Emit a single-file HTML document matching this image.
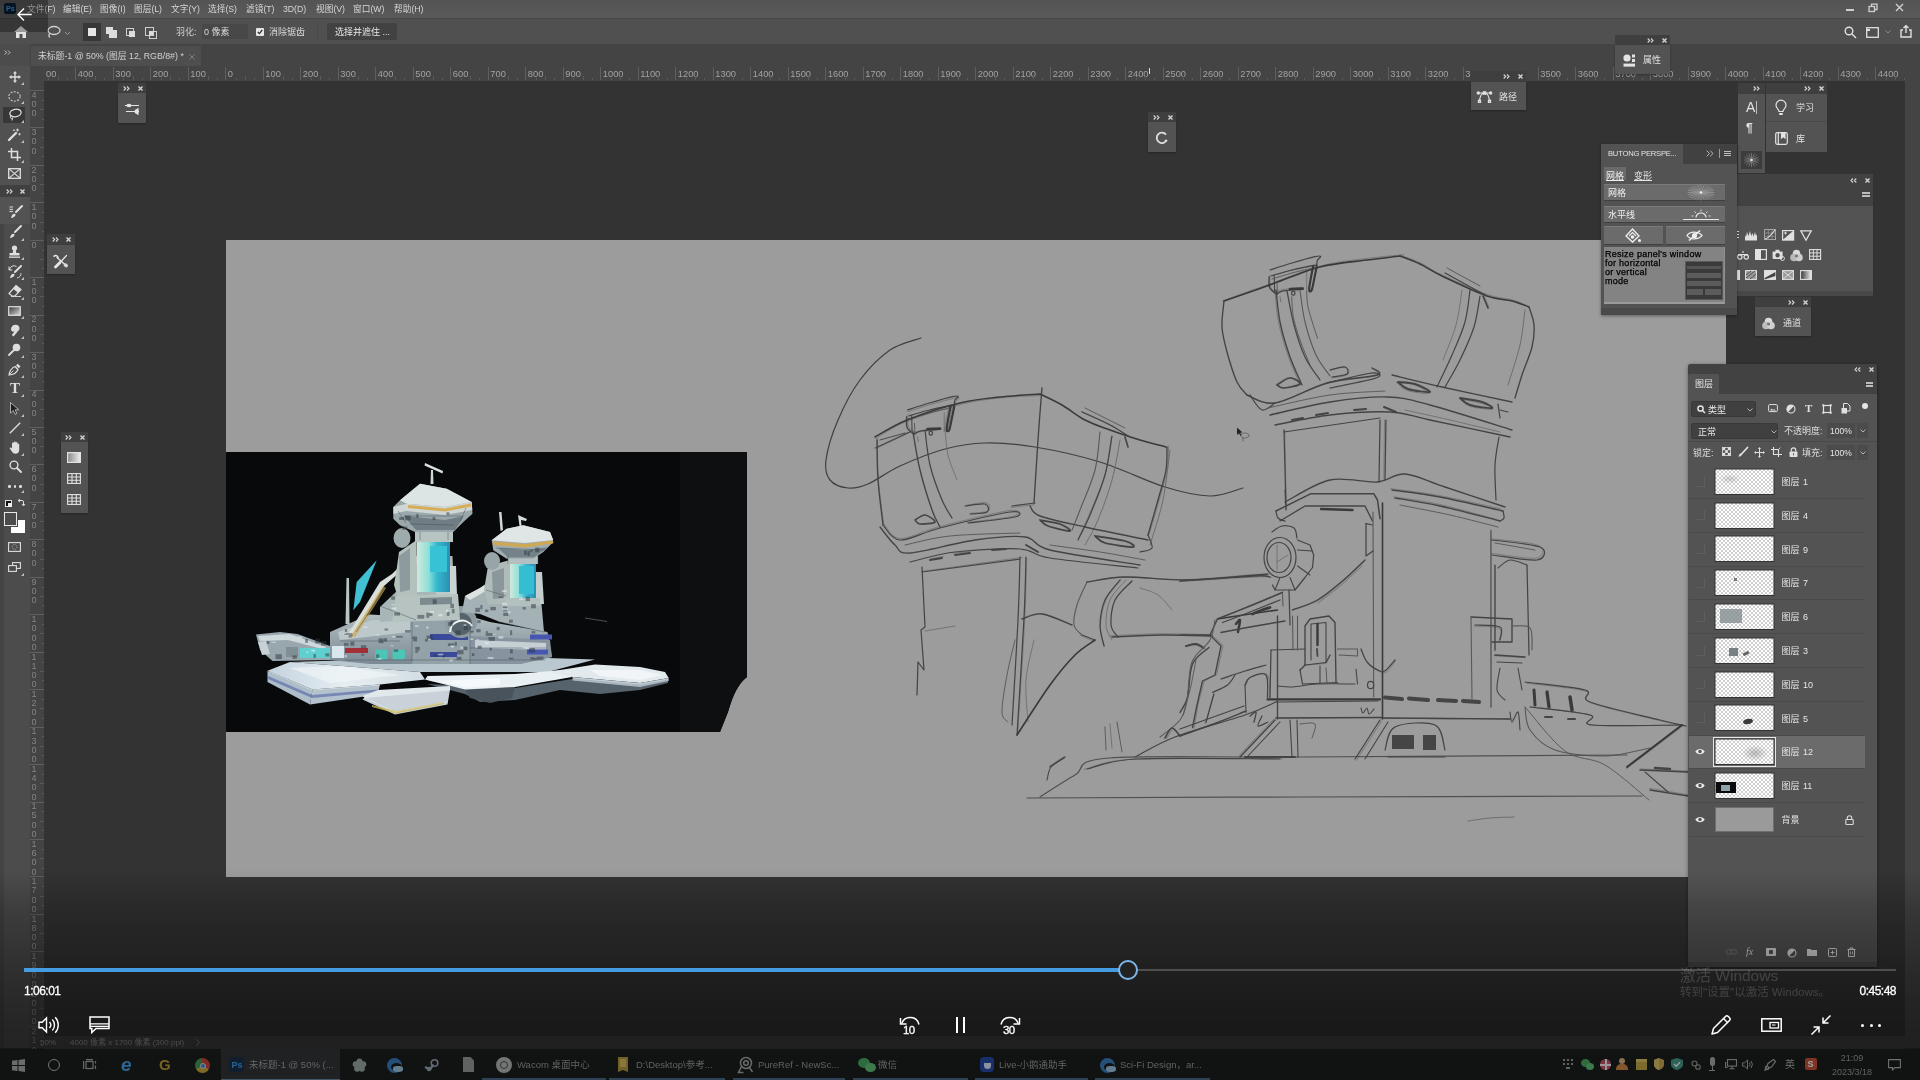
<!DOCTYPE html>
<html lang="zh-CN">
<head>
<meta charset="utf-8">
<title>未标题-1 @ 50% (图层 12, RGB/8#) *</title>
<style>
html,body{margin:0;padding:0;width:1920px;height:1080px;overflow:hidden;background:#333333;}
body{position:relative;font-family:"Liberation Sans","Noto Sans CJK SC",sans-serif;font-size:9px;color:#d6d6d6;-webkit-font-smoothing:antialiased;}
.a{position:absolute;}
.t{position:absolute;white-space:nowrap;line-height:1;}
svg{position:absolute;overflow:visible;}
.pn{position:absolute;background:#535353;box-shadow:0 1px 3px rgba(0,0,0,.35);}
.ph{position:absolute;left:0;right:0;top:0;background:#454545;}
.chev{position:absolute;font-size:7px;line-height:1;color:#d0d0d0;letter-spacing:-1px;font-weight:bold;}
.rn{position:absolute;top:69.5px;font-size:9.3px;line-height:1;color:#a2a2a2;}
.rt{position:absolute;top:67px;width:1px;height:13px;background:#5f5f5f;}
.vn{position:absolute;left:30px;font-size:9px;line-height:9.3px;color:#858585;width:8px;text-align:center;word-break:break-all;white-space:normal;}
</style>
</head>
<body>
<div id="root" style="position:absolute;left:0;top:0;width:1920px;height:1080px;transform:translateZ(0);will-change:transform">
<div class="a" style="left:0;top:0;width:1920px;height:18px;background:linear-gradient(to bottom,#545454,#5a5a5a)"></div>
<div class="a" style="left:0;top:18px;width:1920px;height:26.500px;background:#505050;border-top:1px solid #484848;box-sizing:border-box"></div>
<div class="a" style="left:0;top:44px;width:1920px;height:37px;background:#444444"></div>
<div class="a" style="left:0;top:44px;width:30px;height:1004px;background:#4c4c4c"></div>
<div class="a" style="left:30px;top:66px;width:14px;height:982px;background:#444444"></div>
<div class="a" style="left:1905px;top:81px;width:15px;height:967px;background:#444444"></div>
<div class="a" style="left:31px;top:46px;width:170px;height:20px;background:#4e4e4e"></div>
<div class="t" style="left:38px;top:52px;font-size:8.800px;color:#d0d0d0">未标题-1 @ 50% (图层 12, RGB/8#) *</div>
<svg style="left:188.500px;top:53.500px" width="6" height="6" viewBox="0 0 6 6" stroke="#7e7e7e" stroke-width="1"><path d="M0.500 0.500L5.500 5.500M5.500 0.500L0.500 5.500"/></svg>
<div class="t" style="left:27px;top:4.500px;font-size:8.700px;color:#d6d6d6">文件(F)</div>
<div class="t" style="left:63px;top:4.500px;font-size:8.700px;color:#d6d6d6">编辑(E)</div>
<div class="t" style="left:100px;top:4.500px;font-size:8.700px;color:#d6d6d6">图像(I)</div>
<div class="t" style="left:134px;top:4.500px;font-size:8.700px;color:#d6d6d6">图层(L)</div>
<div class="t" style="left:171px;top:4.500px;font-size:8.700px;color:#d6d6d6">文字(Y)</div>
<div class="t" style="left:208px;top:4.500px;font-size:8.700px;color:#d6d6d6">选择(S)</div>
<div class="t" style="left:246px;top:4.500px;font-size:8.700px;color:#d6d6d6">滤镜(T)</div>
<div class="t" style="left:283px;top:4.500px;font-size:8.700px;color:#d6d6d6">3D(D)</div>
<div class="t" style="left:316px;top:4.500px;font-size:8.700px;color:#d6d6d6">视图(V)</div>
<div class="t" style="left:353px;top:4.500px;font-size:8.700px;color:#d6d6d6">窗口(W)</div>
<div class="t" style="left:394px;top:4.500px;font-size:8.700px;color:#d6d6d6">帮助(H)</div>
<div class="a" style="left:4px;top:3px;width:12px;height:11px;background:#0a1e33;border-radius:2px"></div><div class="t" style="left:6px;top:5px;font-size:7px;color:#3d8fd8;font-weight:bold">Ps</div>
<div class="a" style="left:1846px;top:9px;width:8px;height:2px;background:#cfcfcf"></div>
<svg style="left:1868px;top:3px" width="10" height="10" viewBox="0 0 10 10" fill="none" stroke="#cfcfcf" stroke-width="1.300"><rect x="1" y="3.500" width="5.500" height="5"/><path d="M3.500 3.500V1.200H9V6.500H6.500"/></svg>
<svg style="left:1895px;top:3px" width="9" height="9" viewBox="0 0 9 9" stroke="#cfcfcf" stroke-width="1.400"><path d="M1 1L8 8M8 1L1 8"/></svg>
<svg style="left:14px;top:26px" width="14" height="12" viewBox="0 0 14 12" fill="#e2e2e2"><path d="M7 0L0 6h2v6h3.500V8h3v4H12V6h2z"/></svg>
<svg style="left:46px;top:25px" width="16" height="14" viewBox="0 0 16 14" fill="none" stroke="#cfcfcf" stroke-width="1.300"><ellipse cx="8" cy="5.500" rx="6" ry="4"/><path d="M4 8.500c-1.500 1-1.500 3 0 4"/></svg>
<svg style="left:64px;top:31px" width="7" height="5" viewBox="0 0 7 5" fill="none" stroke="#9a9a9a" stroke-width="1"><path d="M1 1l2.500 2.500L6 1"/></svg>
<div class="a" style="left:83px;top:23px;width:18px;height:18px;background:#383838"></div>
<div class="a" style="left:88px;top:28px;width:8px;height:8px;background:#e6e6e6"></div>
<div class="a" style="left:106px;top:27px;width:7px;height:7px;background:#dcdcdc"></div><div class="a" style="left:109px;top:30px;width:8px;height:8px;background:#dcdcdc"></div>
<div class="a" style="left:126px;top:28px;width:6px;height:6px;border:1px solid #cfcfcf"></div><div class="a" style="left:129px;top:31px;width:6px;height:6px;background:#dcdcdc"></div>
<div class="a" style="left:145px;top:27px;width:7px;height:7px;border:1px solid #cfcfcf"></div><div class="a" style="left:149px;top:31px;width:6px;height:6px;border:1px solid #cfcfcf"></div><div class="a" style="left:149px;top:31px;width:4px;height:4px;background:#dcdcdc"></div>
<div class="t" style="left:176px;top:28px;font-size:9px;color:#d0d0d0">羽化:</div>
<div class="a" style="left:202px;top:24px;width:46px;height:15px;background:#484848"></div>
<div class="t" style="left:204px;top:28px;font-size:9px;color:#dadada">0 像素</div>
<div class="a" style="left:256px;top:28px;width:8px;height:8px;background:#e6e6e6;border-radius:1px"></div>
<svg style="left:257px;top:29px" width="6" height="6" viewBox="0 0 6 6" fill="none" stroke="#333" stroke-width="1.300"><path d="M0.800 3l1.600 1.600L5.200 1"/></svg>
<div class="t" style="left:269px;top:28px;font-size:9px;color:#dadada">消除锯齿</div>
<div class="a" style="left:317px;top:22px;width:1px;height:19px;background:#484848"></div>
<div class="a" style="left:327px;top:23px;width:70px;height:17px;background:#424242;border-radius:2px"></div>
<div class="t" style="left:335px;top:28px;font-size:9px;color:#e8e8e8">选择并遮住 ...</div>
<svg style="left:1844px;top:26px" width="13" height="13" viewBox="0 0 13 13" fill="none" stroke="#e0e0e0" stroke-width="1.400"><circle cx="5" cy="5" r="3.800"/><path d="M8 8l4 4"/></svg>
<svg style="left:1866px;top:27px" width="13" height="11" viewBox="0 0 13 11" fill="none" stroke="#e0e0e0" stroke-width="1.300"><rect x="0.700" y="0.700" width="11.600" height="9.600"/><path d="M1 3h3" stroke-width="2"/></svg>
<svg style="left:1885px;top:30px" width="6" height="4" viewBox="0 0 6 4" fill="none" stroke="#8a8a8a" stroke-width="1"><path d="M0.500 0.500l2.500 2.500L5.500 0.500"/></svg>
<svg style="left:1900px;top:25px" width="12" height="13" viewBox="0 0 12 13" fill="none" stroke="#e0e0e0" stroke-width="1.400"><path d="M3 5H1v7h10V5H9M6 8V1M3.500 3L6 0.800 8.500 3"/></svg>
<div class="rn" style="left:46.0px">00</div>
<div class="a" style="left:48.2px;top:78px;width:1px;height:2px;background:#5a5a5a"></div>
<div class="a" style="left:57.6px;top:76px;width:1px;height:4px;background:#5a5a5a"></div>
<div class="a" style="left:66.9px;top:78px;width:1px;height:2px;background:#5a5a5a"></div>
<div class="rt" style="left:75.3px"></div>
<div class="rn" style="left:77.8px">400</div>
<div class="a" style="left:85.7px;top:78px;width:1px;height:2px;background:#5a5a5a"></div>
<div class="a" style="left:95.1px;top:76px;width:1px;height:4px;background:#5a5a5a"></div>
<div class="a" style="left:104.4px;top:78px;width:1px;height:2px;background:#5a5a5a"></div>
<div class="rt" style="left:112.8px"></div>
<div class="rn" style="left:115.3px">300</div>
<div class="a" style="left:123.2px;top:78px;width:1px;height:2px;background:#5a5a5a"></div>
<div class="a" style="left:132.6px;top:76px;width:1px;height:4px;background:#5a5a5a"></div>
<div class="a" style="left:141.9px;top:78px;width:1px;height:2px;background:#5a5a5a"></div>
<div class="rt" style="left:150.3px"></div>
<div class="rn" style="left:152.8px">200</div>
<div class="a" style="left:160.7px;top:78px;width:1px;height:2px;background:#5a5a5a"></div>
<div class="a" style="left:170.1px;top:76px;width:1px;height:4px;background:#5a5a5a"></div>
<div class="a" style="left:179.4px;top:78px;width:1px;height:2px;background:#5a5a5a"></div>
<div class="rt" style="left:187.8px"></div>
<div class="rn" style="left:190.3px">100</div>
<div class="a" style="left:198.2px;top:78px;width:1px;height:2px;background:#5a5a5a"></div>
<div class="a" style="left:207.6px;top:76px;width:1px;height:4px;background:#5a5a5a"></div>
<div class="a" style="left:216.9px;top:78px;width:1px;height:2px;background:#5a5a5a"></div>
<div class="rt" style="left:225.3px"></div>
<div class="rn" style="left:227.8px">0</div>
<div class="a" style="left:235.7px;top:78px;width:1px;height:2px;background:#5a5a5a"></div>
<div class="a" style="left:245.1px;top:76px;width:1px;height:4px;background:#5a5a5a"></div>
<div class="a" style="left:254.4px;top:78px;width:1px;height:2px;background:#5a5a5a"></div>
<div class="rt" style="left:262.8px"></div>
<div class="rn" style="left:265.3px">100</div>
<div class="a" style="left:273.2px;top:78px;width:1px;height:2px;background:#5a5a5a"></div>
<div class="a" style="left:282.6px;top:76px;width:1px;height:4px;background:#5a5a5a"></div>
<div class="a" style="left:291.9px;top:78px;width:1px;height:2px;background:#5a5a5a"></div>
<div class="rt" style="left:300.3px"></div>
<div class="rn" style="left:302.8px">200</div>
<div class="a" style="left:310.7px;top:78px;width:1px;height:2px;background:#5a5a5a"></div>
<div class="a" style="left:320.1px;top:76px;width:1px;height:4px;background:#5a5a5a"></div>
<div class="a" style="left:329.4px;top:78px;width:1px;height:2px;background:#5a5a5a"></div>
<div class="rt" style="left:337.8px"></div>
<div class="rn" style="left:340.3px">300</div>
<div class="a" style="left:348.2px;top:78px;width:1px;height:2px;background:#5a5a5a"></div>
<div class="a" style="left:357.6px;top:76px;width:1px;height:4px;background:#5a5a5a"></div>
<div class="a" style="left:366.9px;top:78px;width:1px;height:2px;background:#5a5a5a"></div>
<div class="rt" style="left:375.3px"></div>
<div class="rn" style="left:377.8px">400</div>
<div class="a" style="left:385.7px;top:78px;width:1px;height:2px;background:#5a5a5a"></div>
<div class="a" style="left:395.1px;top:76px;width:1px;height:4px;background:#5a5a5a"></div>
<div class="a" style="left:404.4px;top:78px;width:1px;height:2px;background:#5a5a5a"></div>
<div class="rt" style="left:412.8px"></div>
<div class="rn" style="left:415.3px">500</div>
<div class="a" style="left:423.2px;top:78px;width:1px;height:2px;background:#5a5a5a"></div>
<div class="a" style="left:432.6px;top:76px;width:1px;height:4px;background:#5a5a5a"></div>
<div class="a" style="left:441.9px;top:78px;width:1px;height:2px;background:#5a5a5a"></div>
<div class="rt" style="left:450.3px"></div>
<div class="rn" style="left:452.8px">600</div>
<div class="a" style="left:460.7px;top:78px;width:1px;height:2px;background:#5a5a5a"></div>
<div class="a" style="left:470.1px;top:76px;width:1px;height:4px;background:#5a5a5a"></div>
<div class="a" style="left:479.4px;top:78px;width:1px;height:2px;background:#5a5a5a"></div>
<div class="rt" style="left:487.8px"></div>
<div class="rn" style="left:490.3px">700</div>
<div class="a" style="left:498.2px;top:78px;width:1px;height:2px;background:#5a5a5a"></div>
<div class="a" style="left:507.6px;top:76px;width:1px;height:4px;background:#5a5a5a"></div>
<div class="a" style="left:516.9px;top:78px;width:1px;height:2px;background:#5a5a5a"></div>
<div class="rt" style="left:525.3px"></div>
<div class="rn" style="left:527.8px">800</div>
<div class="a" style="left:535.7px;top:78px;width:1px;height:2px;background:#5a5a5a"></div>
<div class="a" style="left:545.0px;top:76px;width:1px;height:4px;background:#5a5a5a"></div>
<div class="a" style="left:554.4px;top:78px;width:1px;height:2px;background:#5a5a5a"></div>
<div class="rt" style="left:562.8px"></div>
<div class="rn" style="left:565.3px">900</div>
<div class="a" style="left:573.2px;top:78px;width:1px;height:2px;background:#5a5a5a"></div>
<div class="a" style="left:582.5px;top:76px;width:1px;height:4px;background:#5a5a5a"></div>
<div class="a" style="left:591.9px;top:78px;width:1px;height:2px;background:#5a5a5a"></div>
<div class="rt" style="left:600.3px"></div>
<div class="rn" style="left:602.8px">1000</div>
<div class="a" style="left:610.7px;top:78px;width:1px;height:2px;background:#5a5a5a"></div>
<div class="a" style="left:620.0px;top:76px;width:1px;height:4px;background:#5a5a5a"></div>
<div class="a" style="left:629.4px;top:78px;width:1px;height:2px;background:#5a5a5a"></div>
<div class="rt" style="left:637.8px"></div>
<div class="rn" style="left:640.3px">1100</div>
<div class="a" style="left:648.2px;top:78px;width:1px;height:2px;background:#5a5a5a"></div>
<div class="a" style="left:657.5px;top:76px;width:1px;height:4px;background:#5a5a5a"></div>
<div class="a" style="left:666.9px;top:78px;width:1px;height:2px;background:#5a5a5a"></div>
<div class="rt" style="left:675.3px"></div>
<div class="rn" style="left:677.8px">1200</div>
<div class="a" style="left:685.7px;top:78px;width:1px;height:2px;background:#5a5a5a"></div>
<div class="a" style="left:695.0px;top:76px;width:1px;height:4px;background:#5a5a5a"></div>
<div class="a" style="left:704.4px;top:78px;width:1px;height:2px;background:#5a5a5a"></div>
<div class="rt" style="left:712.8px"></div>
<div class="rn" style="left:715.3px">1300</div>
<div class="a" style="left:723.2px;top:78px;width:1px;height:2px;background:#5a5a5a"></div>
<div class="a" style="left:732.5px;top:76px;width:1px;height:4px;background:#5a5a5a"></div>
<div class="a" style="left:741.9px;top:78px;width:1px;height:2px;background:#5a5a5a"></div>
<div class="rt" style="left:750.3px"></div>
<div class="rn" style="left:752.8px">1400</div>
<div class="a" style="left:760.7px;top:78px;width:1px;height:2px;background:#5a5a5a"></div>
<div class="a" style="left:770.0px;top:76px;width:1px;height:4px;background:#5a5a5a"></div>
<div class="a" style="left:779.4px;top:78px;width:1px;height:2px;background:#5a5a5a"></div>
<div class="rt" style="left:787.8px"></div>
<div class="rn" style="left:790.3px">1500</div>
<div class="a" style="left:798.2px;top:78px;width:1px;height:2px;background:#5a5a5a"></div>
<div class="a" style="left:807.5px;top:76px;width:1px;height:4px;background:#5a5a5a"></div>
<div class="a" style="left:816.9px;top:78px;width:1px;height:2px;background:#5a5a5a"></div>
<div class="rt" style="left:825.3px"></div>
<div class="rn" style="left:827.8px">1600</div>
<div class="a" style="left:835.7px;top:78px;width:1px;height:2px;background:#5a5a5a"></div>
<div class="a" style="left:845.0px;top:76px;width:1px;height:4px;background:#5a5a5a"></div>
<div class="a" style="left:854.4px;top:78px;width:1px;height:2px;background:#5a5a5a"></div>
<div class="rt" style="left:862.8px"></div>
<div class="rn" style="left:865.3px">1700</div>
<div class="a" style="left:873.2px;top:78px;width:1px;height:2px;background:#5a5a5a"></div>
<div class="a" style="left:882.5px;top:76px;width:1px;height:4px;background:#5a5a5a"></div>
<div class="a" style="left:891.9px;top:78px;width:1px;height:2px;background:#5a5a5a"></div>
<div class="rt" style="left:900.3px"></div>
<div class="rn" style="left:902.8px">1800</div>
<div class="a" style="left:910.7px;top:78px;width:1px;height:2px;background:#5a5a5a"></div>
<div class="a" style="left:920.0px;top:76px;width:1px;height:4px;background:#5a5a5a"></div>
<div class="a" style="left:929.4px;top:78px;width:1px;height:2px;background:#5a5a5a"></div>
<div class="rt" style="left:937.8px"></div>
<div class="rn" style="left:940.3px">1900</div>
<div class="a" style="left:948.2px;top:78px;width:1px;height:2px;background:#5a5a5a"></div>
<div class="a" style="left:957.5px;top:76px;width:1px;height:4px;background:#5a5a5a"></div>
<div class="a" style="left:966.9px;top:78px;width:1px;height:2px;background:#5a5a5a"></div>
<div class="rt" style="left:975.3px"></div>
<div class="rn" style="left:977.8px">2000</div>
<div class="a" style="left:985.7px;top:78px;width:1px;height:2px;background:#5a5a5a"></div>
<div class="a" style="left:995.0px;top:76px;width:1px;height:4px;background:#5a5a5a"></div>
<div class="a" style="left:1004.4px;top:78px;width:1px;height:2px;background:#5a5a5a"></div>
<div class="rt" style="left:1012.8px"></div>
<div class="rn" style="left:1015.3px">2100</div>
<div class="a" style="left:1023.2px;top:78px;width:1px;height:2px;background:#5a5a5a"></div>
<div class="a" style="left:1032.5px;top:76px;width:1px;height:4px;background:#5a5a5a"></div>
<div class="a" style="left:1041.9px;top:78px;width:1px;height:2px;background:#5a5a5a"></div>
<div class="rt" style="left:1050.3px"></div>
<div class="rn" style="left:1052.8px">2200</div>
<div class="a" style="left:1060.7px;top:78px;width:1px;height:2px;background:#5a5a5a"></div>
<div class="a" style="left:1070.0px;top:76px;width:1px;height:4px;background:#5a5a5a"></div>
<div class="a" style="left:1079.4px;top:78px;width:1px;height:2px;background:#5a5a5a"></div>
<div class="rt" style="left:1087.8px"></div>
<div class="rn" style="left:1090.3px">2300</div>
<div class="a" style="left:1098.2px;top:78px;width:1px;height:2px;background:#5a5a5a"></div>
<div class="a" style="left:1107.5px;top:76px;width:1px;height:4px;background:#5a5a5a"></div>
<div class="a" style="left:1116.9px;top:78px;width:1px;height:2px;background:#5a5a5a"></div>
<div class="rt" style="left:1125.3px"></div>
<div class="rn" style="left:1127.8px">2400</div>
<div class="a" style="left:1135.7px;top:78px;width:1px;height:2px;background:#5a5a5a"></div>
<div class="a" style="left:1145.0px;top:76px;width:1px;height:4px;background:#5a5a5a"></div>
<div class="a" style="left:1154.4px;top:78px;width:1px;height:2px;background:#5a5a5a"></div>
<div class="rt" style="left:1162.8px"></div>
<div class="rn" style="left:1165.3px">2500</div>
<div class="a" style="left:1173.2px;top:78px;width:1px;height:2px;background:#5a5a5a"></div>
<div class="a" style="left:1182.5px;top:76px;width:1px;height:4px;background:#5a5a5a"></div>
<div class="a" style="left:1191.9px;top:78px;width:1px;height:2px;background:#5a5a5a"></div>
<div class="rt" style="left:1200.3px"></div>
<div class="rn" style="left:1202.8px">2600</div>
<div class="a" style="left:1210.7px;top:78px;width:1px;height:2px;background:#5a5a5a"></div>
<div class="a" style="left:1220.0px;top:76px;width:1px;height:4px;background:#5a5a5a"></div>
<div class="a" style="left:1229.4px;top:78px;width:1px;height:2px;background:#5a5a5a"></div>
<div class="rt" style="left:1237.8px"></div>
<div class="rn" style="left:1240.3px">2700</div>
<div class="a" style="left:1248.2px;top:78px;width:1px;height:2px;background:#5a5a5a"></div>
<div class="a" style="left:1257.5px;top:76px;width:1px;height:4px;background:#5a5a5a"></div>
<div class="a" style="left:1266.9px;top:78px;width:1px;height:2px;background:#5a5a5a"></div>
<div class="rt" style="left:1275.3px"></div>
<div class="rn" style="left:1277.8px">2800</div>
<div class="a" style="left:1285.7px;top:78px;width:1px;height:2px;background:#5a5a5a"></div>
<div class="a" style="left:1295.0px;top:76px;width:1px;height:4px;background:#5a5a5a"></div>
<div class="a" style="left:1304.4px;top:78px;width:1px;height:2px;background:#5a5a5a"></div>
<div class="rt" style="left:1312.8px"></div>
<div class="rn" style="left:1315.3px">2900</div>
<div class="a" style="left:1323.2px;top:78px;width:1px;height:2px;background:#5a5a5a"></div>
<div class="a" style="left:1332.5px;top:76px;width:1px;height:4px;background:#5a5a5a"></div>
<div class="a" style="left:1341.9px;top:78px;width:1px;height:2px;background:#5a5a5a"></div>
<div class="rt" style="left:1350.3px"></div>
<div class="rn" style="left:1352.8px">3000</div>
<div class="a" style="left:1360.7px;top:78px;width:1px;height:2px;background:#5a5a5a"></div>
<div class="a" style="left:1370.0px;top:76px;width:1px;height:4px;background:#5a5a5a"></div>
<div class="a" style="left:1379.4px;top:78px;width:1px;height:2px;background:#5a5a5a"></div>
<div class="rt" style="left:1387.8px"></div>
<div class="rn" style="left:1390.3px">3100</div>
<div class="a" style="left:1398.2px;top:78px;width:1px;height:2px;background:#5a5a5a"></div>
<div class="a" style="left:1407.5px;top:76px;width:1px;height:4px;background:#5a5a5a"></div>
<div class="a" style="left:1416.9px;top:78px;width:1px;height:2px;background:#5a5a5a"></div>
<div class="rt" style="left:1425.3px"></div>
<div class="rn" style="left:1427.8px">3200</div>
<div class="a" style="left:1435.7px;top:78px;width:1px;height:2px;background:#5a5a5a"></div>
<div class="a" style="left:1445.0px;top:76px;width:1px;height:4px;background:#5a5a5a"></div>
<div class="a" style="left:1454.4px;top:78px;width:1px;height:2px;background:#5a5a5a"></div>
<div class="rt" style="left:1462.8px"></div>
<div class="rn" style="left:1465.3px">3</div>
<div class="a" style="left:1473.2px;top:78px;width:1px;height:2px;background:#5a5a5a"></div>
<div class="a" style="left:1482.5px;top:76px;width:1px;height:4px;background:#5a5a5a"></div>
<div class="a" style="left:1491.9px;top:78px;width:1px;height:2px;background:#5a5a5a"></div>
<div class="rt" style="left:1537.8px"></div>
<div class="rn" style="left:1540.3px">3500</div>
<div class="a" style="left:1548.2px;top:78px;width:1px;height:2px;background:#5a5a5a"></div>
<div class="a" style="left:1557.5px;top:76px;width:1px;height:4px;background:#5a5a5a"></div>
<div class="a" style="left:1566.9px;top:78px;width:1px;height:2px;background:#5a5a5a"></div>
<div class="rt" style="left:1575.3px"></div>
<div class="rn" style="left:1577.8px">3600</div>
<div class="a" style="left:1585.7px;top:78px;width:1px;height:2px;background:#5a5a5a"></div>
<div class="a" style="left:1595.0px;top:76px;width:1px;height:4px;background:#5a5a5a"></div>
<div class="a" style="left:1604.4px;top:78px;width:1px;height:2px;background:#5a5a5a"></div>
<div class="rt" style="left:1612.8px"></div>
<div class="rn" style="left:1615.3px">3700</div>
<div class="a" style="left:1623.2px;top:78px;width:1px;height:2px;background:#5a5a5a"></div>
<div class="a" style="left:1632.5px;top:76px;width:1px;height:4px;background:#5a5a5a"></div>
<div class="a" style="left:1641.9px;top:78px;width:1px;height:2px;background:#5a5a5a"></div>
<div class="rt" style="left:1650.3px"></div>
<div class="rn" style="left:1652.8px">3800</div>
<div class="a" style="left:1660.7px;top:78px;width:1px;height:2px;background:#5a5a5a"></div>
<div class="a" style="left:1670.0px;top:76px;width:1px;height:4px;background:#5a5a5a"></div>
<div class="a" style="left:1679.4px;top:78px;width:1px;height:2px;background:#5a5a5a"></div>
<div class="rt" style="left:1687.8px"></div>
<div class="rn" style="left:1690.3px">3900</div>
<div class="a" style="left:1698.2px;top:78px;width:1px;height:2px;background:#5a5a5a"></div>
<div class="a" style="left:1707.5px;top:76px;width:1px;height:4px;background:#5a5a5a"></div>
<div class="a" style="left:1716.9px;top:78px;width:1px;height:2px;background:#5a5a5a"></div>
<div class="rt" style="left:1725.3px"></div>
<div class="rn" style="left:1727.8px">4000</div>
<div class="a" style="left:1735.7px;top:78px;width:1px;height:2px;background:#5a5a5a"></div>
<div class="a" style="left:1745.0px;top:76px;width:1px;height:4px;background:#5a5a5a"></div>
<div class="a" style="left:1754.4px;top:78px;width:1px;height:2px;background:#5a5a5a"></div>
<div class="rt" style="left:1762.8px"></div>
<div class="rn" style="left:1765.3px">4100</div>
<div class="a" style="left:1773.2px;top:78px;width:1px;height:2px;background:#5a5a5a"></div>
<div class="a" style="left:1782.5px;top:76px;width:1px;height:4px;background:#5a5a5a"></div>
<div class="a" style="left:1791.9px;top:78px;width:1px;height:2px;background:#5a5a5a"></div>
<div class="rt" style="left:1800.3px"></div>
<div class="rn" style="left:1802.8px">4200</div>
<div class="a" style="left:1810.7px;top:78px;width:1px;height:2px;background:#5a5a5a"></div>
<div class="a" style="left:1820.0px;top:76px;width:1px;height:4px;background:#5a5a5a"></div>
<div class="a" style="left:1829.4px;top:78px;width:1px;height:2px;background:#5a5a5a"></div>
<div class="rt" style="left:1837.8px"></div>
<div class="rn" style="left:1840.3px">4300</div>
<div class="a" style="left:1848.2px;top:78px;width:1px;height:2px;background:#5a5a5a"></div>
<div class="a" style="left:1857.5px;top:76px;width:1px;height:4px;background:#5a5a5a"></div>
<div class="a" style="left:1866.9px;top:78px;width:1px;height:2px;background:#5a5a5a"></div>
<div class="rt" style="left:1875.3px"></div>
<div class="rn" style="left:1877.8px">4400</div>
<div class="a" style="left:1885.7px;top:78px;width:1px;height:2px;background:#5a5a5a"></div>
<div class="a" style="left:1895.0px;top:76px;width:1px;height:4px;background:#5a5a5a"></div>
<div class="a" style="left:1904.4px;top:78px;width:1px;height:2px;background:#5a5a5a"></div>
<div class="a" style="left:1149px;top:68px;width:1px;height:6px;background:#ddd"></div>
<div class="a" style="left:30px;top:89.9px;width:14px;height:1px;background:#606060"></div>
<div class="vn" style="top:90.7px">400</div>
<div class="a" style="left:42px;top:99.8px;width:2px;height:1px;background:#5a5a5a"></div>
<div class="a" style="left:40px;top:109.1px;width:4px;height:1px;background:#5a5a5a"></div>
<div class="a" style="left:42px;top:118.5px;width:2px;height:1px;background:#5a5a5a"></div>
<div class="a" style="left:30px;top:127.3px;width:14px;height:1px;background:#606060"></div>
<div class="vn" style="top:128.1px">300</div>
<div class="a" style="left:42px;top:137.2px;width:2px;height:1px;background:#5a5a5a"></div>
<div class="a" style="left:40px;top:146.6px;width:4px;height:1px;background:#5a5a5a"></div>
<div class="a" style="left:42px;top:155.9px;width:2px;height:1px;background:#5a5a5a"></div>
<div class="a" style="left:30px;top:164.8px;width:14px;height:1px;background:#606060"></div>
<div class="vn" style="top:165.6px">200</div>
<div class="a" style="left:42px;top:174.7px;width:2px;height:1px;background:#5a5a5a"></div>
<div class="a" style="left:40px;top:184.0px;width:4px;height:1px;background:#5a5a5a"></div>
<div class="a" style="left:42px;top:193.4px;width:2px;height:1px;background:#5a5a5a"></div>
<div class="a" style="left:30px;top:202.2px;width:14px;height:1px;background:#606060"></div>
<div class="vn" style="top:203.1px">100</div>
<div class="a" style="left:42px;top:212.1px;width:2px;height:1px;background:#5a5a5a"></div>
<div class="a" style="left:40px;top:221.5px;width:4px;height:1px;background:#5a5a5a"></div>
<div class="a" style="left:42px;top:230.8px;width:2px;height:1px;background:#5a5a5a"></div>
<div class="a" style="left:30px;top:239.7px;width:14px;height:1px;background:#606060"></div>
<div class="vn" style="top:240.5px">0</div>
<div class="a" style="left:42px;top:249.6px;width:2px;height:1px;background:#5a5a5a"></div>
<div class="a" style="left:40px;top:258.9px;width:4px;height:1px;background:#5a5a5a"></div>
<div class="a" style="left:42px;top:268.3px;width:2px;height:1px;background:#5a5a5a"></div>
<div class="a" style="left:30px;top:277.1px;width:14px;height:1px;background:#606060"></div>
<div class="vn" style="top:277.9px">100</div>
<div class="a" style="left:42px;top:287.0px;width:2px;height:1px;background:#5a5a5a"></div>
<div class="a" style="left:40px;top:296.4px;width:4px;height:1px;background:#5a5a5a"></div>
<div class="a" style="left:42px;top:305.7px;width:2px;height:1px;background:#5a5a5a"></div>
<div class="a" style="left:30px;top:314.6px;width:14px;height:1px;background:#606060"></div>
<div class="vn" style="top:315.4px">200</div>
<div class="a" style="left:42px;top:324.5px;width:2px;height:1px;background:#5a5a5a"></div>
<div class="a" style="left:40px;top:333.8px;width:4px;height:1px;background:#5a5a5a"></div>
<div class="a" style="left:42px;top:343.2px;width:2px;height:1px;background:#5a5a5a"></div>
<div class="a" style="left:30px;top:352.1px;width:14px;height:1px;background:#606060"></div>
<div class="vn" style="top:352.9px">300</div>
<div class="a" style="left:42px;top:361.9px;width:2px;height:1px;background:#5a5a5a"></div>
<div class="a" style="left:40px;top:371.3px;width:4px;height:1px;background:#5a5a5a"></div>
<div class="a" style="left:42px;top:380.6px;width:2px;height:1px;background:#5a5a5a"></div>
<div class="a" style="left:30px;top:389.5px;width:14px;height:1px;background:#606060"></div>
<div class="vn" style="top:390.3px">400</div>
<div class="a" style="left:42px;top:399.4px;width:2px;height:1px;background:#5a5a5a"></div>
<div class="a" style="left:40px;top:408.7px;width:4px;height:1px;background:#5a5a5a"></div>
<div class="a" style="left:42px;top:418.1px;width:2px;height:1px;background:#5a5a5a"></div>
<div class="a" style="left:30px;top:426.9px;width:14px;height:1px;background:#606060"></div>
<div class="vn" style="top:427.8px">500</div>
<div class="a" style="left:42px;top:436.8px;width:2px;height:1px;background:#5a5a5a"></div>
<div class="a" style="left:40px;top:446.2px;width:4px;height:1px;background:#5a5a5a"></div>
<div class="a" style="left:42px;top:455.5px;width:2px;height:1px;background:#5a5a5a"></div>
<div class="a" style="left:30px;top:464.4px;width:14px;height:1px;background:#606060"></div>
<div class="vn" style="top:465.2px">600</div>
<div class="a" style="left:42px;top:474.3px;width:2px;height:1px;background:#5a5a5a"></div>
<div class="a" style="left:40px;top:483.6px;width:4px;height:1px;background:#5a5a5a"></div>
<div class="a" style="left:42px;top:493.0px;width:2px;height:1px;background:#5a5a5a"></div>
<div class="a" style="left:30px;top:501.9px;width:14px;height:1px;background:#606060"></div>
<div class="vn" style="top:502.7px">700</div>
<div class="a" style="left:42px;top:511.7px;width:2px;height:1px;background:#5a5a5a"></div>
<div class="a" style="left:40px;top:521.1px;width:4px;height:1px;background:#5a5a5a"></div>
<div class="a" style="left:42px;top:530.4px;width:2px;height:1px;background:#5a5a5a"></div>
<div class="a" style="left:30px;top:539.3px;width:14px;height:1px;background:#606060"></div>
<div class="vn" style="top:540.1px">800</div>
<div class="a" style="left:42px;top:549.2px;width:2px;height:1px;background:#5a5a5a"></div>
<div class="a" style="left:40px;top:558.5px;width:4px;height:1px;background:#5a5a5a"></div>
<div class="a" style="left:42px;top:567.9px;width:2px;height:1px;background:#5a5a5a"></div>
<div class="a" style="left:30px;top:576.8px;width:14px;height:1px;background:#606060"></div>
<div class="vn" style="top:577.5px">900</div>
<div class="a" style="left:42px;top:586.6px;width:2px;height:1px;background:#5a5a5a"></div>
<div class="a" style="left:40px;top:596.0px;width:4px;height:1px;background:#5a5a5a"></div>
<div class="a" style="left:42px;top:605.3px;width:2px;height:1px;background:#5a5a5a"></div>
<div class="a" style="left:30px;top:614.2px;width:14px;height:1px;background:#606060"></div>
<div class="vn" style="top:615.0px">1000</div>
<div class="a" style="left:42px;top:624.1px;width:2px;height:1px;background:#5a5a5a"></div>
<div class="a" style="left:40px;top:633.4px;width:4px;height:1px;background:#5a5a5a"></div>
<div class="a" style="left:42px;top:642.8px;width:2px;height:1px;background:#5a5a5a"></div>
<div class="a" style="left:30px;top:651.7px;width:14px;height:1px;background:#606060"></div>
<div class="vn" style="top:652.5px">1100</div>
<div class="a" style="left:42px;top:661.5px;width:2px;height:1px;background:#5a5a5a"></div>
<div class="a" style="left:40px;top:670.9px;width:4px;height:1px;background:#5a5a5a"></div>
<div class="a" style="left:42px;top:680.2px;width:2px;height:1px;background:#5a5a5a"></div>
<div class="a" style="left:30px;top:689.1px;width:14px;height:1px;background:#606060"></div>
<div class="vn" style="top:689.9px">1200</div>
<div class="a" style="left:42px;top:699.0px;width:2px;height:1px;background:#5a5a5a"></div>
<div class="a" style="left:40px;top:708.3px;width:4px;height:1px;background:#5a5a5a"></div>
<div class="a" style="left:42px;top:717.7px;width:2px;height:1px;background:#5a5a5a"></div>
<div class="a" style="left:30px;top:726.5px;width:14px;height:1px;background:#606060"></div>
<div class="vn" style="top:727.3px">1300</div>
<div class="a" style="left:42px;top:736.4px;width:2px;height:1px;background:#5a5a5a"></div>
<div class="a" style="left:40px;top:745.8px;width:4px;height:1px;background:#5a5a5a"></div>
<div class="a" style="left:42px;top:755.1px;width:2px;height:1px;background:#5a5a5a"></div>
<div class="a" style="left:30px;top:764.0px;width:14px;height:1px;background:#606060"></div>
<div class="vn" style="top:764.8px">1400</div>
<div class="a" style="left:42px;top:773.9px;width:2px;height:1px;background:#5a5a5a"></div>
<div class="a" style="left:40px;top:783.2px;width:4px;height:1px;background:#5a5a5a"></div>
<div class="a" style="left:42px;top:792.6px;width:2px;height:1px;background:#5a5a5a"></div>
<div class="a" style="left:30px;top:801.5px;width:14px;height:1px;background:#606060"></div>
<div class="vn" style="top:802.2px">1500</div>
<div class="a" style="left:42px;top:811.3px;width:2px;height:1px;background:#5a5a5a"></div>
<div class="a" style="left:40px;top:820.7px;width:4px;height:1px;background:#5a5a5a"></div>
<div class="a" style="left:42px;top:830.0px;width:2px;height:1px;background:#5a5a5a"></div>
<div class="a" style="left:30px;top:838.9px;width:14px;height:1px;background:#606060"></div>
<div class="vn" style="top:839.7px">1600</div>
<div class="a" style="left:42px;top:848.8px;width:2px;height:1px;background:#5a5a5a"></div>
<div class="a" style="left:40px;top:858.1px;width:4px;height:1px;background:#5a5a5a"></div>
<div class="a" style="left:42px;top:867.5px;width:2px;height:1px;background:#5a5a5a"></div>
<div class="a" style="left:30px;top:876.4px;width:14px;height:1px;background:#606060"></div>
<div class="vn" style="top:877.2px">1700</div>
<div class="a" style="left:42px;top:886.2px;width:2px;height:1px;background:#5a5a5a"></div>
<div class="a" style="left:40px;top:895.6px;width:4px;height:1px;background:#5a5a5a"></div>
<div class="a" style="left:42px;top:904.9px;width:2px;height:1px;background:#5a5a5a"></div>
<div class="a" style="left:30px;top:913.8px;width:14px;height:1px;background:#606060"></div>
<div class="vn" style="top:914.6px">1800</div>
<div class="a" style="left:42px;top:923.7px;width:2px;height:1px;background:#5a5a5a"></div>
<div class="a" style="left:40px;top:933.0px;width:4px;height:1px;background:#5a5a5a"></div>
<div class="a" style="left:42px;top:942.4px;width:2px;height:1px;background:#5a5a5a"></div>
<div class="a" style="left:30px;top:951.2px;width:14px;height:1px;background:#606060"></div>
<div class="vn" style="top:952.0px">1900</div>
<div class="a" style="left:42px;top:961.1px;width:2px;height:1px;background:#5a5a5a"></div>
<div class="a" style="left:40px;top:970.5px;width:4px;height:1px;background:#5a5a5a"></div>
<div class="a" style="left:42px;top:979.8px;width:2px;height:1px;background:#5a5a5a"></div>
<div class="a" style="left:30px;top:988.7px;width:14px;height:1px;background:#606060"></div>
<div class="vn" style="top:989.5px">2000</div>
<div class="a" style="left:42px;top:998.6px;width:2px;height:1px;background:#5a5a5a"></div>
<div class="a" style="left:40px;top:1007.9px;width:4px;height:1px;background:#5a5a5a"></div>
<div class="a" style="left:42px;top:1017.3px;width:2px;height:1px;background:#5a5a5a"></div>
<div class="a" style="left:30px;top:1026.2px;width:14px;height:1px;background:#606060"></div>
<div class="vn" style="top:1027.0px">2100</div>
<div class="a" style="left:42px;top:1036.0px;width:2px;height:1px;background:#5a5a5a"></div>
<div class="a" style="left:40px;top:1045.4px;width:4px;height:1px;background:#5a5a5a"></div>
<div class="a" style="left:42px;top:1054.7px;width:2px;height:1px;background:#5a5a5a"></div>
<div class="a" style="left:0;top:66px;width:30px;height:119px;background:#515151"></div>
<div class="a" style="left:0;top:185px;width:30px;height:12px;background:#404040"></div>
<div class="a" style="left:0;top:197px;width:30px;height:27px;background:#535353"></div>
<div class="a" style="left:0;top:224px;width:4px;height:824px;background:#444"></div>
<svg style="left:6px;top:188.500px" width="7" height="5" viewBox="0 0 7 5" fill="none" stroke="#d4d4d4" stroke-width="1.100"><path d="M0.700 0.500L2.700 2.500 0.700 4.500M4 0.500L6 2.500 4 4.500"/></svg>
<svg style="left:19.500px;top:188.500px" width="5" height="5" viewBox="0 0 5 5" fill="none" stroke="#d4d4d4" stroke-width="1.400"><path d="M0.500 0.500L4.500 4.500M4.500 0.500L0.500 4.500"/></svg>
<svg style="left:4px;top:50px" width="7" height="5" viewBox="0 0 7 5" fill="none" stroke="#c4c4c4" stroke-width="1"><path d="M0.700 0.500L2.700 2.500 0.700 4.500M4 0.500L6 2.500 4 4.500"/></svg>
<svg style="left:8.5px;top:70.5px" width="12" height="12" viewBox="0 0 12 12" ><path d="M6 0L8 2.500H6.700V5.300H9.500V4L12 6 9.500 8V6.700H6.700V9.500H8L6 12 4 9.500H5.300V6.700H2.500V8L0 6 2.500 4V5.300H5.300V2.500H4z" fill="#dedede"/></svg>
<svg style="left:21px;top:82px" width="3" height="3" viewBox="0 0 3 3"><path d="M3 0V3H0z" fill="#bdbdbd"/></svg>
<svg style="left:8.0px;top:90.5px" width="13" height="11" viewBox="0 0 13 11" ><ellipse cx="6.500" cy="5.500" rx="5.700" ry="4.700" fill="none" stroke="#c8c8c8" stroke-width="1.100" stroke-dasharray="2 1.300"/></svg>
<svg style="left:21px;top:101px" width="3" height="3" viewBox="0 0 3 3"><path d="M3 0V3H0z" fill="#bdbdbd"/></svg>
<div class="a" style="left:3px;top:107px;width:22px;height:16px;background:#383838"></div>
<svg style="left:7.5px;top:108.0px" width="14" height="13" viewBox="0 0 14 13" ><ellipse cx="7.500" cy="5" rx="5.700" ry="3.800" fill="none" stroke="#dedede" stroke-width="1.300" transform="rotate(-12 7.500 5)"/><path d="M3.300 7.500c-1.500 0.800-1.300 2.800 0.300 3.200 1 0.200 1.600-0.600 1-1.300M4.500 10.500l-0.500 2" fill="none" stroke="#dedede" stroke-width="1"/></svg>
<svg style="left:21px;top:120px" width="3" height="3" viewBox="0 0 3 3"><path d="M3 0V3H0z" fill="#bdbdbd"/></svg>
<svg style="left:8.0px;top:128.0px" width="13" height="13" viewBox="0 0 13 13" ><path d="M1 12L8 5" stroke="#dedede" stroke-width="2.400" stroke-linecap="round"/><path d="M9.500 0.500v3M8 2h3M11.500 5v2.400M10.300 6.200h2.400M6 1.500v1.600M5.200 2.300h1.600" stroke="#dedede" stroke-width="0.900"/></svg>
<svg style="left:21px;top:140px" width="3" height="3" viewBox="0 0 3 3"><path d="M3 0V3H0z" fill="#bdbdbd"/></svg>
<svg style="left:8.0px;top:148.0px" width="13" height="13" viewBox="0 0 13 13" ><path d="M3.500 0v9.500H13M0 3.500h9.500V13" fill="none" stroke="#dedede" stroke-width="1.500"/></svg>
<svg style="left:21px;top:160px" width="3" height="3" viewBox="0 0 3 3"><path d="M3 0V3H0z" fill="#bdbdbd"/></svg>
<svg style="left:8.0px;top:168.0px" width="13" height="11" viewBox="0 0 13 11" ><rect x="0.700" y="0.700" width="11.600" height="9.600" fill="none" stroke="#dedede" stroke-width="1.300"/><path d="M0.700 0.700L12.300 10.300M12.300 0.700L0.700 10.300" stroke="#dedede" stroke-width="1.100"/></svg>
<svg style="left:8.5px;top:205.0px" width="14" height="14" viewBox="0 0 14 14" ><path d="M13 1L7 7" stroke="#dedede" stroke-width="2" stroke-linecap="round"/><path d="M2 13C2.500 10 4 8.300 6 8.800 7.300 10 6 12.500 2 13z" fill="#dedede"/><path d="M0.500 2h3.500M0.500 4.300h3.500M0.500 6.600h3.500" stroke="#dedede" stroke-width="1"/></svg>
<svg style="left:7.5px;top:225.0px" width="14" height="14" viewBox="0 0 14 14" ><path d="M13 1L7 7" stroke="#dedede" stroke-width="2" stroke-linecap="round"/><path d="M2 13C2.500 10 4 8.300 6 8.800 7.300 10 6 12.500 2 13z" fill="#dedede"/></svg>
<svg style="left:21px;top:238px" width="3" height="3" viewBox="0 0 3 3"><path d="M3 0V3H0z" fill="#bdbdbd"/></svg>
<svg style="left:8.0px;top:245.0px" width="13" height="13" viewBox="0 0 13 13" ><circle cx="6.500" cy="3" r="2.600" fill="#dedede"/><path d="M5.300 4.500h2.400l0.600 3.500h-3.600z" fill="#dedede"/><rect x="1.500" y="8" width="10" height="2.400" rx="0.500" fill="#dedede"/><rect x="1" y="11.500" width="11" height="1.300" fill="#dedede"/></svg>
<svg style="left:21px;top:257px" width="3" height="3" viewBox="0 0 3 3"><path d="M3 0V3H0z" fill="#bdbdbd"/></svg>
<svg style="left:8.0px;top:265.0px" width="14" height="14" viewBox="0 0 14 14" ><path d="M13 1L7 7" stroke="#dedede" stroke-width="2" stroke-linecap="round"/><path d="M2 13C2.500 10 4 8.300 6 8.800 7.300 10 6 12.500 2 13z" fill="#dedede"/><path d="M1.500 5a4.500 4.500 0 0 1 7-3.500M1 1.500v3.500h3.300" fill="none" stroke="#dedede" stroke-width="1"/><path d="M9 13a5 5 0 0 0 4-5" fill="none" stroke="#dedede" stroke-width="0.900"/></svg>
<svg style="left:21px;top:277px" width="3" height="3" viewBox="0 0 3 3"><path d="M3 0V3H0z" fill="#bdbdbd"/></svg>
<svg style="left:7.5px;top:285.0px" width="14" height="12" viewBox="0 0 14 12" ><path d="M8 0.500l5 4-6 6.500H4L1 8.500z" fill="none" stroke="#dedede" stroke-width="1.200"/><path d="M8 0.500l5 4-3 3.300-5-4z" fill="#dedede"/><path d="M3 11.500h10" stroke="#dedede" stroke-width="0.900"/></svg>
<svg style="left:21px;top:297px" width="3" height="3" viewBox="0 0 3 3"><path d="M3 0V3H0z" fill="#bdbdbd"/></svg>
<svg style="left:8.0px;top:305.5px" width="13" height="10" viewBox="0 0 13 10" ><defs><linearGradient id="tg" x1="0" x2="1" y1="0" y2="1"><stop offset="0" stop-color="#333"/><stop offset="1" stop-color="#ddd"/></linearGradient></defs><rect x="0.700" y="0.700" width="11.600" height="8.600" fill="url(#tg)" stroke="#dedede" stroke-width="1.200"/></svg>
<svg style="left:21px;top:316px" width="3" height="3" viewBox="0 0 3 3"><path d="M3 0V3H0z" fill="#bdbdbd"/></svg>
<svg style="left:8.5px;top:323.5px" width="12" height="13" viewBox="0 0 12 13" ><path d="M2 5.500C2 2 4.500 0.500 7 0.800 10 1.200 11 3.500 10.300 5.500 9.700 7 8.300 7 8 8.500L4.500 12.500 2.800 11 5.500 7.500C3.500 8 2 7 2 5.500z" fill="#dedede"/></svg>
<svg style="left:21px;top:336px" width="3" height="3" viewBox="0 0 3 3"><path d="M3 0V3H0z" fill="#bdbdbd"/></svg>
<svg style="left:8.0px;top:343.0px" width="13" height="13" viewBox="0 0 13 13" ><circle cx="8.500" cy="4.500" r="3.800" fill="#dedede"/><path d="M6 7L1 12" stroke="#dedede" stroke-width="1.800" stroke-linecap="round"/></svg>
<svg style="left:21px;top:355px" width="3" height="3" viewBox="0 0 3 3"><path d="M3 0V3H0z" fill="#bdbdbd"/></svg>
<svg style="left:8.0px;top:362.5px" width="13" height="13" viewBox="0 0 13 13" ><path d="M1 12C1.500 8 3.500 5 7 3.500L10 6.500C8.500 10 5.500 11.700 1 12z" fill="none" stroke="#dedede" stroke-width="1.200"/><path d="M1 12L5.500 7.500" stroke="#dedede" stroke-width="0.900"/><path d="M8 2.500L9.700 0.800 12.500 3.600 10.800 5.300z" fill="#dedede"/></svg>
<svg style="left:21px;top:375px" width="3" height="3" viewBox="0 0 3 3"><path d="M3 0V3H0z" fill="#bdbdbd"/></svg>
<div class="t" style="left:10px;top:381px;font-size:15px;font-weight:bold;color:#dedede;font-family:'Liberation Serif',serif">T</div>
<svg style="left:21px;top:394px" width="3" height="3" viewBox="0 0 3 3"><path d="M3 0V3H0z" fill="#bdbdbd"/></svg>
<svg style="left:10.0px;top:401.5px" width="9" height="13" viewBox="0 0 9 13" ><path d="M0.500 0.500V11L3.300 8.500 5 12.300 6.800 11.500 5.200 7.800H8.800z" fill="#1e1e1e" stroke="#dedede" stroke-width="0.700"/></svg>
<svg style="left:21px;top:414px" width="3" height="3" viewBox="0 0 3 3"><path d="M3 0V3H0z" fill="#bdbdbd"/></svg>
<svg style="left:8.5px;top:421.5px" width="12" height="12" viewBox="0 0 12 12" ><path d="M0.800 11.200L11.200 0.800" stroke="#dedede" stroke-width="1.300"/></svg>
<svg style="left:21px;top:433px" width="3" height="3" viewBox="0 0 3 3"><path d="M3 0V3H0z" fill="#bdbdbd"/></svg>
<svg style="left:9.0px;top:440.5px" width="12" height="13" viewBox="0 0 12 13" ><path d="M3 6V2.300a0.900 0.900 0 0 1 1.800 0V5.500 1.300a0.900 0.900 0 0 1 1.800 0V5.500 1.800a0.900 0.900 0 0 1 1.800 0V6 3.300a0.900 0.900 0 0 1 1.800 0V9C10.200 11.500 8.500 12.800 6.500 12.800 4.500 12.800 3.500 11.500 2.500 10L0.500 7c0.800-1 1.800-0.500 2.500 0.500z" fill="#dedede"/></svg>
<svg style="left:21px;top:453px" width="3" height="3" viewBox="0 0 3 3"><path d="M3 0V3H0z" fill="#bdbdbd"/></svg>
<svg style="left:8.5px;top:460.0px" width="13" height="13" viewBox="0 0 13 13" ><circle cx="5" cy="5" r="3.900" fill="none" stroke="#dedede" stroke-width="1.400"/><path d="M8 8L12 12" stroke="#dedede" stroke-width="1.900" stroke-linecap="round"/></svg>
<div class="a" style="left:8.2px;top:485px;width:2.600px;height:2.600px;border-radius:50%;background:#dedede"></div>
<div class="a" style="left:13.7px;top:485px;width:2.600px;height:2.600px;border-radius:50%;background:#dedede"></div>
<div class="a" style="left:19.2px;top:485px;width:2.600px;height:2.600px;border-radius:50%;background:#dedede"></div>
<svg style="left:21px;top:490px" width="3" height="3" viewBox="0 0 3 3"><path d="M3 0V3H0z" fill="#bdbdbd"/></svg>
<div class="a" style="left:4.500px;top:500px;width:5px;height:5px;background:#111;border:0.600px solid #ddd"></div><div class="a" style="left:7.500px;top:503px;width:4px;height:4px;background:#eee"></div>
<svg style="left:16.500px;top:499px" width="8" height="8" viewBox="0 0 8 8" fill="none" stroke="#dedede" stroke-width="1"><path d="M1.500 1.500h3.500a1.500 1.500 0 0 1 1.500 1.500v3.500"/><path d="M3 0L1 1.500 3 3M5 5l1.500 2L8 5" stroke-width="0.900"/></svg>
<div class="a" style="left:11px;top:520px;width:14px;height:13px;background:#fff"></div>
<div class="a" style="left:4px;top:512px;width:13px;height:14px;background:#4b4b4b;border:1px solid #e8e8e8;box-sizing:border-box;outline:1px solid #4a4a4a"></div>
<svg style="left:8.0px;top:542.0px" width="13" height="10" viewBox="0 0 13 10" ><rect x="0.600" y="0.600" width="11.800" height="8.800" fill="none" stroke="#dedede" stroke-width="1.100"/><circle cx="6.500" cy="5" r="2.400" fill="none" stroke="#b0b0b0" stroke-width="0.900" stroke-dasharray="1 0.700"/></svg>
<svg style="left:8.0px;top:562.0px" width="13" height="10" viewBox="0 0 13 10" ><rect x="4.600" y="0.600" width="7.800" height="5.800" fill="#4b4b4b" stroke="#dedede" stroke-width="1.100"/><rect x="0.600" y="3.600" width="7.800" height="5.800" fill="#4b4b4b" stroke="#dedede" stroke-width="1.100"/></svg>
<svg style="left:21px;top:573px" width="3" height="3" viewBox="0 0 3 3"><path d="M3 0V3H0z" fill="#bdbdbd"/></svg>
<div class="a" style="left:226px;top:240px;width:1500px;height:637px;background:#9c9c9c"></div>
<svg style="left:226px;top:452px" width="521" height="281" viewBox="226 452 521 281">
<defs><linearGradient id="tube" x1="0" y1="0" x2="1" y2="0"><stop offset="0" stop-color="#cfe9dc"/><stop offset=".35" stop-color="#8fe0d8"/><stop offset=".6" stop-color="#35b9cf"/><stop offset="1" stop-color="#2a8fb0"/></linearGradient><linearGradient id="plat" x1="0" y1="0" x2="1" y2="0"><stop offset="0" stop-color="#c4d3de"/><stop offset=".5" stop-color="#e6eef2"/><stop offset="1" stop-color="#d2dde3"/></linearGradient><linearGradient id="body" x1="0" y1="0" x2="0" y2="1"><stop offset="0" stop-color="#b4c0c0"/><stop offset="1" stop-color="#7c8a96"/></linearGradient><filter id="bl" x="-5%" y="-5%" width="110%" height="110%"><feGaussianBlur stdDeviation="0.7"/></filter></defs>
<path d="M226 452H747V677C738 684 733 695 728 712L720 732H226Z" fill="#08090a"/>
<path d="M680 452H747V677C738 684 733 695 728 712L720 732H680Z" fill="#0e0f10"/>
<g filter="url(#bl)">
<path d="M290.0 662.0L420.0 658.0L515.0 657.0L595.0 659.5L547.5 672.0L420.0 672.0Z" fill="#b9c7cf"/>
<path d="M427.0 684.0L515.0 688.0L572.0 679.0L640.0 684.0L668.0 679.0L668.0 683.0L640.0 690.0L600.0 694.0L560.0 690.0L515.0 700.0L480.0 702.0L465.0 694.0Z" fill="#56626c"/>
<path d="M465.0 690.0L515.0 687.0L512.0 698.0L490.0 703.0L470.0 698.0Z" fill="#48535c"/>
<path d="M267.5 670.7L312.5 689.5L310.0 704.5L267.5 682.0Z" fill="#aebdca"/>
<path d="M312.5 689.5L380.0 684.5L377.5 694.5L310.0 704.5Z" fill="#b4c2cd"/>
<path d="M268.0 676.0L312.0 695.0L378.0 689.5L378.0 692.0L312.0 698.0L268.0 679.0Z" fill="#5b6fa8" opacity="0.7"/>
<path d="M267.5 670.7L290.0 662.0L420.0 672.0L425.0 679.5L380.0 684.5L312.5 689.5Z" fill="url(#plat)"/>
<path d="M290.0 668.0L340.0 666.0L400.0 675.0L330.0 683.0Z" fill="#f0f5f7" opacity="0.7"/>
<path d="M362.5 699.5L395.0 714.5L447.5 704.5L450.0 689.5L365.0 697.0Z" fill="#c9d2d8"/>
<path d="M362.5 696.0L378.0 690.0L450.0 686.0L450.0 690.5L365.0 698.0Z" fill="#e1e8ec"/>
<path d="M372.0 705.0L396.0 711.0L444.0 702.0L444.0 704.0L396.0 713.5L372.0 707.0Z" fill="#c9b54e" opacity="0.8"/>
<path d="M425.0 679.5L427.5 676.0L515.0 674.0L562.5 670.0L572.0 677.0L515.0 687.0L465.0 689.5Z" fill="#e9f0f3"/>
<path d="M440.0 681.0L500.0 678.0L500.0 685.0L465.0 688.0Z" fill="#f8fbfc" opacity="0.8"/>
<path d="M547.5 672.0L595.0 664.5L640.0 667.0L665.0 672.0L668.7 678.0L640.0 683.0L572.5 677.0Z" fill="#e3eaee"/>
<path d="M590.0 670.0L640.0 670.0L662.0 675.0L640.0 680.0L600.0 676.0Z" fill="#f4f8f9" opacity="0.8"/>
<path d="M572.5 677.0L640.0 683.0L668.7 678.0L668.7 681.0L640.0 687.0L572.5 680.5Z" fill="#aab6c0"/>
<path d="M256.0 634.5L280.0 632.0L297.5 634.0L330.0 646.0L330.0 660.0L272.5 661.0L260.0 650.0Z" fill="#98a6ae"/>
<path d="M258.0 636.0L290.0 634.0L326.0 647.0L326.0 650.0L288.0 640.0L260.0 641.0Z" fill="#cfd9dc"/>
<path d="M258.0 642.0L266.0 641.0L270.0 654.0L262.0 655.0Z" fill="#c8d2d6"/>
<rect x="300" y="648" width="30" height="10" fill="#5fd0cf"/>
<rect x="286" y="647" width="12" height="10" fill="#7f8d95"/>
<path d="M330.0 632.0L348.0 624.0L370.0 614.5L415.0 617.0L455.0 612.0L490.0 622.0L547.5 632.0L552.0 657.0L520.0 664.0L465.0 664.0L370.0 664.0L330.0 660.0Z" fill="url(#body)"/>
<path d="M338.0 632.0L372.0 620.0L410.0 620.0L410.0 632.0L340.0 640.0Z" fill="#bcc8c9"/>
<path d="M410.0 617.0L455.0 612.0L470.0 622.0L470.0 664.0L412.0 664.0Z" fill="#93a1a9"/>
<path d="M470.0 636.0L550.0 640.0L552.0 657.0L520.0 664.0L470.0 664.0Z" fill="#8794a0"/>
<path d="M475.0 640.0L546.0 643.0L546.0 650.0L475.0 648.0Z" fill="#c5cfd4"/>
<rect x="430" y="634" width="38" height="6" fill="#3a4a9a"/><rect x="430" y="652" width="27" height="5" fill="#3a4a9a"/><rect x="530" y="634.500" width="22" height="5" fill="#4656b0"/><rect x="527" y="649.500" width="21" height="5" fill="#4656b0"/>
<rect x="345" y="648" width="23" height="5" fill="#a32d35"/>
<rect x="375" y="649.500" width="12.500" height="10" rx="2" fill="#4cc5b5"/><rect x="392.500" y="649.500" width="12.500" height="10" rx="2" fill="#4cc5b5"/>
<rect x="332" y="646" width="12" height="12" fill="#d8e6ee"/>
<circle cx="461" cy="622" r="16" fill="#8c9a9f"/><circle cx="461" cy="624" r="11" fill="#56636b"/><path d="M450 632A12 12 0 0 1 472 626" fill="none" stroke="#f0f5f5" stroke-width="2"/>
<path d="M347.0 636.0L380.0 582.0L392.0 574.0L398.0 568.0L400.0 572.0L384.0 586.0L353.0 638.0Z" fill="#d9dfd9"/>
<path d="M351.0 636.0L383.0 586.0L386.0 588.0L355.0 637.0Z" fill="#c9a24c" opacity="0.7"/>
<path d="M353.3 610.3L356.7 582.0L376.7 560.3L366.7 585.3L360.0 602.0Z" fill="#3fc0d2"/>
<path d="M346.5 578.0L349.0 578.0L349.5 624.0L345.5 624.0Z" fill="#b9c4c6"/>
<path d="M380.0 607.0L398.0 590.0L408.0 566.0L416.0 556.0L452.5 556.0L454.0 594.5L456.0 617.0L415.0 619.5L380.0 622.0Z" fill="#a9b6b8"/>
<path d="M398.0 590.0L408.0 566.0L416.0 556.0L420.0 556.0L414.0 572.0L406.0 594.0Z" fill="#dfe5e2"/>
<path d="M436.0 588.0L456.0 588.0L458.0 618.0L436.0 618.0Z" fill="#bfcacb"/>
<path d="M399.0 552.0L416.7 540.0L417.0 596.0L398.0 598.0L394.0 585.0L396.7 568.7Z" fill="#b3c0bb"/>
<path d="M399.0 556.0L410.0 548.0L410.0 590.0L400.0 592.0Z" fill="#8d9b9e"/>
<path d="M450.0 566.0L456.0 566.0L457.0 596.0L450.0 596.0Z" fill="#c9d3d2"/>
<path d="M396.0 596.0L458.0 594.0L460.0 620.0L392.0 622.0Z" fill="#b7c3c1"/>
<path d="M420.0 598.0L452.0 597.0L452.0 604.0L420.0 605.0Z" fill="#7d8b90"/>
<rect x="417" y="540" width="33" height="52" fill="url(#tube)"/>
<rect x="430" y="546" width="17" height="26" fill="#37c2d6"/>
<rect x="415" y="532" width="38" height="10" fill="#b8c4c2"/>
<ellipse cx="402" cy="538" rx="8.500" ry="10" fill="#9eabad"/>
<path d="M393.3 507.0L400.0 500.3L420.0 483.7L446.7 488.7L471.7 502.0L472.5 513.7L463.3 522.0L453.3 532.0L415.0 532.0L400.0 525.3L393.3 518.7Z" fill="#9ba8ab"/>
<path d="M400.0 500.3L420.0 483.7L446.7 488.7L471.7 502.0L445.0 507.0L406.7 503.7Z" fill="#dde4e4"/>
<path d="M393.3 507.0L406.7 503.7L445.0 507.0L471.7 502.0L472.3 510.0L445.0 515.0L406.0 511.0L393.5 514.0Z" fill="#cfd6d4"/>
<path d="M408.0 505.0L445.0 508.5L471.0 503.5L471.3 506.5L445.0 511.5L408.0 508.0Z" fill="#d8a742" opacity="0.85"/>
<path d="M404.0 516.0L445.0 520.0L464.0 516.0L455.0 530.0L416.0 530.0Z" fill="#6f7d84"/>
<path d="M430.5 484.0L433.5 484.0L433.0 470.0L431.0 470.0Z" fill="#cdd6d8"/>
<path d="M425.0 463.0L443.0 471.0L442.5 473.5L424.5 465.5Z" fill="#d9e0e2"/>
<path d="M465.0 596.0L480.0 588.0L492.0 580.0L510.0 587.0L540.0 587.0L544.0 632.0L500.0 622.0L480.0 614.0L462.0 612.0Z" fill="#a4b1b5"/>
<path d="M465.0 596.0L480.0 588.0L492.0 580.0L496.0 582.0L484.0 592.0L470.0 600.0Z" fill="#dde3e0"/>
<path d="M488.0 566.0L510.0 560.0L510.0 604.0L488.0 604.0L484.0 590.0Z" fill="#aebbb8"/>
<path d="M492.0 572.0L504.0 568.0L504.0 598.0L493.0 599.0Z" fill="#8a989c"/>
<path d="M536.0 572.0L542.0 572.0L544.0 604.0L536.0 604.0Z" fill="#c3cecd"/>
<rect x="510" y="562" width="26" height="40" fill="url(#tube)"/>
<rect x="519" y="566" width="15" height="28" fill="#35bdd4"/>
<rect x="508" y="556" width="30" height="8" fill="#b4c0c0"/><rect x="506" y="598" width="34" height="8" fill="#b4c0c0"/>
<ellipse cx="492" cy="561" rx="8" ry="9" fill="#97a4a8"/>
<path d="M491.7 540.3L506.7 528.7L523.3 525.3L550.0 532.0L553.3 542.0L543.3 552.0L533.3 558.7L506.7 558.7L493.3 550.3Z" fill="#a0adb0"/>
<path d="M491.7 540.3L506.7 528.7L523.3 525.3L550.0 532.0L553.3 540.0L525.0 543.0L500.0 541.0Z" fill="#e0e6e6"/>
<path d="M494.0 541.5L525.0 544.0L553.0 540.5L553.3 543.5L525.0 547.5L494.0 545.0Z" fill="#d8a742" opacity="0.85"/>
<path d="M498.0 548.0L525.0 550.0L548.0 547.0L534.0 557.5L508.0 557.5Z" fill="#74828a"/>
<path d="M499.0 512.0L501.5 512.0L503.0 530.0L500.5 531.0Z" fill="#cdd6d8"/>
<path d="M518.0 515.0L527.0 519.0L526.0 521.0L521.0 520.0L521.5 526.0L519.5 526.0Z" fill="#d3dbdd"/>
<g stroke="#3e4a52" stroke-width="0.8" opacity=".55" fill="none"><path d="M404 516h58M410 524l44 1M398 511l8 12M466 508l-6 14M420 532v8M448 532v8M340 641h60M345 660h200M412 622v40M470 624v40M500 622l44 10M470 648h76M486 590l20 6M496 548l50 2M508 556v8M538 556v8M380 606l36 14M356 632l30-46"/></g>
<g stroke="#eef3f4" stroke-width="0.7" opacity=".6" fill="none"><path d="M270 672l42 18 68-5M365 698l30 14 52-10M428 680l40 8 48-3M574 678l66 6 28-5"/></g>
<g fill="#2c353c" opacity=".5"><rect x="384.5" y="628.5" width="3.6" height="2.0"/><rect x="343.9" y="642.9" width="4.7" height="2.8"/><rect x="344.9" y="629.0" width="2.2" height="3.0"/><rect x="348.4" y="633.1" width="4.1" height="4.4"/><rect x="378.6" y="638.4" width="5.1" height="4.8"/><rect x="395.9" y="635.9" width="6.9" height="1.7"/><rect x="361.4" y="653.8" width="2.7" height="1.9"/><rect x="384.1" y="638.1" width="2.9" height="3.5"/><rect x="344.0" y="633.1" width="4.7" height="1.7"/><rect x="360.9" y="645.3" width="5.4" height="3.0"/><rect x="393.8" y="649.4" width="4.3" height="2.5"/><rect x="376.1" y="654.4" width="3.2" height="3.5"/><rect x="405.0" y="630.0" width="5.6" height="2.5"/><rect x="350.3" y="641.6" width="4.1" height="4.1"/><rect x="454.7" y="641.9" width="2.2" height="3.8"/><rect x="447.9" y="643.4" width="6.4" height="2.6"/><rect x="456.6" y="656.8" width="4.9" height="3.1"/><rect x="415.3" y="646.8" width="4.4" height="3.8"/><rect x="455.4" y="630.5" width="5.2" height="5.0"/><rect x="413.2" y="637.6" width="3.9" height="3.8"/><rect x="415.3" y="650.8" width="2.8" height="1.9"/><rect x="433.6" y="654.5" width="2.6" height="2.4"/><rect x="442.5" y="654.4" width="2.4" height="3.1"/><rect x="426.5" y="635.6" width="6.1" height="4.5"/><rect x="463.9" y="625.6" width="3.8" height="4.6"/><rect x="424.9" y="639.2" width="2.9" height="2.3"/><rect x="412.2" y="636.6" width="4.9" height="2.4"/><rect x="463.6" y="646.6" width="3.8" height="3.5"/><rect x="448.1" y="622.1" width="4.6" height="3.7"/><rect x="457.0" y="650.1" width="6.5" height="4.2"/><rect x="477.7" y="645.7" width="4.0" height="2.9"/><rect x="485.8" y="631.2" width="2.3" height="1.7"/><rect x="470.0" y="630.9" width="3.7" height="1.7"/><rect x="471.9" y="653.3" width="2.5" height="2.8"/><rect x="488.4" y="637.1" width="5.1" height="2.0"/><rect x="533.0" y="657.8" width="3.8" height="1.9"/><rect x="476.3" y="629.1" width="4.3" height="3.2"/><rect x="531.6" y="631.1" width="3.7" height="2.4"/><rect x="510.1" y="630.3" width="2.1" height="4.8"/><rect x="508.7" y="657.7" width="4.7" height="1.6"/><rect x="488.7" y="637.0" width="6.3" height="3.9"/><rect x="510.0" y="649.2" width="2.8" height="4.2"/><rect x="530.3" y="657.2" width="3.6" height="2.3"/><rect x="528.7" y="648.0" width="6.3" height="4.3"/><rect x="496.6" y="626.9" width="3.1" height="3.3"/><rect x="489.7" y="647.8" width="2.1" height="2.5"/><rect x="536.7" y="656.6" width="6.8" height="3.1"/><rect x="485.7" y="633.1" width="6.8" height="2.8"/><rect x="426.3" y="615.6" width="3.0" height="2.2"/><rect x="426.3" y="612.7" width="6.2" height="3.2"/><rect x="447.1" y="611.8" width="2.4" height="3.8"/><rect x="394.2" y="612.4" width="5.8" height="3.2"/><rect x="450.3" y="603.8" width="3.7" height="4.3"/><rect x="432.7" y="599.3" width="4.0" height="4.8"/><rect x="446.6" y="613.7" width="2.6" height="2.0"/><rect x="451.9" y="608.9" width="2.7" height="4.4"/><rect x="391.2" y="596.3" width="3.8" height="3.4"/><rect x="417.4" y="614.9" width="6.9" height="3.8"/><rect x="525.7" y="596.6" width="4.2" height="4.6"/><rect x="485.0" y="609.6" width="3.3" height="2.5"/><rect x="477.3" y="620.1" width="3.3" height="3.0"/><rect x="509.0" y="619.7" width="3.8" height="3.1"/><rect x="503.1" y="606.6" width="4.1" height="4.7"/><rect x="498.5" y="596.3" width="4.6" height="1.6"/><rect x="480.4" y="605.0" width="2.0" height="4.3"/><rect x="490.3" y="606.9" width="5.6" height="3.4"/><rect x="475.3" y="607.8" width="4.8" height="4.2"/><rect x="522.6" y="607.0" width="3.2" height="2.5"/><rect x="531.1" y="604.1" width="4.8" height="4.2"/><rect x="503.3" y="612.7" width="5.1" height="3.3"/><rect x="292.5" y="655.4" width="4.3" height="3.4"/><rect x="320.9" y="641.0" width="5.5" height="4.6"/><rect x="315.1" y="638.6" width="4.8" height="4.8"/><rect x="266.7" y="641.0" width="2.6" height="3.0"/><rect x="313.5" y="654.1" width="2.4" height="3.8"/><rect x="305.1" y="638.9" width="2.8" height="4.0"/><rect x="275.5" y="654.2" width="6.4" height="4.9"/><rect x="325.4" y="653.3" width="4.0" height="3.2"/><rect x="432.6" y="517.1" width="2.8" height="3.0"/><rect x="446.4" y="512.3" width="3.0" height="2.6"/><rect x="399.2" y="517.0" width="4.8" height="3.0"/><rect x="402.2" y="526.5" width="5.1" height="3.3"/><rect x="404.7" y="515.5" width="5.9" height="4.9"/><rect x="416.3" y="513.8" width="2.2" height="4.2"/><rect x="535.2" y="547.6" width="4.1" height="4.7"/><rect x="524.1" y="550.4" width="2.7" height="4.7"/><rect x="530.1" y="550.0" width="2.4" height="1.7"/><rect x="527.5" y="551.0" width="2.4" height="4.8"/></g>
<g fill="#eef4f5" opacity=".55"><rect x="344.6" y="655.1" width="2.3" height="2.3"/><rect x="377.7" y="658.0" width="3.8" height="1.5"/><rect x="376.3" y="634.3" width="3.1" height="1.2"/><rect x="343.5" y="633.0" width="2.4" height="1.2"/><rect x="392.2" y="636.0" width="3.2" height="1.5"/><rect x="363.6" y="626.6" width="4.0" height="1.3"/><rect x="390.6" y="645.3" width="3.0" height="1.0"/><rect x="463.6" y="624.3" width="2.8" height="1.7"/><rect x="438.1" y="653.7" width="5.3" height="1.6"/><rect x="449.4" y="659.5" width="3.6" height="1.8"/><rect x="450.6" y="645.3" width="3.4" height="2.2"/><rect x="415.0" y="625.3" width="3.6" height="1.5"/><rect x="426.2" y="626.5" width="2.3" height="2.1"/><rect x="460.5" y="646.6" width="2.3" height="2.3"/><rect x="428.1" y="638.7" width="3.1" height="1.4"/><rect x="489.8" y="657.1" width="2.6" height="1.7"/><rect x="487.6" y="657.1" width="5.9" height="1.8"/><rect x="470.1" y="638.4" width="3.2" height="1.5"/><rect x="484.9" y="642.3" width="3.9" height="1.8"/><rect x="476.8" y="639.0" width="2.0" height="1.4"/><rect x="493.1" y="633.7" width="2.2" height="1.0"/><rect x="525.3" y="647.2" width="4.3" height="1.8"/><rect x="498.5" y="636.3" width="4.9" height="2.3"/><rect x="522.2" y="647.1" width="5.9" height="1.2"/><rect x="446.1" y="609.6" width="2.2" height="2.3"/><rect x="391.6" y="607.4" width="4.9" height="2.2"/><rect x="438.3" y="614.0" width="4.0" height="2.3"/><rect x="429.6" y="611.0" width="4.3" height="2.3"/><rect x="391.5" y="604.3" width="2.9" height="1.0"/><rect x="508.0" y="611.2" width="2.4" height="2.3"/><rect x="502.0" y="590.1" width="4.5" height="2.0"/><rect x="502.6" y="608.1" width="5.2" height="2.1"/><rect x="519.1" y="598.8" width="4.6" height="1.1"/><rect x="520.3" y="597.1" width="2.3" height="1.4"/><rect x="502.1" y="602.8" width="5.0" height="2.5"/><rect x="311.2" y="649.6" width="3.9" height="2.0"/><rect x="271.4" y="641.8" width="4.6" height="1.1"/><rect x="297.8" y="636.3" width="5.0" height="1.5"/><rect x="306.2" y="651.6" width="2.2" height="1.4"/></g>
<path d="M585 618L607 621.500" stroke="#4a4f52" stroke-width="1.200"/>
</g>
</svg>
<svg style="left:0;top:0" width="1920" height="1080" viewBox="0 0 1920 1080" fill="none" stroke-linecap="round" stroke-linejoin="round">
<path d="M1270.7 275.7C1273.9 274.8 1283.3 272.1 1289.9 270.6C1296.5 269.1 1305.7 267.4 1310.2 266.6C1314.8 265.8 1316.0 265.8 1317.2 265.6" stroke="#6e6e6e" stroke-width="0.74"/>
<path d="M1270.0 275.5C1270.0 277.4 1269.1 283.6 1270.3 286.6C1271.4 289.5 1275.7 292.3 1276.7 293.4" stroke="#6e6e6e" stroke-width="0.74"/>
<path d="M1275.8 293.0C1277.0 292.4 1278.3 290.4 1282.9 289.5C1287.6 288.6 1300.0 287.9 1303.4 287.5" stroke="#6e6e6e" stroke-width="0.74"/>
<path d="M1312.7 266.5C1312.3 269.1 1310.6 277.7 1310.0 281.9C1309.4 286.1 1308.7 290.1 1308.9 291.8C1309.1 293.4 1310.5 293.4 1311.3 291.7C1312.1 289.9 1312.8 285.2 1313.7 281.3C1314.6 277.3 1316.2 270.1 1316.7 267.9" stroke="#6e6e6e" stroke-width="0.74"/>
<path d="M907.8 411.7C911.4 410.6 921.8 407.0 929.5 404.8C937.1 402.5 948.8 399.5 953.8 398.4C958.7 397.2 959.0 397.2 959.3 397.8C959.6 398.3 956.3 400.3 955.6 401.7C954.9 403.1 955.2 405.5 955.1 406.2" stroke="#6e6e6e" stroke-width="0.74"/>
<path d="M908.1 414.9C908.2 416.8 907.1 423.5 908.4 426.5C909.8 429.4 914.9 431.6 916.2 432.6" stroke="#6e6e6e" stroke-width="0.74"/>
<path d="M913.2 435.4C914.3 434.8 915.1 433.0 919.4 432.0C923.7 431.0 935.7 429.9 939.0 429.5" stroke="#6e6e6e" stroke-width="0.74"/>
<path d="M949.4 404.6C948.8 407.0 946.8 415.2 946.1 419.4C945.3 423.5 944.7 427.9 945.0 429.4C945.4 431.0 947.3 430.6 948.1 428.8C948.9 427.1 949.2 422.9 950.0 419.0C950.7 415.2 952.3 408.1 952.8 405.9" stroke="#6e6e6e" stroke-width="0.74"/>
<path d="M875.3 438.6C880.6 435.7 892.8 426.9 907.1 421.2C921.4 415.5 945.3 408.3 960.9 404.4C976.4 400.5 987.2 399.4 1000.5 397.9C1013.7 396.4 1033.7 395.9 1040.3 395.5" stroke="#6e6e6e" stroke-width="0.74"/>
<path d="M877.4 438.5C877.5 445.2 877.2 464.6 878.3 478.8C879.3 493.0 882.8 516.0 883.7 523.4" stroke="#6e6e6e" stroke-width="0.74"/>
<path d="M1168.6 446.1C1168.4 450.0 1168.9 460.2 1167.3 469.1C1165.8 477.9 1162.4 488.5 1159.4 499.3C1156.4 510.1 1151.0 528.2 1149.3 534.0" stroke="#6e6e6e" stroke-width="0.74"/>
<path d="M874.1 448.1 L909.0 431.8" stroke="#6e6e6e" stroke-width="0.74"/>
<path d="M1081.3 411.5C1085.9 413.6 1101.2 419.9 1109.1 424.1C1116.9 428.3 1125.1 434.4 1128.3 436.5" stroke="#6e6e6e" stroke-width="0.74"/>
<path d="M1111.5 436.1C1110.4 442.5 1108.6 462.0 1105.0 474.8C1101.3 487.7 1094.1 502.8 1089.7 513.4C1085.3 523.9 1080.4 534.0 1078.6 538.2" stroke="#6e6e6e" stroke-width="0.74"/>
<path d="M883.7 523.6C886.4 526.1 890.7 538.0 900.0 538.5C909.3 539.1 921.4 531.3 939.6 526.7C957.8 522.0 996.9 512.3 1009.2 510.6C1021.5 508.9 1020.2 514.4 1013.2 516.3C1006.3 518.3 975.3 521.3 967.7 522.3" stroke="#6e6e6e" stroke-width="0.74"/>
<path d="M966.5 505.2C969.9 504.8 982.9 501.9 986.5 502.8C990.1 503.8 991.0 509.1 988.4 510.9C985.7 512.6 973.8 512.9 970.8 513.3" stroke="#6e6e6e" stroke-width="0.74"/>
<path d="M1034.1 504.7 L1010.8 507.4" stroke="#6e6e6e" stroke-width="0.74"/>
<path d="M1093.8 535.2C1098.9 536.1 1118.2 538.7 1124.5 540.5C1130.9 542.3 1135.4 545.9 1132.0 546.2C1128.6 546.5 1110.6 544.2 1104.3 542.4C1097.9 540.5 1095.8 536.4 1094.1 535.2" stroke="#6e6e6e" stroke-width="0.74"/>
<path d="M922.6 571.4 L1022.2 557.3" stroke="#6e6e6e" stroke-width="0.74"/>
<path d="M931.0 558.6 L943.0 556.5" stroke="#6e6e6e" stroke-width="0.74"/>
<path d="M953.2 553.1 L968.7 552.0" stroke="#6e6e6e" stroke-width="0.74"/>
<path d="M1025.6 544.5 L1037.2 551.1" stroke="#6e6e6e" stroke-width="0.74"/>
<path d="M1026.3 558.5C1026.0 568.5 1026.2 589.4 1024.8 618.4C1023.3 647.4 1018.9 713.4 1017.7 732.4" stroke="#6e6e6e" stroke-width="0.74"/>
<path d="M1022.0 618.5C1025.3 617.7 1033.7 612.5 1042.0 613.6C1050.2 614.6 1066.6 622.8 1071.5 624.6" stroke="#6e6e6e" stroke-width="0.74"/>
<path d="M1086.4 582.2C1092.7 581.3 1107.2 577.6 1123.8 577.2C1140.3 576.7 1164.0 580.0 1185.9 579.5C1207.8 579.1 1241.8 575.3 1255.3 574.4C1268.7 573.5 1264.7 574.0 1266.6 573.9" stroke="#6e6e6e" stroke-width="0.74"/>
<path d="M1121.2 579.7C1118.6 583.0 1109.4 592.1 1106.0 599.9C1102.5 607.6 1100.7 618.2 1100.5 626.0C1100.2 633.8 1103.8 643.2 1104.4 646.6" stroke="#6e6e6e" stroke-width="0.74"/>
<path d="M1109.6 635.8C1117.8 635.5 1142.0 634.0 1159.1 633.8C1176.3 633.6 1203.6 634.4 1212.5 634.6" stroke="#6e6e6e" stroke-width="0.74"/>
<path d="M1080.7 635.5 L1093.8 641.3" stroke="#6e6e6e" stroke-width="0.74"/>
<path d="M1218.9 618.0C1224.3 615.9 1240.7 609.4 1251.3 605.1C1261.9 600.7 1277.5 594.0 1282.8 591.8" stroke="#6e6e6e" stroke-width="0.74"/>
<path d="M1211.2 634.3L1223.0 645.4L1216.7 674.7L1204.1 681.2L1198.0 704.7L1194.1 728.4" stroke="#6e6e6e" stroke-width="0.74"/>
<path d="M1208.3 648.5C1205.6 651.2 1195.9 656.6 1192.4 664.8C1188.9 673.1 1189.1 690.1 1187.1 698.1C1185.2 706.0 1181.6 710.0 1180.5 712.4" stroke="#6e6e6e" stroke-width="0.74"/>
<path d="M1185.4 646.8C1187.1 646.6 1192.2 644.8 1195.2 645.1C1198.3 645.4 1202.2 648.2 1203.6 648.8" stroke="#6e6e6e" stroke-width="0.74"/>
<path d="M1213.0 695.6C1212.3 697.9 1210.5 705.1 1209.2 709.9C1207.9 714.6 1205.6 721.7 1204.9 724.0" stroke="#6e6e6e" stroke-width="0.74"/>
<path d="M1246.4 684.7C1247.2 683.4 1247.3 678.5 1250.8 676.8C1254.3 675.2 1264.4 671.3 1267.5 674.7C1270.6 678.2 1269.0 693.9 1269.2 697.7" stroke="#6e6e6e" stroke-width="0.74"/>
<path d="M1166.6 739.0C1167.7 737.5 1170.7 730.0 1173.1 729.6C1175.4 729.2 1179.4 735.6 1180.6 736.8" stroke="#6e6e6e" stroke-width="0.74"/>
<path d="M1049.5 766.1 L1064.2 756.5" stroke="#6e6e6e" stroke-width="0.74"/>
<path d="M1083.8 769.5C1092.3 767.7 1101.8 760.7 1134.8 759.0C1167.9 757.2 1257.7 758.8 1282.3 758.8" stroke="#6e6e6e" stroke-width="0.74"/>
<path d="M1222.8 300.7C1230.2 298.1 1250.8 290.7 1267.3 284.8C1283.8 279.0 1304.5 270.1 1321.6 265.7C1338.7 261.2 1356.3 259.9 1370.0 258.1C1383.7 256.3 1398.2 255.3 1403.8 254.7" stroke="#6e6e6e" stroke-width="0.74"/>
<path d="M1400.0 255.0C1403.4 256.3 1413.3 259.5 1420.3 262.8C1427.3 266.2 1430.7 269.6 1441.8 274.9C1453.0 280.2 1475.5 290.3 1487.2 294.4C1499.0 298.6 1505.6 298.0 1512.5 299.9C1519.4 301.9 1526.0 305.1 1528.7 306.2" stroke="#6e6e6e" stroke-width="0.74"/>
<path d="M1246.6 395.1C1251.3 396.4 1261.1 404.8 1274.6 402.9C1288.1 401.0 1310.4 388.0 1327.6 383.4C1344.8 378.8 1370.4 377.9 1377.9 375.3C1385.4 372.7 1373.5 369.0 1372.6 367.8" stroke="#6e6e6e" stroke-width="0.74"/>
<path d="M1275.0 290.6C1275.6 295.9 1276.2 311.1 1278.5 322.2C1280.7 333.2 1284.9 346.6 1288.5 357.0C1292.1 367.4 1298.2 380.0 1300.2 384.7" stroke="#6e6e6e" stroke-width="0.74"/>
<path d="M1483.7 295.3 L1489.0 307.1" stroke="#6e6e6e" stroke-width="0.74"/>
<path d="M1276.1 384.7C1278.1 383.5 1284.7 377.8 1288.5 377.5C1292.3 377.3 1299.8 381.5 1298.9 383.2C1298.0 384.9 1286.9 387.8 1283.2 388.0C1279.5 388.2 1277.6 385.1 1276.5 384.5" stroke="#6e6e6e" stroke-width="0.74"/>
<path d="M1330.2 370.2C1332.8 369.7 1342.9 366.5 1345.8 367.3C1348.7 368.0 1350.0 372.9 1347.6 374.7C1345.2 376.5 1334.3 377.3 1331.6 377.8" stroke="#6e6e6e" stroke-width="0.74"/>
<path d="M1326.7 383.1C1334.2 381.4 1363.2 373.9 1371.5 373.1C1379.7 372.2 1383.0 375.5 1376.1 378.0C1369.2 380.6 1337.8 386.8 1330.1 388.5" stroke="#6e6e6e" stroke-width="0.74"/>
<path d="M1396.3 382.8C1399.2 383.1 1408.2 382.7 1413.6 384.5C1419.1 386.3 1430.2 392.4 1429.0 393.4C1427.9 394.4 1412.0 392.1 1406.6 390.3C1401.3 388.5 1398.6 383.8 1396.9 382.5" stroke="#6e6e6e" stroke-width="0.74"/>
<path d="M1460.4 399.2C1464.1 399.9 1477.3 402.1 1482.7 403.8C1488.2 405.5 1495.0 408.9 1492.9 409.4C1490.9 409.8 1476.1 408.1 1470.5 406.4C1465.0 404.6 1461.6 400.1 1459.8 398.9" stroke="#6e6e6e" stroke-width="0.74"/>
<path d="M1354.8 409.9 L1366.6 409.4" stroke="#6e6e6e" stroke-width="0.74"/>
<path d="M1284.7 430.0 L1286.4 508.8" stroke="#6e6e6e" stroke-width="0.74"/>
<path d="M1384.6 420.1 L1383.8 479.0" stroke="#6e6e6e" stroke-width="0.74"/>
<path d="M1390.7 488.7C1398.6 489.8 1419.7 492.0 1438.2 495.4C1456.6 498.8 1490.8 506.7 1501.3 509.0" stroke="#6e6e6e" stroke-width="0.74"/>
<path d="M1393.8 496.8C1401.4 498.1 1421.5 500.5 1439.0 504.3C1456.4 508.2 1488.6 517.3 1498.6 519.9" stroke="#6e6e6e" stroke-width="0.74"/>
<path d="M1490.6 532.2 L1491.2 707.5" stroke="#6e6e6e" stroke-width="0.74"/>
<path d="M1365.0 560.7C1361.4 564.1 1351.0 574.5 1343.3 581.0C1335.6 587.6 1326.9 595.4 1318.9 600.1C1310.9 604.8 1299.4 607.8 1295.5 609.3" stroke="#6e6e6e" stroke-width="0.74"/>
<path d="M1179.0 581.6C1191.7 580.8 1239.9 577.7 1255.2 577.0C1270.6 576.4 1268.6 577.4 1271.2 577.5" stroke="#6e6e6e" stroke-width="0.74"/>
<path d="M1275.5 718.1 L1379.9 717.4" stroke="#6e6e6e" stroke-width="0.74"/>
<path d="M1381.3 718.1C1392.9 718.2 1429.0 718.8 1450.9 719.0C1472.8 719.1 1502.4 719.0 1512.6 719.0" stroke="#6e6e6e" stroke-width="0.74"/>
<path d="M1300.4 670.3L1305.6 665.2L1326.2 663.4L1330.4 655.3" stroke="#6e6e6e" stroke-width="0.74"/>
<path d="M1361.0 650.3C1362.2 652.5 1364.7 659.9 1368.0 663.5C1371.2 667.2 1377.3 670.6 1380.4 672.0C1383.5 673.4 1384.0 673.6 1386.5 671.8C1389.0 670.0 1394.0 663.0 1395.4 661.2" stroke="#6e6e6e" stroke-width="0.74"/>
<path d="M1491.8 538.9C1499.5 539.9 1530.8 542.2 1538.2 545.4C1545.6 548.6 1543.9 556.7 1536.2 558.1C1528.4 559.4 1499.1 554.2 1491.7 553.4" stroke="#6e6e6e" stroke-width="0.74"/>
<path d="M1495.0 565.5 L1494.9 651.3" stroke="#6e6e6e" stroke-width="0.74"/>
<path d="M1474.4 626.1C1478.5 626.5 1495.1 625.9 1499.2 628.5C1503.3 631.0 1499.0 639.2 1499.0 641.3" stroke="#6e6e6e" stroke-width="0.74"/>
<path d="M1494.2 655.7 L1524.6 657.6" stroke="#6e6e6e" stroke-width="0.74"/>
<path d="M1526.9 683.3C1536.6 684.6 1574.4 687.9 1585.1 691.1C1595.7 694.4 1578.3 697.8 1590.6 702.7C1602.9 707.6 1643.2 716.5 1658.7 720.4C1674.3 724.3 1679.5 725.1 1683.7 726.0" stroke="#6e6e6e" stroke-width="0.74"/>
<path d="M1530.9 706.7C1540.8 708.1 1579.9 712.0 1590.1 715.1C1600.3 718.1 1577.1 723.4 1592.0 725.1C1606.9 726.7 1664.9 725.0 1679.5 725.0" stroke="#6e6e6e" stroke-width="0.74"/>
<path d="M1682.9 725.9 L1626.3 768.8" stroke="#6e6e6e" stroke-width="0.74"/>
<path d="M1640.4 768.9 L1690.2 771.2" stroke="#6e6e6e" stroke-width="0.74"/>
<path d="M1649.9 788.4 L1688.6 794.8" stroke="#6e6e6e" stroke-width="0.74"/>
<path d="M1239.4 755.1 L1273.8 719.2" stroke="#6e6e6e" stroke-width="0.74"/>
<path d="M1356.1 760.6 L1381.6 721.1" stroke="#6e6e6e" stroke-width="0.74"/>
<path d="M1244.4 756.5 L1296.1 756.9" stroke="#6e6e6e" stroke-width="0.74"/>
<path d="M921.0 338.0C915.8 340.0 900.2 343.0 890.0 350.0C879.8 357.0 868.7 368.3 860.0 380.0C851.3 391.7 843.7 406.7 838.0 420.0C832.3 433.3 827.3 450.0 826.0 460.0C824.7 470.0 826.3 475.3 830.0 480.0C833.7 484.7 841.7 487.3 848.0 488.0C854.3 488.7 859.3 487.7 868.0 484.0C876.7 480.3 887.2 471.8 900.0 466.0C912.8 460.2 930.8 452.8 945.0 449.0C959.2 445.2 970.0 443.3 985.0 443.0C1000.0 442.7 1015.8 443.8 1035.0 447.0C1054.2 450.2 1078.3 455.3 1100.0 462.0C1121.7 468.7 1146.7 481.3 1165.0 487.0C1183.3 492.7 1197.0 495.8 1210.0 496.0C1223.0 496.2 1237.5 489.3 1243.0 488.0" stroke="#404040" stroke-width="1.22"/>
<path d="M1270.0 270.0C1273.7 268.8 1284.5 265.2 1292.0 263.0C1299.5 260.8 1310.2 257.8 1315.0 256.7C1319.8 255.6 1320.4 255.8 1320.8 256.3C1321.2 256.9 1318.2 258.6 1317.5 260.0C1316.8 261.4 1316.8 264.2 1316.7 265.0" stroke="#444" stroke-width="1.22"/>
<path d="M1271.7 275.8C1274.8 274.9 1283.5 272.2 1290.0 270.5C1296.5 268.8 1306.2 266.7 1310.8 265.8C1315.4 264.9 1316.4 265.1 1317.5 265.0" stroke="#444" stroke-width="1.22"/>
<path d="M1272.0 279.0C1275.3 278.0 1285.5 274.8 1292.0 273.0C1298.5 271.2 1307.8 269.2 1311.0 268.5" stroke="#585858" stroke-width="0.94"/>
<path d="M1269.2 276.7C1269.3 278.5 1268.3 284.6 1269.6 287.5C1270.8 290.4 1275.5 293.1 1276.7 294.2" stroke="#444" stroke-width="1.35"/>
<path d="M1274.2 275.8 L1274.6 291.7" stroke="#444" stroke-width="1.08"/>
<path d="M1277.0 283.3 L1277.5 294.2" stroke="#585858" stroke-width="0.94"/>
<path d="M1276.7 294.2C1277.8 293.6 1278.9 291.6 1283.3 290.8C1287.7 290.0 1300.0 289.5 1303.3 289.2" stroke="#444" stroke-width="1.22"/>
<path d="M1290.0 289.0 L1302.5 288.6" stroke="#3a3a3a" stroke-width="2.70"/>
<ellipse cx="1293.3" cy="293.2" rx="1.7" ry="2" stroke="#444" stroke-width="1.2"/>
<path d="M1313.3 265.8C1312.8 268.2 1311.2 276.0 1310.5 280.0C1309.8 284.0 1309.0 288.3 1309.2 290.0C1309.4 291.7 1310.9 291.7 1311.7 290.0C1312.5 288.3 1313.2 283.9 1314.0 280.0C1314.8 276.1 1316.2 268.9 1316.7 266.7" stroke="#3a3a3a" stroke-width="2.16"/>
<path d="M1306.7 272.5 L1306.7 291.7" stroke="#6a6a6a" stroke-width="0.81"/>
<path d="M1280.0 296.7 L1280.8 301.7" stroke="#6a6a6a" stroke-width="0.81"/>
<path d="M907.5 410.0C911.2 408.8 922.0 405.2 929.5 403.0C937.0 400.8 947.7 397.8 952.5 396.7C957.3 395.6 957.9 395.8 958.3 396.3C958.7 396.9 955.7 398.6 955.0 400.0C954.3 401.4 954.3 404.2 954.2 405.0" stroke="#444" stroke-width="1.22"/>
<path d="M909.2 415.8C912.2 414.9 921.0 412.2 927.5 410.5C934.0 408.8 943.7 406.7 948.3 405.8C952.9 404.9 953.9 405.1 955.0 405.0" stroke="#444" stroke-width="1.22"/>
<path d="M909.5 419.0C912.8 418.0 923.0 414.8 929.5 413.0C936.0 411.2 945.3 409.2 948.5 408.5" stroke="#585858" stroke-width="0.94"/>
<path d="M906.7 416.7C906.8 418.5 905.8 424.6 907.1 427.5C908.3 430.4 913.0 433.1 914.2 434.2" stroke="#444" stroke-width="1.35"/>
<path d="M911.7 415.8 L912.1 431.7" stroke="#444" stroke-width="1.08"/>
<path d="M914.5 423.3 L915.0 434.2" stroke="#585858" stroke-width="0.94"/>
<path d="M914.2 434.2C915.3 433.6 916.4 431.6 920.8 430.8C925.2 430.0 937.5 429.5 940.8 429.2" stroke="#444" stroke-width="1.22"/>
<path d="M927.5 429.0 L940.0 428.6" stroke="#3a3a3a" stroke-width="2.70"/>
<ellipse cx="930.8" cy="433.2" rx="1.7" ry="2" stroke="#444" stroke-width="1.2"/>
<path d="M950.8 405.8C950.3 408.2 948.7 416.0 948.0 420.0C947.3 424.0 946.5 428.3 946.7 430.0C946.9 431.7 948.4 431.7 949.2 430.0C950.0 428.3 950.7 423.9 951.5 420.0C952.3 416.1 953.8 408.9 954.2 406.7" stroke="#3a3a3a" stroke-width="2.16"/>
<path d="M944.2 412.5 L944.2 431.7" stroke="#6a6a6a" stroke-width="0.81"/>
<path d="M917.5 436.7 L918.3 441.7" stroke="#6a6a6a" stroke-width="0.81"/>
<path d="M1291.7 296.7C1292.0 300.0 1291.9 309.5 1293.3 316.7C1294.7 323.9 1297.2 331.9 1300.0 340.0C1302.8 348.1 1308.3 360.8 1310.0 365.0" stroke="#585858" stroke-width="0.94"/>
<path d="M1306.7 291.7C1307.0 294.5 1306.5 300.5 1308.3 308.3C1310.1 316.1 1316.0 333.3 1317.5 338.3" stroke="#585858" stroke-width="0.94"/>
<path d="M875.0 437.0C880.3 434.2 892.8 425.7 907.0 420.0C921.2 414.3 944.5 406.8 960.0 403.0C975.5 399.2 986.7 398.5 1000.0 397.0C1013.3 395.5 1033.3 394.5 1040.0 394.0" stroke="#3a3a3a" stroke-width="1.49"/>
<path d="M1040.0 394.0C1043.7 395.8 1054.5 400.7 1062.0 405.0C1069.5 409.3 1077.0 415.8 1085.0 420.0C1093.0 424.2 1100.8 426.7 1110.0 430.0C1119.2 433.3 1130.7 437.2 1140.0 440.0C1149.3 442.8 1161.7 445.8 1166.0 447.0" stroke="#3a3a3a" stroke-width="1.49"/>
<path d="M877.0 440.0C877.2 446.7 877.0 465.8 878.0 480.0C879.0 494.2 882.2 517.5 883.0 525.0" stroke="#444" stroke-width="1.35"/>
<path d="M1042.0 388.0C1041.3 396.7 1039.3 420.8 1038.0 440.0C1036.7 459.2 1034.7 492.5 1034.0 503.0" stroke="#444" stroke-width="1.35"/>
<path d="M1167.0 447.0C1166.8 450.8 1167.5 461.2 1166.0 470.0C1164.5 478.8 1161.0 489.2 1158.0 500.0C1155.0 510.8 1149.7 529.2 1148.0 535.0" stroke="#444" stroke-width="1.35"/>
<path d="M1170.0 450.0C1168.8 458.3 1166.3 484.2 1163.0 500.0C1159.7 515.8 1152.2 537.5 1150.0 545.0" stroke="#6a6a6a" stroke-width="0.94"/>
<path d="M876.0 448.0 L910.0 432.0" stroke="#444" stroke-width="1.22"/>
<path d="M880.0 440.0 L905.0 433.0" stroke="#444" stroke-width="0.94"/>
<path d="M913.0 432.0C914.2 438.3 916.8 457.0 920.0 470.0C923.2 483.0 928.7 500.5 932.0 510.0C935.3 519.5 938.7 524.2 940.0 527.0" stroke="#444" stroke-width="1.35"/>
<path d="M925.0 430.0C925.8 435.8 927.2 453.3 930.0 465.0C932.8 476.7 938.3 491.2 942.0 500.0C945.7 508.8 950.3 515.0 952.0 518.0" stroke="#444" stroke-width="1.22"/>
<path d="M945.0 428.0C945.5 432.5 946.0 446.3 948.0 455.0C950.0 463.7 955.5 475.8 957.0 480.0" stroke="#6a6a6a" stroke-width="0.81"/>
<path d="M1082.0 412.0C1086.7 414.2 1102.0 420.8 1110.0 425.0C1118.0 429.2 1126.7 435.0 1130.0 437.0" stroke="#444" stroke-width="1.22"/>
<path d="M1085.0 408.0 L1125.0 428.0" stroke="#585858" stroke-width="0.94"/>
<path d="M1100.0 432.0C1099.2 438.3 1098.3 457.0 1095.0 470.0C1091.7 483.0 1083.8 500.0 1080.0 510.0C1076.2 520.0 1073.3 526.7 1072.0 530.0" stroke="#585858" stroke-width="1.08"/>
<path d="M1112.0 436.0C1110.8 442.5 1108.7 461.8 1105.0 475.0C1101.3 488.2 1094.5 504.2 1090.0 515.0C1085.5 525.8 1080.0 535.8 1078.0 540.0" stroke="#444" stroke-width="1.22"/>
<path d="M1120.0 440.0C1118.7 446.7 1115.7 466.7 1112.0 480.0C1108.3 493.3 1102.5 509.2 1098.0 520.0C1093.5 530.8 1087.2 540.8 1085.0 545.0" stroke="#6a6a6a" stroke-width="0.94"/>
<path d="M1125.0 437.0 L1128.0 447.0" stroke="#444" stroke-width="1.62"/>
<path d="M883.0 525.0C885.8 527.5 890.5 539.5 900.0 540.0C909.5 540.5 921.7 532.7 940.0 528.0C958.3 523.3 997.5 513.8 1010.0 512.0C1022.5 510.2 1022.0 515.2 1015.0 517.0C1008.0 518.8 975.8 522.0 968.0 523.0" stroke="#444" stroke-width="1.22"/>
<path d="M915.0 520.0C916.7 519.2 921.7 514.7 925.0 515.0C928.3 515.3 935.8 520.5 935.0 522.0C934.2 523.5 923.3 524.3 920.0 524.0C916.7 523.7 915.8 520.7 915.0 520.0" stroke="#444" stroke-width="1.62"/>
<path d="M965.0 506.0C968.3 505.7 981.3 503.0 985.0 504.0C988.7 505.0 989.5 510.3 987.0 512.0C984.5 513.7 972.8 513.7 970.0 514.0" stroke="#444" stroke-width="1.22"/>
<path d="M1030.0 506.0C1031.7 507.7 1030.8 512.5 1040.0 516.0C1049.2 519.5 1067.0 523.0 1085.0 527.0C1103.0 531.0 1137.5 537.8 1148.0 540.0" stroke="#444" stroke-width="1.35"/>
<path d="M1035.0 503.0 L1012.0 506.0" stroke="#444" stroke-width="1.22"/>
<path d="M1040.0 520.0C1043.3 520.7 1055.0 522.2 1060.0 524.0C1065.0 525.8 1072.0 530.7 1070.0 531.0C1068.0 531.3 1053.0 527.8 1048.0 526.0C1043.0 524.2 1041.3 521.0 1040.0 520.0" stroke="#444" stroke-width="1.76"/>
<path d="M1095.0 536.0C1100.0 536.8 1118.7 539.2 1125.0 541.0C1131.3 542.8 1136.3 546.7 1133.0 547.0C1129.7 547.3 1111.3 544.8 1105.0 543.0C1098.7 541.2 1096.7 537.2 1095.0 536.0" stroke="#444" stroke-width="1.76"/>
<path d="M1148.0 535.0C1148.7 537.2 1153.3 545.2 1152.0 548.0C1150.7 550.8 1142.0 551.3 1140.0 552.0" stroke="#444" stroke-width="1.22"/>
<path d="M880.0 527.0C882.5 530.0 890.0 540.7 895.0 545.0C900.0 549.3 896.7 553.8 910.0 553.0C923.3 552.2 955.8 542.7 975.0 540.0C994.2 537.3 1012.5 535.3 1025.0 537.0C1037.5 538.7 1030.8 545.3 1050.0 550.0C1069.2 554.7 1125.0 562.5 1140.0 565.0" stroke="#444" stroke-width="1.35"/>
<path d="M910.0 562.0C917.5 560.3 936.7 554.2 955.0 552.0C973.3 549.8 1004.2 548.0 1020.0 549.0C1035.8 550.0 1030.3 554.8 1050.0 558.0C1069.7 561.2 1123.3 566.3 1138.0 568.0" stroke="#444" stroke-width="1.22"/>
<path d="M905.0 545.0C912.5 543.5 930.8 538.0 950.0 536.0C969.2 534.0 1008.3 533.5 1020.0 533.0" stroke="#585858" stroke-width="0.94"/>
<path d="M922.0 572.0 L1020.0 559.0" stroke="#444" stroke-width="1.22"/>
<path d="M930.0 560.0 L942.0 558.0" stroke="#444" stroke-width="1.89"/>
<path d="M955.0 555.0 L970.0 553.0" stroke="#444" stroke-width="1.89"/>
<path d="M992.0 550.0 L1006.0 549.0" stroke="#444" stroke-width="1.89"/>
<path d="M1026.0 545.0 L1038.0 552.0" stroke="#444" stroke-width="1.89"/>
<path d="M1050.0 545.0C1058.3 546.2 1084.2 549.5 1100.0 552.0C1115.8 554.5 1137.5 558.7 1145.0 560.0" stroke="#585858" stroke-width="0.94"/>
<path d="M922.0 567.0L925.0 627.0L921.0 630.0L924.0 670.0L918.0 662.0L917.0 695.0" stroke="#444" stroke-width="1.22"/>
<path d="M925.0 631.0 L955.0 626.0" stroke="#6a6a6a" stroke-width="0.81"/>
<path d="M1020.0 557.0C1019.7 567.5 1019.3 592.0 1018.0 620.0C1016.7 648.0 1013.0 707.5 1012.0 725.0" stroke="#444" stroke-width="1.22"/>
<path d="M1026.0 557.0C1025.7 567.2 1025.5 588.3 1024.0 618.0C1022.5 647.7 1018.2 715.5 1017.0 735.0" stroke="#444" stroke-width="1.22"/>
<path d="M1022.0 619.0C1025.3 618.2 1033.7 613.0 1042.0 614.0C1050.3 615.0 1067.0 623.2 1072.0 625.0" stroke="#444" stroke-width="1.35"/>
<path d="M1015.0 640.0C1013.7 645.8 1009.2 663.0 1007.0 675.0C1004.8 687.0 1001.8 704.2 1002.0 712.0C1002.2 719.8 1007.0 720.3 1008.0 722.0" stroke="#585858" stroke-width="0.94"/>
<path d="M1034.0 640.0C1032.7 646.7 1027.0 666.3 1026.0 680.0C1025.0 693.7 1027.7 715.0 1028.0 722.0" stroke="#6a6a6a" stroke-width="0.81"/>
<path d="M1087.0 582.0C1093.3 581.2 1108.3 577.3 1125.0 577.0C1141.7 576.7 1165.0 580.3 1187.0 580.0C1209.0 579.7 1243.5 576.0 1257.0 575.0C1270.5 574.0 1266.2 574.2 1268.0 574.0" stroke="#444" stroke-width="1.35"/>
<path d="M1120.0 580.0C1117.5 583.3 1108.3 592.5 1105.0 600.0C1101.7 607.5 1100.2 617.3 1100.0 625.0C1099.8 632.7 1103.3 642.5 1104.0 646.0" stroke="#444" stroke-width="1.22"/>
<path d="M1132.0 581.0C1129.2 584.2 1118.5 592.7 1115.0 600.0C1111.5 607.3 1110.5 618.8 1111.0 625.0C1111.5 631.2 1116.8 635.0 1118.0 637.0" stroke="#444" stroke-width="1.22"/>
<path d="M1126.0 580.0C1123.3 583.3 1113.3 592.5 1110.0 600.0C1106.7 607.5 1105.7 618.3 1106.0 625.0C1106.3 631.7 1111.0 637.5 1112.0 640.0" stroke="#6a6a6a" stroke-width="0.81"/>
<path d="M1087.0 582.0C1085.3 585.8 1079.2 597.8 1077.0 605.0C1074.8 612.2 1073.2 620.0 1074.0 625.0C1074.8 630.0 1080.7 633.3 1082.0 635.0" stroke="#585858" stroke-width="1.08"/>
<path d="M1112.0 637.0C1120.0 636.7 1143.3 635.2 1160.0 635.0C1176.7 634.8 1203.3 635.8 1212.0 636.0" stroke="#444" stroke-width="1.35"/>
<path d="M1082.0 635.0 L1095.0 640.0" stroke="#444" stroke-width="1.22"/>
<path d="M1095.0 640.0C1091.7 642.5 1082.5 647.5 1075.0 655.0C1067.5 662.5 1059.7 671.7 1050.0 685.0C1040.3 698.3 1022.5 726.7 1017.0 735.0" stroke="#383838" stroke-width="1.62"/>
<path d="M1140.0 588.0C1143.0 589.2 1152.7 591.3 1158.0 595.0C1163.3 598.7 1169.7 607.5 1172.0 610.0" stroke="#6a6a6a" stroke-width="0.81"/>
<path d="M1217.5 619.0C1222.9 618.2 1240.0 615.5 1250.0 614.0C1260.0 612.5 1272.9 610.7 1277.5 610.0" stroke="#3a3a3a" stroke-width="1.62"/>
<path d="M1217.5 619.0C1222.9 616.8 1239.2 610.4 1250.0 606.0C1260.8 601.6 1277.1 594.8 1282.5 592.5" stroke="#444" stroke-width="1.49"/>
<path d="M1222.5 622.5C1227.1 620.8 1240.4 615.8 1250.0 612.0C1259.6 608.2 1275.0 602.0 1280.0 600.0" stroke="#444" stroke-width="1.22"/>
<path d="M1252.5 614.0C1254.1 613.3 1259.1 611.1 1262.0 610.0C1264.9 608.9 1268.7 607.9 1270.0 607.5" stroke="#3a3a3a" stroke-width="2.70"/>
<path d="M1236.0 624.0C1236.7 623.3 1239.7 618.7 1240.0 620.0C1240.3 621.3 1238.3 630.0 1238.0 632.0" stroke="#3a3a3a" stroke-width="2.43"/>
<path d="M1217.5 619.0L1210.0 635.0L1180.0 635.0" stroke="#444" stroke-width="1.35"/>
<path d="M1221.0 632.5C1225.8 631.6 1239.3 628.9 1250.0 627.0C1260.7 625.1 1279.2 622.0 1285.0 621.0" stroke="#444" stroke-width="1.35"/>
<path d="M1210.0 635.0L1221.0 646.0L1215.0 675.0L1202.5 681.0L1197.0 705.0L1192.5 727.5" stroke="#444" stroke-width="1.35"/>
<path d="M1209.0 647.5C1206.2 650.2 1196.1 655.7 1192.5 664.0C1188.9 672.3 1189.6 689.4 1187.5 697.5C1185.4 705.6 1181.2 710.0 1180.0 712.5" stroke="#444" stroke-width="1.35"/>
<path d="M1196.0 660.0C1195.0 665.0 1192.2 680.8 1190.0 690.0C1187.8 699.2 1184.2 710.8 1183.0 715.0" stroke="#585858" stroke-width="0.94"/>
<path d="M1186.0 646.0C1187.7 645.7 1193.0 643.7 1196.0 644.0C1199.0 644.3 1202.7 647.3 1204.0 648.0" stroke="#444" stroke-width="1.89"/>
<path d="M1221.0 679.0C1225.0 677.7 1237.5 673.3 1245.0 671.0C1252.5 668.7 1262.5 666.0 1266.0 665.0" stroke="#444" stroke-width="1.22"/>
<path d="M1212.5 692.5C1215.0 691.2 1223.8 687.9 1227.5 685.0C1231.2 682.1 1233.8 676.7 1235.0 675.0" stroke="#444" stroke-width="1.22"/>
<path d="M1214.0 694.0C1213.3 696.3 1211.3 703.2 1210.0 708.0C1208.7 712.8 1206.7 720.1 1206.0 722.5" stroke="#444" stroke-width="1.22"/>
<path d="M1245.0 685.0C1245.8 683.8 1246.5 679.2 1250.0 677.5C1253.5 675.8 1263.1 671.7 1266.0 675.0C1268.9 678.3 1267.2 693.8 1267.5 697.5" stroke="#444" stroke-width="1.22"/>
<path d="M1245.0 685.0 L1246.0 712.5" stroke="#444" stroke-width="1.08"/>
<path d="M1180.0 736.0C1186.2 733.8 1206.5 726.7 1217.5 722.5C1228.5 718.3 1241.2 712.9 1246.0 711.0" stroke="#444" stroke-width="1.35"/>
<path d="M1180.0 729.0C1184.2 727.5 1194.3 723.8 1205.0 720.0C1215.7 716.2 1237.5 708.3 1244.0 706.0" stroke="#444" stroke-width="1.22"/>
<path d="M1271.0 650.0 L1270.0 697.5" stroke="#444" stroke-width="1.22"/>
<path d="M1215.0 620.0C1214.2 623.3 1213.8 633.0 1210.0 640.0C1206.2 647.0 1195.8 652.0 1192.0 662.0C1188.2 672.0 1189.0 690.3 1187.0 700.0C1185.0 709.7 1184.5 713.8 1180.0 720.0C1175.5 726.2 1163.3 734.2 1160.0 737.0" stroke="#585858" stroke-width="1.08"/>
<path d="M1135.0 757.0C1141.7 753.7 1156.7 744.0 1175.0 737.0C1193.3 730.0 1228.2 720.8 1245.0 715.0C1261.8 709.2 1270.8 704.2 1276.0 702.0" stroke="#444" stroke-width="1.22"/>
<path d="M1165.0 738.0C1166.2 736.3 1169.5 728.3 1172.0 728.0C1174.5 727.7 1178.7 734.7 1180.0 736.0" stroke="#444" stroke-width="1.62"/>
<path d="M1105.0 727.0 L1106.0 750.0" stroke="#585858" stroke-width="0.94"/>
<path d="M1117.0 722.0 L1122.0 752.0" stroke="#585858" stroke-width="0.94"/>
<path d="M1110.0 724.0 L1112.0 748.0" stroke="#6a6a6a" stroke-width="0.81"/>
<path d="M1050.0 767.0 L1065.0 757.0" stroke="#444" stroke-width="1.22"/>
<path d="M1087.0 769.0C1095.3 767.3 1104.8 760.7 1137.0 759.0C1169.2 757.3 1256.2 759.0 1280.0 759.0" stroke="#444" stroke-width="1.22"/>
<path d="M1250.0 716.0C1251.0 715.3 1255.3 711.0 1256.0 712.0C1256.7 713.0 1254.3 720.3 1254.0 722.0" stroke="#444" stroke-width="1.35"/>
<path d="M1224.0 301.0C1231.2 298.5 1251.0 291.7 1267.0 286.0C1283.0 280.3 1303.3 271.3 1320.0 267.0C1336.7 262.7 1353.7 261.8 1367.0 260.0C1380.3 258.2 1394.5 256.7 1400.0 256.0" stroke="#383838" stroke-width="1.62"/>
<path d="M1400.0 256.0C1403.3 257.3 1413.0 260.7 1420.0 264.0C1427.0 267.3 1430.8 270.7 1442.0 276.0C1453.2 281.3 1475.3 291.8 1487.0 296.0C1498.7 300.2 1505.0 299.2 1512.0 301.0C1519.0 302.8 1526.2 306.0 1529.0 307.0" stroke="#3a3a3a" stroke-width="1.49"/>
<path d="M1224.0 301.0C1223.7 305.3 1221.5 318.5 1222.0 327.0C1222.5 335.5 1224.5 342.8 1227.0 352.0C1229.5 361.2 1233.7 374.8 1237.0 382.0C1240.3 389.2 1245.3 392.8 1247.0 395.0" stroke="#444" stroke-width="1.35"/>
<path d="M1529.0 307.0C1529.8 310.0 1533.5 318.3 1534.0 325.0C1534.5 331.7 1534.0 338.7 1532.0 347.0C1530.0 355.3 1524.8 366.5 1522.0 375.0C1519.2 383.5 1516.2 394.2 1515.0 398.0" stroke="#444" stroke-width="1.35"/>
<path d="M1525.0 310.0C1524.2 315.8 1522.8 332.5 1520.0 345.0C1517.2 357.5 1510.0 378.3 1508.0 385.0" stroke="#6a6a6a" stroke-width="0.94"/>
<path d="M1247.0 395.0C1251.7 396.3 1261.7 405.0 1275.0 403.0C1288.3 401.0 1310.0 387.7 1327.0 383.0C1344.0 378.3 1369.5 377.5 1377.0 375.0C1384.5 372.5 1372.8 369.2 1372.0 368.0" stroke="#444" stroke-width="1.35"/>
<path d="M1392.0 375.0C1400.3 377.0 1422.0 382.5 1442.0 387.0C1462.0 391.5 1500.3 399.5 1512.0 402.0" stroke="#444" stroke-width="1.35"/>
<path d="M1276.0 290.0C1276.7 295.3 1277.7 310.8 1280.0 322.0C1282.3 333.2 1286.3 346.5 1290.0 357.0C1293.7 367.5 1300.0 380.3 1302.0 385.0" stroke="#444" stroke-width="1.35"/>
<path d="M1287.0 291.0C1288.2 296.7 1291.0 314.0 1294.0 325.0C1297.0 336.0 1300.7 347.8 1305.0 357.0C1309.3 366.2 1317.5 376.2 1320.0 380.0" stroke="#444" stroke-width="1.22"/>
<path d="M1300.0 290.0C1300.8 295.3 1302.3 311.2 1305.0 322.0C1307.7 332.8 1311.8 346.0 1316.0 355.0C1320.2 364.0 1327.7 372.5 1330.0 376.0" stroke="#585858" stroke-width="1.08"/>
<path d="M1445.0 273.0C1448.3 274.8 1458.0 280.2 1465.0 284.0C1472.0 287.8 1483.3 294.0 1487.0 296.0" stroke="#444" stroke-width="1.22"/>
<path d="M1447.0 268.0 L1480.0 286.0" stroke="#585858" stroke-width="0.94"/>
<path d="M1470.0 290.0C1469.2 295.3 1468.0 311.2 1465.0 322.0C1462.0 332.8 1456.7 344.2 1452.0 355.0C1447.3 365.8 1439.5 381.7 1437.0 387.0" stroke="#444" stroke-width="1.22"/>
<path d="M1480.0 296.0C1479.0 301.2 1477.3 316.3 1474.0 327.0C1470.7 337.7 1464.8 350.0 1460.0 360.0C1455.2 370.0 1447.5 382.5 1445.0 387.0" stroke="#444" stroke-width="1.22"/>
<path d="M1462.0 290.0C1461.0 295.8 1459.2 313.3 1456.0 325.0C1452.8 336.7 1445.2 354.2 1443.0 360.0" stroke="#6a6a6a" stroke-width="0.81"/>
<path d="M1483.0 296.0 L1488.0 308.0" stroke="#444" stroke-width="1.62"/>
<path d="M1277.0 385.0C1279.2 383.8 1286.2 378.2 1290.0 378.0C1293.8 377.8 1301.0 382.3 1300.0 384.0C1299.0 385.7 1287.8 387.8 1284.0 388.0C1280.2 388.2 1278.2 385.5 1277.0 385.0" stroke="#444" stroke-width="1.62"/>
<path d="M1330.0 370.0C1332.5 369.5 1342.2 366.3 1345.0 367.0C1347.8 367.7 1349.2 372.3 1347.0 374.0C1344.8 375.7 1334.5 376.5 1332.0 377.0" stroke="#444" stroke-width="1.22"/>
<path d="M1327.0 383.0C1334.5 381.3 1363.8 373.8 1372.0 373.0C1380.2 372.2 1383.0 375.5 1376.0 378.0C1369.0 380.5 1337.7 386.3 1330.0 388.0" stroke="#444" stroke-width="1.22"/>
<path d="M1398.0 382.0C1400.8 382.3 1409.7 382.3 1415.0 384.0C1420.3 385.7 1431.2 391.2 1430.0 392.0C1428.8 392.8 1413.3 390.7 1408.0 389.0C1402.7 387.3 1399.7 383.2 1398.0 382.0" stroke="#444" stroke-width="1.89"/>
<path d="M1460.0 398.0C1463.7 398.7 1476.7 400.3 1482.0 402.0C1487.3 403.7 1494.0 407.5 1492.0 408.0C1490.0 408.5 1475.3 406.7 1470.0 405.0C1464.7 403.3 1461.7 399.2 1460.0 398.0" stroke="#444" stroke-width="1.89"/>
<path d="M1250.0 395.0C1252.0 397.5 1257.8 408.7 1262.0 410.0C1266.2 411.3 1272.8 404.2 1275.0 403.0" stroke="#444" stroke-width="1.22"/>
<path d="M1270.0 415.0C1280.0 412.8 1310.5 405.0 1330.0 402.0C1349.5 399.0 1370.3 396.5 1387.0 397.0C1403.7 397.5 1409.2 399.5 1430.0 405.0C1450.8 410.5 1498.3 425.8 1512.0 430.0" stroke="#444" stroke-width="1.35"/>
<path d="M1275.0 425.0C1284.2 423.3 1310.8 417.2 1330.0 415.0C1349.2 412.8 1373.3 411.2 1390.0 412.0C1406.7 412.8 1410.0 415.8 1430.0 420.0C1450.0 424.2 1496.7 434.2 1510.0 437.0" stroke="#444" stroke-width="1.35"/>
<path d="M1268.0 408.0C1278.3 405.8 1310.5 397.8 1330.0 395.0C1349.5 392.2 1375.8 391.7 1385.0 391.0" stroke="#585858" stroke-width="0.94"/>
<path d="M1284.0 432.0 L1380.0 418.0" stroke="#444" stroke-width="1.22"/>
<path d="M1292.0 420.0 L1303.0 418.0" stroke="#444" stroke-width="1.89"/>
<path d="M1316.0 415.0 L1328.0 413.0" stroke="#444" stroke-width="1.89"/>
<path d="M1354.0 410.0 L1366.0 409.0" stroke="#444" stroke-width="1.89"/>
<path d="M1384.0 407.0 L1396.0 412.0" stroke="#444" stroke-width="2.03"/>
<path d="M1405.0 410.0C1412.5 411.7 1434.2 416.3 1450.0 420.0C1465.8 423.7 1491.7 430.0 1500.0 432.0" stroke="#6a6a6a" stroke-width="0.81"/>
<path d="M1498.0 404.0 L1500.0 418.0" stroke="#444" stroke-width="1.22"/>
<path d="M1500.0 410.0 L1508.0 412.0" stroke="#444" stroke-width="1.22"/>
<path d="M1284.0 430.0 L1286.0 510.0" stroke="#444" stroke-width="1.22"/>
<path d="M1380.0 420.0 L1379.0 482.0" stroke="#444" stroke-width="1.22"/>
<path d="M1386.0 420.0 L1385.0 480.0" stroke="#444" stroke-width="1.22"/>
<path d="M1499.0 437.0C1498.3 441.7 1495.5 454.5 1495.0 465.0C1494.5 475.5 1495.8 494.2 1496.0 500.0" stroke="#444" stroke-width="1.22"/>
<path d="M1285.0 502.0C1292.5 498.3 1314.7 483.3 1330.0 480.0C1345.3 476.7 1364.5 483.0 1377.0 482.0C1389.5 481.0 1393.7 473.2 1405.0 474.0C1416.3 474.8 1428.3 481.5 1445.0 487.0C1461.7 492.5 1495.0 503.7 1505.0 507.0" stroke="#444" stroke-width="1.35"/>
<path d="M1276.0 511.0L1311.0 493.7L1373.7 493.7L1377.5 500.0L1380.0 518.7" stroke="#444" stroke-width="1.49"/>
<path d="M1276.0 511.0C1276.3 512.2 1276.5 516.3 1278.0 518.0C1279.5 519.7 1283.8 520.5 1285.0 521.0" stroke="#444" stroke-width="1.22"/>
<path d="M1280.0 521.0L1305.0 506.0L1365.0 506.0L1372.5 521.0" stroke="#444" stroke-width="1.35"/>
<path d="M1285.0 490.0 L1285.6 504.0" stroke="#444" stroke-width="1.08"/>
<path d="M1392.0 490.0C1400.0 491.2 1421.5 493.5 1440.0 497.0C1458.5 500.5 1492.5 508.7 1503.0 511.0" stroke="#444" stroke-width="1.35"/>
<path d="M1395.0 498.0C1402.5 499.3 1422.5 502.2 1440.0 506.0C1457.5 509.8 1490.0 518.5 1500.0 521.0" stroke="#444" stroke-width="1.35"/>
<path d="M1503.0 511.0C1503.2 512.2 1504.5 516.3 1504.0 518.0C1503.5 519.7 1500.7 520.5 1500.0 521.0" stroke="#444" stroke-width="1.22"/>
<path d="M1400.0 505.0C1408.3 506.7 1433.7 511.3 1450.0 515.0C1466.3 518.7 1490.0 525.0 1498.0 527.0" stroke="#585858" stroke-width="0.94"/>
<path d="M1321.0 509.0 L1352.5 510.0" stroke="#3a3a3a" stroke-width="2.43"/>
<path d="M1382.5 503.0 L1382.5 719.0" stroke="#3a3a3a" stroke-width="1.62"/>
<path d="M1373.0 512.0 L1373.7 697.0" stroke="#585858" stroke-width="1.08"/>
<path d="M1366.0 523.7L1366.0 556.0L1373.0 551.0" stroke="#444" stroke-width="1.22"/>
<path d="M1366.0 523.7 L1372.5 525.0" stroke="#444" stroke-width="1.22"/>
<path d="M1491.0 530.0 L1491.0 707.0" stroke="#585858" stroke-width="1.22"/>
<path d="M1277.5 616.0 L1277.5 719.0" stroke="#444" stroke-width="1.35"/>
<path d="M1289.0 590.0 L1290.0 625.0" stroke="#444" stroke-width="1.22"/>
<path d="M1282.5 594.0 L1283.0 606.0" stroke="#585858" stroke-width="1.08"/>
<path d="M1365.0 560.0C1361.2 563.5 1350.4 574.3 1342.5 581.0C1334.6 587.7 1325.8 595.2 1317.5 600.0C1309.2 604.8 1296.7 608.3 1292.5 610.0" stroke="#444" stroke-width="1.35"/>
<path d="M1362.0 566.0C1358.3 569.3 1347.3 579.8 1340.0 586.0C1332.7 592.2 1321.7 600.2 1318.0 603.0" stroke="#6a6a6a" stroke-width="0.81"/>
<path d="M1180.0 581.0C1192.5 580.2 1240.0 576.7 1255.0 576.0C1270.0 575.3 1267.5 576.8 1270.0 577.0" stroke="#444" stroke-width="1.49"/>
<path d="M1267.5 699.4 L1380.0 699.4" stroke="#3a3a3a" stroke-width="2.16"/>
<path d="M1276.0 702.0 L1378.0 701.0" stroke="#444" stroke-width="1.08"/>
<path d="M1276.0 718.0 L1382.0 717.5" stroke="#444" stroke-width="1.49"/>
<path d="M1382.0 718.0C1393.3 718.1 1428.7 718.3 1450.0 718.5C1471.3 718.7 1500.0 718.9 1510.0 719.0" stroke="#444" stroke-width="1.35"/>
<path d="M1271.0 650.0 L1305.0 649.0" stroke="#444" stroke-width="1.08"/>
<path d="M1305.0 665.0L1305.0 626.0L1310.0 619.0L1329.0 616.0L1335.0 622.5L1336.0 682.5" stroke="#444" stroke-width="1.35"/>
<path d="M1311.0 660.0L1311.0 624.0L1326.0 622.5L1326.0 662.5" stroke="#444" stroke-width="1.08"/>
<path d="M1317.5 624.0 L1317.5 645.0" stroke="#3a3a3a" stroke-width="2.43"/>
<path d="M1317.0 649.0 L1317.5 656.0" stroke="#444" stroke-width="1.76"/>
<path d="M1300.0 670.0L1305.0 665.0L1326.0 662.5L1330.0 655.0" stroke="#444" stroke-width="1.22"/>
<path d="M1300.0 670.0L1302.5 684.0L1337.5 682.5" stroke="#444" stroke-width="1.22"/>
<path d="M1320.0 666.0 L1320.0 683.0" stroke="#444" stroke-width="1.08"/>
<path d="M1326.0 668.0 L1327.0 683.0" stroke="#585858" stroke-width="0.94"/>
<path d="M1337.5 649.0L1357.5 649.0L1357.5 656.0L1339.0 655.0" stroke="#585858" stroke-width="1.08"/>
<path d="M1292.5 616.0 L1293.0 650.0" stroke="#585858" stroke-width="1.08"/>
<path d="M1297.5 616.0 L1297.5 650.0" stroke="#585858" stroke-width="1.08"/>
<path d="M1361.0 649.0C1362.1 651.2 1364.3 658.8 1367.5 662.5C1370.7 666.2 1376.9 669.8 1380.0 671.0C1383.1 672.2 1383.5 671.8 1386.0 670.0C1388.5 668.2 1393.5 661.7 1395.0 660.0" stroke="#444" stroke-width="1.22"/>
<path d="M1356.0 669.0 L1357.5 684.0" stroke="#444" stroke-width="1.08"/>
<path d="M1277.5 686.0C1280.0 686.2 1285.8 687.3 1292.5 687.0C1299.2 686.7 1307.1 684.5 1317.5 684.0C1327.9 683.5 1348.8 684.0 1355.0 684.0" stroke="#444" stroke-width="1.08"/>
<ellipse cx="1370.6" cy="685" rx="3.1" ry="3.7" stroke="#444" stroke-width="1.2"/>
<path d="M1361.0 708.0C1361.3 708.8 1362.0 713.0 1363.0 713.0C1364.0 713.0 1366.0 707.8 1367.0 708.0C1368.0 708.2 1367.8 713.8 1369.0 714.0C1370.2 714.2 1373.2 709.8 1374.0 709.0" stroke="#444" stroke-width="1.08"/>
<path d="M1385.0 697.5 L1402.0 699.0" stroke="#454545" stroke-width="4.05"/>
<path d="M1409.0 698.5 L1428.0 700.0" stroke="#454545" stroke-width="4.05"/>
<path d="M1438.0 700.0 L1456.0 701.0" stroke="#454545" stroke-width="4.05"/>
<path d="M1463.0 701.0 L1479.0 702.0" stroke="#454545" stroke-width="4.05"/>
<ellipse cx="1280" cy="557.5" rx="16" ry="20" stroke="#444" stroke-width="1.2"/>
<ellipse cx="1279" cy="557.5" rx="12" ry="15" stroke="#444" stroke-width="1.2"/>
<path d="M1297.5 540.0L1310.0 545.0L1313.7 555.0L1312.5 567.5L1305.0 577.5L1295.0 590.0L1275.0 590.0L1272.5 585.0" stroke="#444" stroke-width="1.22"/>
<path d="M1297.5 550.0 L1312.5 551.0" stroke="#444" stroke-width="1.08"/>
<path d="M1297.5 566.0 L1310.0 575.0" stroke="#444" stroke-width="1.08"/>
<path d="M1290.0 577.5 L1295.0 590.0" stroke="#444" stroke-width="1.08"/>
<path d="M1280.0 577.5 L1275.0 590.0" stroke="#444" stroke-width="1.08"/>
<path d="M1272.0 532.0C1273.7 531.0 1278.3 526.7 1282.0 526.0C1285.7 525.3 1291.5 526.0 1294.0 528.0C1296.5 530.0 1296.5 536.3 1297.0 538.0" stroke="#444" stroke-width="1.22"/>
<path d="M1277.0 545.0 L1277.0 570.0" stroke="#6a6a6a" stroke-width="0.81"/>
<path d="M1277.0 562.0 L1288.0 555.0" stroke="#6a6a6a" stroke-width="0.81"/>
<path d="M1492.0 540.0C1500.0 541.2 1532.5 543.7 1540.0 547.0C1547.5 550.3 1545.0 558.7 1537.0 560.0C1529.0 561.3 1499.5 555.8 1492.0 555.0" stroke="#444" stroke-width="1.22"/>
<path d="M1495.0 543.0 L1535.0 550.0" stroke="#585858" stroke-width="0.94"/>
<path d="M1495.0 565.0 L1495.0 650.0" stroke="#444" stroke-width="1.22"/>
<path d="M1527.0 565.0 L1529.0 655.0" stroke="#444" stroke-width="1.22"/>
<path d="M1498.0 568.0C1500.0 566.7 1505.2 560.5 1510.0 560.0C1514.8 559.5 1524.2 564.2 1527.0 565.0" stroke="#444" stroke-width="1.08"/>
<path d="M1471.0 617.0L1512.0 619.0L1512.0 642.0L1492.0 642.0" stroke="#444" stroke-width="1.35"/>
<path d="M1471.0 617.0 L1472.0 700.0" stroke="#585858" stroke-width="1.08"/>
<path d="M1475.0 625.0C1479.2 625.3 1495.8 624.5 1500.0 627.0C1504.2 629.5 1500.0 637.8 1500.0 640.0" stroke="#444" stroke-width="1.22"/>
<path d="M1512.0 626.0C1515.0 626.3 1526.7 624.0 1530.0 628.0C1533.3 632.0 1531.7 646.3 1532.0 650.0" stroke="#585858" stroke-width="1.08"/>
<path d="M1495.0 655.0 L1525.0 657.0" stroke="#444" stroke-width="1.62"/>
<path d="M1497.0 662.0 L1522.0 663.0" stroke="#444" stroke-width="1.22"/>
<path d="M1500.0 668.0C1499.5 671.7 1496.2 684.7 1497.0 690.0C1497.8 695.3 1503.7 698.3 1505.0 700.0" stroke="#444" stroke-width="1.08"/>
<path d="M1518.0 668.0 L1522.0 690.0" stroke="#444" stroke-width="1.08"/>
<path d="M1525.0 682.0C1535.0 683.3 1574.2 686.7 1585.0 690.0C1595.8 693.3 1577.5 697.0 1590.0 702.0C1602.5 707.0 1644.0 716.0 1660.0 720.0C1676.0 724.0 1681.7 725.0 1686.0 726.0" stroke="#444" stroke-width="1.22"/>
<path d="M1530.0 707.0C1540.0 708.3 1579.7 712.0 1590.0 715.0C1600.3 718.0 1576.7 723.3 1592.0 725.0C1607.3 726.7 1667.0 725.0 1682.0 725.0" stroke="#444" stroke-width="1.22"/>
<path d="M1534.0 690.0 L1535.0 705.0" stroke="#3a3a3a" stroke-width="2.97"/>
<path d="M1547.0 692.0 L1549.0 707.0" stroke="#3a3a3a" stroke-width="3.24"/>
<path d="M1570.0 697.0 L1572.0 710.0" stroke="#3a3a3a" stroke-width="3.51"/>
<path d="M1545.0 717.0 L1552.0 717.0" stroke="#444" stroke-width="2.03"/>
<path d="M1568.0 719.0 L1575.0 719.0" stroke="#444" stroke-width="2.03"/>
<path d="M1525.0 707.0C1525.8 710.8 1525.0 722.8 1530.0 730.0C1535.0 737.2 1542.5 745.7 1555.0 750.0C1567.5 754.3 1589.2 756.3 1605.0 756.0C1620.8 755.7 1642.5 749.3 1650.0 748.0" stroke="#585858" stroke-width="1.08"/>
<path d="M1510.0 712.0C1510.3 713.7 1510.7 722.0 1512.0 722.0C1513.3 722.0 1516.7 710.7 1518.0 712.0C1519.3 713.3 1519.7 727.0 1520.0 730.0" stroke="#444" stroke-width="1.08"/>
<path d="M1682.0 725.0 L1627.0 767.0" stroke="#383838" stroke-width="2.03"/>
<path d="M1525.0 707.0C1531.7 714.3 1551.7 741.3 1565.0 751.0C1578.3 760.7 1591.0 756.8 1605.0 765.0C1619.0 773.2 1641.7 794.2 1649.0 800.0" stroke="#585858" stroke-width="0.94"/>
<path d="M1640.0 770.0 L1688.0 772.0" stroke="#444" stroke-width="1.62"/>
<path d="M1650.0 790.0 L1688.0 796.0" stroke="#444" stroke-width="1.35"/>
<path d="M1645.0 772.0 L1668.0 792.0" stroke="#444" stroke-width="1.08"/>
<path d="M1655.0 768.0 L1670.0 769.0" stroke="#444" stroke-width="2.43"/>
<path d="M1027.0 798.0C1072.5 797.8 1197.5 797.3 1300.0 797.0C1402.5 796.7 1585.0 796.2 1642.0 796.0" stroke="#505050" stroke-width="1.22"/>
<path d="M1040.0 797.0C1045.8 793.3 1063.5 781.5 1075.0 775.0C1086.5 768.5 1071.5 761.0 1109.0 758.0C1146.5 755.0 1213.7 757.5 1300.0 757.0C1386.3 756.5 1572.5 755.3 1627.0 755.0" stroke="#505050" stroke-width="1.22"/>
<path d="M1047.0 780.0C1047.7 777.8 1048.2 770.7 1051.0 767.0C1053.8 763.3 1061.8 759.5 1064.0 758.0" stroke="#444" stroke-width="1.08"/>
<path d="M1468.0 821.0C1471.7 820.5 1482.3 818.7 1490.0 818.0C1497.7 817.3 1510.0 817.2 1514.0 817.0" stroke="#6a6a6a" stroke-width="0.94"/>
<path d="M1240.0 757.0 L1275.0 720.0" stroke="#444" stroke-width="1.35"/>
<path d="M1247.0 757.0 L1280.0 722.0" stroke="#444" stroke-width="1.08"/>
<path d="M1355.0 759.0 L1380.0 720.0" stroke="#444" stroke-width="1.22"/>
<path d="M1365.0 759.0 L1388.0 722.0" stroke="#444" stroke-width="1.08"/>
<path d="M1245.0 757.0 L1295.0 757.0" stroke="#444" stroke-width="1.76"/>
<path d="M1385.0 750.0C1386.7 746.2 1386.7 731.2 1395.0 727.0C1403.3 722.8 1426.7 721.2 1435.0 725.0C1443.3 728.8 1443.3 745.8 1445.0 750.0" stroke="#444" stroke-width="1.22"/>
<path d="M1388.0 757.0 L1445.0 757.0" stroke="#444" stroke-width="1.22"/>
<path d="M1290.0 720.0 L1292.0 757.0" stroke="#444" stroke-width="1.08"/>
<path d="M1297.0 720.0 L1298.0 757.0" stroke="#444" stroke-width="1.08"/>
<path d="M1300.0 724.0C1302.5 724.0 1313.0 721.7 1315.0 724.0C1317.0 726.3 1312.5 735.7 1312.0 738.0" stroke="#585858" stroke-width="0.94"/>
<path d="M1262.0 716.0C1261.3 717.7 1257.0 725.0 1258.0 726.0C1259.0 727.0 1266.3 722.7 1268.0 722.0" stroke="#444" stroke-width="1.22"/>
<rect x="1392" y="735" width="22" height="14" fill="#454545"/><rect x="1423" y="735" width="13" height="15" fill="#454545"/>
<path d="M1237 427.5L1237 435 1239 433.2 1240.4 436 1241.4 435.5 1240.2 432.8 1242.5 432.6Z" fill="#222" stroke="none"/>
<ellipse cx="1245" cy="435.5" rx="4" ry="2.6" stroke="#666" stroke-width="0.8"/><path d="M1243 438v3" stroke="#555" stroke-width="0.8"/>
</svg>
<div class="a" style="left:118px;top:83px;width:28px;height:10px;background:#3f3f3f"></div>
<div class="a" style="left:118px;top:93px;width:28px;height:30px;background:#535353;box-shadow:0 1px 2px rgba(0,0,0,.3)"></div>
<svg style="left:123px;top:85.5px" width="7" height="5" viewBox="0 0 7 5" fill="none" stroke="#d4d4d4" stroke-width="1.1"><path d="M0.7 0.5L2.7 2.5 0.7 4.5M4 0.5L6 2.5 4 4.5"/></svg><svg style="left:137.5px;top:85.5px" width="5" height="5" viewBox="0 0 5 5" fill="none" stroke="#d4d4d4" stroke-width="1.4"><path d="M0.5 0.5L4.5 4.5M4.5 0.5L0.5 4.5"/></svg>
<svg style="left:125px;top:103px" width="15" height="12" viewBox="0 0 15 12" fill="#e4e4e4" stroke="#e4e4e4"><path d="M0 2.5h14M1 8.5h13" stroke-width="1.2"/><ellipse cx="4" cy="2.5" rx="2.6" ry="1.8" stroke="none"/><path d="M10 8.5l3-3.2v6.4z" stroke-width="1"/><circle cx="11.6" cy="8.5" r="2.2" stroke="none"/></svg>
<div class="a" style="left:46.5px;top:234px;width:28px;height:11px;background:#3f3f3f"></div>
<div class="a" style="left:46.5px;top:245px;width:28px;height:29px;background:#535353;box-shadow:0 1px 2px rgba(0,0,0,.3)"></div>
<svg style="left:51.5px;top:236.5px" width="7" height="5" viewBox="0 0 7 5" fill="none" stroke="#d4d4d4" stroke-width="1.1"><path d="M0.7 0.5L2.7 2.5 0.7 4.5M4 0.5L6 2.5 4 4.5"/></svg><svg style="left:66.0px;top:236.5px" width="5" height="5" viewBox="0 0 5 5" fill="none" stroke="#d4d4d4" stroke-width="1.4"><path d="M0.5 0.5L4.5 4.5M4.5 0.5L0.5 4.5"/></svg>
<svg style="left:53px;top:254px" width="16" height="15" viewBox="0 0 16 15" fill="none" stroke="#e8e8e8" stroke-linecap="round"><path d="M2.500 13L7 8.500" stroke-width="2.800"/><path d="M7 8.500L13.500 1.500" stroke-width="1.200"/><path d="M4 3.500L13 11.500" stroke-width="1.300"/><path d="M1 2.200C2.500 1 4.500 1.500 5 3.500" stroke-width="1.500"/><ellipse cx="12.800" cy="11.300" rx="2.300" ry="1.900" fill="#d8d8d8" stroke="none" transform="rotate(35 12.800 11.300)"/></svg>
<div class="a" style="left:61px;top:432px;width:27px;height:10px;background:#3f3f3f"></div>
<div class="a" style="left:61px;top:442px;width:27px;height:71px;background:#535353;box-shadow:0 1px 2px rgba(0,0,0,.3)"></div>
<svg style="left:65px;top:434.5px" width="7" height="5" viewBox="0 0 7 5" fill="none" stroke="#d4d4d4" stroke-width="1.1"><path d="M0.7 0.5L2.7 2.5 0.7 4.5M4 0.5L6 2.5 4 4.5"/></svg><svg style="left:79.5px;top:434.5px" width="5" height="5" viewBox="0 0 5 5" fill="none" stroke="#d4d4d4" stroke-width="1.4"><path d="M0.5 0.5L4.5 4.5M4.5 0.5L0.5 4.5"/></svg>
<svg style="left:67px;top:452px" width="14" height="11" viewBox="0 0 14 11"><defs><linearGradient id="g3" x1="0" x2="1"><stop offset="0" stop-color="#888"/><stop offset="1" stop-color="#eee"/></linearGradient></defs><rect x="0.6" y="0.6" width="12.8" height="9.8" fill="url(#g3)" stroke="#e2e2e2" stroke-width="1.2"/></svg>
<svg style="left:67px;top:473px" width="14" height="11" viewBox="0 0 14 11" fill="none" stroke="#e2e2e2" stroke-width="1.1"><rect x="0.6" y="0.6" width="12.8" height="9.8"/><path d="M0.6 4h12.8M0.6 7.3h12.8M5 0.6v9.8M9.3 0.6v9.8"/></svg>
<svg style="left:67px;top:494px" width="14" height="11" viewBox="0 0 14 11" fill="none" stroke="#e2e2e2" stroke-width="1.1"><rect x="0.6" y="0.6" width="12.8" height="9.8"/><path d="M0.6 4h12.8M0.6 7.3h12.8M5 0.6v9.8M9.3 0.6v9.8"/></svg>
<div class="a" style="left:1148px;top:112px;width:28px;height:10px;background:#3f3f3f"></div>
<div class="a" style="left:1148px;top:122px;width:28px;height:30px;background:#535353;box-shadow:0 1px 2px rgba(0,0,0,.3)"></div>
<svg style="left:1153px;top:114.5px" width="7" height="5" viewBox="0 0 7 5" fill="none" stroke="#d4d4d4" stroke-width="1.1"><path d="M0.7 0.5L2.7 2.5 0.7 4.5M4 0.5L6 2.5 4 4.5"/></svg><svg style="left:1167.5px;top:114.5px" width="5" height="5" viewBox="0 0 5 5" fill="none" stroke="#d4d4d4" stroke-width="1.4"><path d="M0.5 0.5L4.5 4.5M4.5 0.5L0.5 4.5"/></svg>
<svg style="left:1155px;top:131px" width="14" height="14" viewBox="0 0 14 14" fill="none" stroke="#dedede" stroke-width="1.8"><path d="M11.8 8.8A5.2 5.2 0 1 1 11 3.6"/><circle cx="10.6" cy="9.8" r="1" fill="#dedede" stroke="none"/></svg>
<div class="a" style="left:1615px;top:35px;width:55px;height:10px;background:#3f3f3f"></div>
<div class="a" style="left:1615px;top:45px;width:55px;height:29px;background:#535353;box-shadow:0 1px 2px rgba(0,0,0,.3)"></div>
<svg style="left:1647px;top:37.5px" width="7" height="5" viewBox="0 0 7 5" fill="none" stroke="#d4d4d4" stroke-width="1.1"><path d="M0.7 0.5L2.7 2.5 0.7 4.5M4 0.5L6 2.5 4 4.5"/></svg><svg style="left:1661.5px;top:37.5px" width="5" height="5" viewBox="0 0 5 5" fill="none" stroke="#d4d4d4" stroke-width="1.4"><path d="M0.5 0.5L4.5 4.5M4.5 0.5L0.5 4.5"/></svg>
<svg style="left:1623px;top:54px" width="13" height="13" viewBox="0 0 13 13" fill="#e4e4e4"><circle cx="4" cy="4" r="3.6"/><rect x="9" y="0.5" width="3" height="3"/><rect x="9" y="5" width="3" height="3"/><rect x="0.5" y="9.6" width="11.5" height="3"/></svg>
<div class="t" style="left:1643px;top:56px;font-size:9px;color:#e0e0e0">属性</div>
<div class="a" style="left:1471px;top:71px;width:55px;height:11px;background:#3f3f3f"></div>
<div class="a" style="left:1471px;top:82px;width:55px;height:28px;background:#535353;box-shadow:0 1px 2px rgba(0,0,0,.3)"></div>
<svg style="left:1503px;top:73.5px" width="7" height="5" viewBox="0 0 7 5" fill="none" stroke="#d4d4d4" stroke-width="1.1"><path d="M0.7 0.5L2.7 2.5 0.7 4.5M4 0.5L6 2.5 4 4.5"/></svg><svg style="left:1517.5px;top:73.5px" width="5" height="5" viewBox="0 0 5 5" fill="none" stroke="#d4d4d4" stroke-width="1.4"><path d="M0.5 0.5L4.5 4.5M4.5 0.5L0.5 4.5"/></svg>
<svg style="left:1477px;top:91px" width="15" height="12" viewBox="0 0 15 12" fill="none" stroke="#e4e4e4" stroke-width="1.1"><path d="M2.5 10.5C3 4 5 2 7.5 2S12 4 12.5 10.5M1 2h13"/><rect x="6.3" y="0.8" width="2.4" height="2.4" fill="#e4e4e4"/><circle cx="1.3" cy="2" r="1.1" fill="#e4e4e4"/><circle cx="13.7" cy="2" r="1.1" fill="#e4e4e4"/><rect x="1.4" y="9.2" width="2.2" height="2.2"/><rect x="11.4" y="9.2" width="2.2" height="2.2"/></svg>
<div class="t" style="left:1499px;top:93px;font-size:9px;color:#e0e0e0">路径</div>
<div class="a" style="left:1738px;top:83px;width:27px;height:11px;background:#3f3f3f"></div>
<div class="a" style="left:1738px;top:94px;width:27px;height:79px;background:#535353"></div>
<svg style="left:1753px;top:86.0px" width="7" height="5" viewBox="0 0 7 5" fill="none" stroke="#d4d4d4" stroke-width="1.1"><path d="M0.7 0.5L2.7 2.5 0.7 4.5M4 0.5L6 2.5 4 4.5"/></svg>
<div class="t" style="left:1746px;top:100px;font-size:14px;color:#e2e2e2">A</div><div class="a" style="left:1756px;top:101px;width:1px;height:13px;background:#bdbdbd"></div>
<div class="t" style="left:1746px;top:122px;font-size:12px;color:#e2e2e2;font-weight:bold">¶</div>
<div class="a" style="left:1741px;top:151px;width:21px;height:18px;background:#3c3c3c"></div>
<svg style="left:1743px;top:152px" width="17" height="16" viewBox="-8.5 -8 17 16" stroke="#8a8a8a" stroke-width="0.7"><path d="M0 0L7.5 0.0"/><path d="M0 0L6.9 2.7"/><path d="M0 0L5.3 4.9"/><path d="M0 0L2.9 6.5"/><path d="M0 0L-0.0 7.0"/><path d="M0 0L-2.9 6.5"/><path d="M0 0L-5.3 4.9"/><path d="M0 0L-6.9 2.7"/><path d="M0 0L-7.5 -0.0"/><path d="M0 0L-6.9 -2.7"/><path d="M0 0L-5.3 -4.9"/><path d="M0 0L-2.9 -6.5"/><path d="M0 0L0.0 -7.0"/><path d="M0 0L2.9 -6.5"/><path d="M0 0L5.3 -4.9"/><path d="M0 0L6.9 -2.7"/><circle r="1.2" fill="#ddd" stroke="none"/></svg>
<div class="a" style="left:1766px;top:83px;width:61px;height:11px;background:#3f3f3f"></div>
<div class="a" style="left:1766px;top:94px;width:61px;height:58px;background:#535353"></div>
<div class="a" style="left:1766px;top:121px;width:61px;height:1px;background:#484848"></div>
<svg style="left:1804px;top:86.0px" width="7" height="5" viewBox="0 0 7 5" fill="none" stroke="#d4d4d4" stroke-width="1.1"><path d="M0.7 0.5L2.7 2.5 0.7 4.5M4 0.5L6 2.5 4 4.5"/></svg><svg style="left:1818.5px;top:86.0px" width="5" height="5" viewBox="0 0 5 5" fill="none" stroke="#d4d4d4" stroke-width="1.4"><path d="M0.5 0.5L4.5 4.5M4.5 0.5L0.5 4.5"/></svg>
<svg style="left:1775px;top:100px" width="12" height="16" viewBox="0 0 12 16" fill="none" stroke="#e4e4e4" stroke-width="1.2"><path d="M4 11.5C4 9 1 8.5 1 5.2A5 5 0 0 1 11 5.2C11 8.500 8 9 8 11.500Z"/><path d="M4.300 14h3.400" stroke-width="2"/></svg>
<div class="t" style="left:1796px;top:104px;font-size:9px;color:#e0e0e0">学习</div>
<svg style="left:1775px;top:132px" width="13" height="13" viewBox="0 0 13 13" fill="none" stroke="#e4e4e4" stroke-width="1.2"><rect x="0.7" y="0.7" width="11.6" height="11.6" rx="1.5"/><path d="M3.300 0.700V12.300"/><path d="M6.500 0.700V6L8.200 4.600 10 6V0.700" fill="#e4e4e4"/></svg>
<div class="t" style="left:1796px;top:135px;font-size:9px;color:#e0e0e0">库</div>
<div class="a" style="left:1736px;top:174px;width:137px;height:32px;background:#424242"></div>
<div class="a" style="left:1736px;top:206px;width:137px;height:85px;background:#535353"></div>
<div class="a" style="left:1736px;top:291px;width:137px;height:5px;background:#484848"></div>
<svg style="left:1850px;top:177.5px" width="7" height="5" viewBox="0 0 7 5" fill="none" stroke="#d4d4d4" stroke-width="1.1"><path d="M3 0.5L1 2.5 3 4.5M6.3 0.5L4.3 2.5 6.3 4.5"/></svg><svg style="left:1864.5px;top:177.5px" width="5" height="5" viewBox="0 0 5 5" fill="none" stroke="#d4d4d4" stroke-width="1.4"><path d="M0.5 0.5L4.5 4.5M4.5 0.5L0.5 4.5"/></svg>
<div class="a" style="left:1862px;top:192px;width:8px;height:1.500px;background:#bdbdbd"></div><div class="a" style="left:1862px;top:195px;width:8px;height:1.500px;background:#bdbdbd"></div>
<div class="a" style="left:1737px;top:231px;width:2px;height:7px;border-top:1px solid #e0e0e0;border-bottom:1px solid #e0e0e0;box-sizing:border-box"></div><div class="a" style="left:1737px;top:234px;width:2px;height:1px;background:#e0e0e0"></div>
<svg style="left:1745px;top:230px" width="13" height="11" viewBox="0 0 13 11"><path d="M0 10.500V5l1 2 1-5 1.500 4L5 1l1.200 5L7.500 3l1 3.500L10 2l1 4 1-2v6.500z" fill="#e0e0e0"/></svg>
<svg style="left:1764px;top:229px" width="13" height="12" viewBox="0 0 13 12"><rect x="0.600" y="0.600" width="11" height="10" fill="none" stroke="#bbb" stroke-width="0.800"/><path d="M4.300 0.600v10M8 0.600v10M0.600 4h11M0.600 7.300h11" stroke="#999" stroke-width="0.700"/><path d="M1 10C5 9 8 5 11 1" stroke="#e0e0e0" stroke-width="1.100" fill="none"/></svg>
<svg style="left:1782px;top:230px" width="13" height="11" viewBox="0 0 13 11"><rect x="0.600" y="0.600" width="11" height="9.500" fill="none" stroke="#e0e0e0" stroke-width="1.200"/><path d="M0.600 10.100L11.600 0.600V10.100z" fill="#e0e0e0"/><path d="M2 3h3M3.500 1.500v3" stroke="#e0e0e0" stroke-width="0.900"/></svg>
<svg style="left:1800px;top:230px" width="12" height="11" viewBox="0 0 12 11"><path d="M0.800 0.800h10.400L6 10.200z" fill="none" stroke="#e0e0e0" stroke-width="1.300"/></svg>
<svg style="left:1737px;top:250px" width="12" height="10" viewBox="0 0 12 10"><path d="M6 1v2M1 4.500h10" stroke="#e0e0e0" stroke-width="1.100"/><circle cx="2.800" cy="7" r="2.200" fill="none" stroke="#e0e0e0" stroke-width="1.200"/><circle cx="9.200" cy="7" r="2.200" fill="none" stroke="#e0e0e0" stroke-width="1.200"/></svg>
<svg style="left:1755px;top:249px" width="12" height="11" viewBox="0 0 12 11"><rect x="0.600" y="0.600" width="10.800" height="9.800" fill="none" stroke="#e0e0e0" stroke-width="1.200"/><rect x="0.600" y="0.600" width="5.400" height="9.800" fill="#e0e0e0"/></svg>
<svg style="left:1772px;top:249px" width="14" height="13" viewBox="0 0 14 13"><rect x="0.600" y="2.500" width="10" height="7.500" rx="1" fill="#e0e0e0"/><rect x="3.500" y="0.800" width="4" height="2.500" fill="#e0e0e0"/><circle cx="5.600" cy="6.200" r="2.200" fill="#535353"/><circle cx="10.500" cy="9.500" r="2" fill="none" stroke="#e0e0e0" stroke-width="0.900"/></svg>
<svg style="left:1790px;top:249px" width="13" height="13" viewBox="0 0 13 13"><circle cx="6.500" cy="4.500" r="3.800" fill="#d8d8d8"/><circle cx="4" cy="8.500" r="3.800" fill="#b9b9b9"/><circle cx="9" cy="8.500" r="3.800" fill="#cdcdcd"/><circle cx="6.500" cy="7" r="1.600" fill="#777"/></svg>
<svg style="left:1809px;top:249px" width="13" height="11" viewBox="0 0 13 11"><rect x="0.600" y="0.600" width="11" height="9.800" fill="none" stroke="#e0e0e0" stroke-width="1.100"/><path d="M4.300 0.600v9.800M8 0.600v9.800M0.600 3.900h11M0.600 7.200h11" stroke="#e0e0e0" stroke-width="1"/></svg>
<div class="a" style="left:1737px;top:270px;width:3px;height:10px;background:#e0e0e0"></div>
<svg style="left:1745px;top:270px" width="12" height="10" viewBox="0 0 12 10"><rect x="0.600" y="0.600" width="10.800" height="8.800" fill="#999" stroke="#e0e0e0" stroke-width="1.100"/><path d="M1 8L10 1M1 5l5-4M5 9l6-5" stroke="#555" stroke-width="1"/></svg>
<svg style="left:1764px;top:270px" width="12" height="10" viewBox="0 0 12 10"><rect x="0.600" y="0.600" width="10.800" height="8.800" fill="#e0e0e0" stroke="#e0e0e0" stroke-width="1.100"/><path d="M0.600 8L11.400 2V6L0.600 9.400z" fill="#444"/></svg>
<svg style="left:1782px;top:270px" width="12" height="10" viewBox="0 0 12 10"><rect x="0.600" y="0.600" width="10.800" height="8.800" fill="#9a9a9a" stroke="#e0e0e0" stroke-width="1.100"/><path d="M0.600 0.600L6 5 11.400 0.600M0.600 9.400L6 5l5.400 4.400" stroke="#e0e0e0" stroke-width="1" fill="none"/></svg>
<svg style="left:1800px;top:270px" width="12" height="10" viewBox="0 0 12 10"><defs><linearGradient id="gg" x1="0" x2="1"><stop offset="0" stop-color="#333"/><stop offset="1" stop-color="#eee"/></linearGradient></defs><rect x="0.600" y="0.600" width="10.800" height="8.800" fill="url(#gg)" stroke="#e0e0e0" stroke-width="1.100"/></svg>
<div class="a" style="left:1755px;top:297px;width:56px;height:10px;background:#3f3f3f"></div>
<div class="a" style="left:1755px;top:307px;width:56px;height:29px;background:#535353;box-shadow:0 1px 2px rgba(0,0,0,.3)"></div>
<svg style="left:1788px;top:299.5px" width="7" height="5" viewBox="0 0 7 5" fill="none" stroke="#d4d4d4" stroke-width="1.1"><path d="M0.7 0.5L2.7 2.5 0.7 4.5M4 0.5L6 2.5 4 4.5"/></svg><svg style="left:1802.5px;top:299.5px" width="5" height="5" viewBox="0 0 5 5" fill="none" stroke="#d4d4d4" stroke-width="1.4"><path d="M0.5 0.5L4.5 4.5M4.5 0.5L0.5 4.5"/></svg>
<svg style="left:1762px;top:317px" width="13" height="13" viewBox="0 0 13 13"><circle cx="6.500" cy="4.500" r="3.800" fill="#dcdcdc"/><circle cx="4" cy="8.500" r="3.800" fill="#bdbdbd"/><circle cx="9" cy="8.500" r="3.800" fill="#d0d0d0"/><circle cx="6.500" cy="7" r="1.600" fill="#777"/></svg>
<div class="t" style="left:1783px;top:319px;font-size:9px;color:#e0e0e0">通道</div>
<div class="a" style="left:1601px;top:144px;width:136px;height:171px;background:#535353;box-shadow:0 1px 3px rgba(0,0,0,.4)"></div>
<div class="a" style="left:1683px;top:144px;width:54px;height:20px;background:#414141"></div>
<div class="a" style="left:1601px;top:308px;width:136px;height:7px;background:#4a4a4a"></div>
<div class="t" style="left:1608px;top:150px;font-size:7.600px;color:#e2e2e2;letter-spacing:-0.2px">BUTONG PERSPE...</div>
<svg style="left:1706px;top:150px" width="8" height="7" viewBox="0 0 8 7" fill="none" stroke="#b8b8b8" stroke-width="1"><path d="M0.700 0.700L3.500 3.500 0.700 6.300M4.200 0.700L7 3.500 4.200 6.300"/></svg>
<div class="a" style="left:1719px;top:149px;width:1px;height:9px;background:#9a9a9a"></div>
<div class="a" style="left:1724px;top:151px;width:7px;height:1px;background:#bdbdbd"></div><div class="a" style="left:1724px;top:153px;width:7px;height:1px;background:#bdbdbd"></div><div class="a" style="left:1724px;top:155px;width:7px;height:1px;background:#bdbdbd"></div>
<div class="a" style="left:1604px;top:167px;width:21.500px;height:13px;background:#6a6a6a"></div>
<div class="t" style="left:1606px;top:172px;font-size:9px;color:#f0f0f0;text-decoration:underline">网格</div>
<div class="t" style="left:1634px;top:172px;font-size:9px;color:#e4e4e4;text-decoration:underline">变形</div>
<div class="a" style="left:1604px;top:183.5px;width:121px;height:17px;background:#6b6b6b;border-top:1px solid #7a7a7a;border-bottom:1px solid #404040;box-sizing:border-box"></div>
<div class="a" style="left:1604px;top:205.5px;width:121px;height:17px;background:#6b6b6b;border-top:1px solid #7a7a7a;border-bottom:1px solid #404040;box-sizing:border-box"></div>
<div class="t" style="left:1608px;top:188.500px;font-size:9px;color:#f0f0f0">网格</div>
<div class="t" style="left:1608px;top:210.500px;font-size:9px;color:#f0f0f0">水平线</div>
<svg style="left:1687px;top:184px" width="28" height="17" viewBox="-14 -8.500 28 17" stroke="#9c9c9c" stroke-width="0.700"><path d="M0 0L13.5 0.0"/><path d="M0 0L13.0 2.1"/><path d="M0 0L11.7 4.0"/><path d="M0 0L9.5 5.7"/><path d="M0 0L6.8 6.9"/><path d="M0 0L3.5 7.7"/><path d="M0 0L0.0 8.0"/><path d="M0 0L-3.5 7.7"/><path d="M0 0L-6.7 6.9"/><path d="M0 0L-9.5 5.7"/><path d="M0 0L-11.7 4.0"/><path d="M0 0L-13.0 2.1"/><path d="M0 0L-13.5 0.0"/><path d="M0 0L-13.0 -2.1"/><path d="M0 0L-11.7 -4.0"/><path d="M0 0L-9.5 -5.7"/><path d="M0 0L-6.8 -6.9"/><path d="M0 0L-3.5 -7.7"/><path d="M0 0L-0.0 -8.0"/><path d="M0 0L3.5 -7.7"/><path d="M0 0L6.8 -6.9"/><path d="M0 0L9.5 -5.7"/><path d="M0 0L11.7 -4.0"/><path d="M0 0L13.0 -2.1"/><circle r="1.200" fill="#eee" stroke="none"/></svg>
<svg style="left:1683px;top:208px" width="36" height="13" viewBox="0 0 36 13" fill="none" stroke="#e8e8e8" stroke-width="1"><path d="M0 11.500h36"/><path d="M13 9.500a5 4.500 0 0 1 10 0" stroke-width="1.200"/><path d="M18 1.500v2M11.500 3.500l1.500 1.500M24.500 3.500L23 5M8.500 8h2M25.500 8h2" stroke-width="0.900"/></svg>
<div class="a" style="left:1604px;top:226px;width:59px;height:19px;background:#6b6b6b;border-top:1px solid #7a7a7a;border-bottom:1px solid #404040;box-sizing:border-box"></div>
<div class="a" style="left:1666px;top:226px;width:59px;height:19px;background:#6b6b6b;border-top:1px solid #7a7a7a;border-bottom:1px solid #404040;box-sizing:border-box"></div>
<svg style="left:1625px;top:228px" width="17" height="15" viewBox="0 0 17 15" fill="none" stroke="#f0f0f0" stroke-width="1.300"><path d="M7.500 1L14 8 7.500 14 1 8z"/><path d="M4 8l3.500-3.500L11 8" stroke-width="1.100"/><circle cx="7.500" cy="9" r="1.800" fill="#f0f0f0" stroke="none"/><circle cx="14.500" cy="12.500" r="1.500" fill="#f0f0f0" stroke="none"/></svg>
<svg style="left:1686px;top:230px" width="17" height="11" viewBox="0 0 17 11" fill="none" stroke="#f0f0f0" stroke-width="1.200"><path d="M1 5.500C4 1 12 1 16 5.500 12 10 4 10 1 5.500z"/><circle cx="8.500" cy="5.500" r="2" fill="#f0f0f0"/><path d="M3 10.500L14 0.500" stroke-width="1.600"/></svg>
<div class="a" style="left:1604px;top:247px;width:121px;height:57px;background:#838383;border-bottom:2px solid #9a9a9a;border-right:1px solid #909090;box-sizing:border-box"></div>
<div class="t" style="left:1605px;top:249.500px;font-size:9px;line-height:9.200px;color:#000;white-space:pre;letter-spacing:0.270px;-webkit-text-stroke:0.250px #000">Resize panel's window
for horizontal
or vertical
mode</div>
<div class="a" style="left:1685px;top:261px;width:38px;height:39px;background:#3a3a3a;border:1px solid #5a5a5a;box-sizing:border-box"></div>
<div class="a" style="left:1687px;top:266px;width:34px;height:3px;background:#555"></div><div class="a" style="left:1687px;top:273px;width:34px;height:5px;background:#5c5c5c"></div><div class="a" style="left:1687px;top:281px;width:34px;height:5px;background:#5c5c5c"></div><div class="a" style="left:1687px;top:289px;width:16px;height:6px;background:#5c5c5c"></div><div class="a" style="left:1705px;top:289px;width:16px;height:6px;background:#5c5c5c"></div>
<div class="a" style="left:1688px;top:364px;width:189px;height:603px;background:#535353;border-radius:3px 3px 0 0;box-shadow:0 1px 4px rgba(0,0,0,.4)"></div>
<div class="a" style="left:1688px;top:364px;width:189px;height:30px;background:#424242;border-radius:3px 3px 0 0"></div>
<div class="a" style="left:1688px;top:374px;width:31px;height:20px;background:#535353;border-radius:2px 2px 0 0"></div>
<div class="t" style="left:1695px;top:379.500px;font-size:9px;color:#e6e6e6">图层</div>
<svg style="left:1853.500px;top:367px" width="7" height="5" viewBox="0 0 7 5" fill="none" stroke="#d4d4d4" stroke-width="1.100"><path d="M3 0.500L1 2.500 3 4.500M6.300 0.500L4.300 2.500 6.300 4.500"/></svg>
<svg style="left:1868.500px;top:367px" width="5" height="5" viewBox="0 0 5 5" fill="none" stroke="#d4d4d4" stroke-width="1.400"><path d="M0.500 0.500L4.500 4.500M4.500 0.500L0.500 4.500"/></svg>
<div class="a" style="left:1866px;top:382px;width:7px;height:1.500px;background:#bdbdbd"></div><div class="a" style="left:1866px;top:385px;width:7px;height:1.500px;background:#bdbdbd"></div>
<div class="a" style="left:1691px;top:401px;width:65px;height:16px;background:#404040;border:1px solid #393939;box-sizing:border-box;border-radius:2px"></div>
<svg style="left:1697px;top:405px" width="9" height="9" viewBox="0 0 9 9" fill="none" stroke="#e4e4e4" stroke-width="1.500"><circle cx="3.500" cy="3.500" r="2.600"/><path d="M5.500 5.500L8 8"/></svg>
<div class="t" style="left:1708px;top:406px;font-size:9px;color:#e6e6e6">类型</div>
<svg style="left:1747px;top:408px" width="6" height="4" viewBox="0 0 6 4" fill="none" stroke="#b0b0b0" stroke-width="1"><path d="M0.500 0.500l2.500 2.500L5.500 0.500"/></svg>
<svg style="left:1768px;top:404px" width="10" height="9" viewBox="0 0 10 9"><rect x="0.600" y="0.600" width="8.800" height="7" rx="1" fill="none" stroke="#e0e0e0" stroke-width="1"/><path d="M2 6.500l1.500-2 1.500 1.500 1-1 2 1.500z" fill="#e0e0e0"/></svg>
<svg style="left:1786px;top:404px" width="10" height="10" viewBox="0 0 10 10"><circle cx="5" cy="5" r="4" fill="none" stroke="#e0e0e0" stroke-width="1.100"/><path d="M5 1A4 4 0 0 0 2 8L8 2A4 4 0 0 0 5 1z" fill="#e0e0e0"/></svg>
<div class="t" style="left:1805px;top:403px;font-size:11px;color:#e0e0e0;font-family:'Liberation Serif',serif;font-weight:bold">T</div>
<svg style="left:1822px;top:404px" width="10" height="10" viewBox="0 0 10 10" fill="none" stroke="#e0e0e0" stroke-width="1.200"><rect x="1.500" y="1.500" width="7" height="7"/><rect x="0.300" y="0.300" width="2" height="2" fill="#e0e0e0" stroke="none"/><rect x="7.700" y="0.300" width="2" height="2" fill="#e0e0e0" stroke="none"/><rect x="0.300" y="7.700" width="2" height="2" fill="#e0e0e0" stroke="none"/><rect x="7.700" y="7.700" width="2" height="2" fill="#e0e0e0" stroke="none"/></svg>
<svg style="left:1841px;top:403px" width="10" height="11" viewBox="0 0 10 11"><path d="M2.500 0.500h4l2.500 2.500v5h-6.500z" fill="none" stroke="#e0e0e0" stroke-width="1"/><rect x="0.500" y="5" width="5.500" height="5.500" fill="#e0e0e0"/></svg>
<div class="a" style="left:1861.500px;top:402.500px;width:6px;height:6px;border-radius:3px;background:#e6e6e6"></div>
<div class="a" style="left:1691px;top:423px;width:87px;height:16px;background:#404040;border:1px solid #393939;box-sizing:border-box;border-radius:2px"></div>
<div class="t" style="left:1698px;top:428px;font-size:9px;color:#e6e6e6">正常</div>
<svg style="left:1771px;top:430px" width="6" height="4" viewBox="0 0 6 4" fill="none" stroke="#b0b0b0" stroke-width="1"><path d="M0.500 0.500l2.500 2.500L5.500 0.500"/></svg>
<div class="t" style="left:1784px;top:427px;font-size:9px;color:#dcdcdc">不透明度:</div>
<div class="a" style="left:1827px;top:423px;width:28px;height:15px;background:#4b4b4b"></div>
<div class="t" style="left:1830px;top:426.500px;font-size:8.500px;color:#e6e6e6">100%</div>
<div class="a" style="left:1857px;top:423px;width:11px;height:15px;background:#4b4b4b"></div>
<svg style="left:1859.500px;top:429px" width="6" height="4" viewBox="0 0 6 4" fill="none" stroke="#b0b0b0" stroke-width="1"><path d="M0.500 0.500l2.500 2.500L5.500 0.500"/></svg>
<div class="a" style="left:1688px;top:441px;width:189px;height:1px;background:#484848"></div>
<div class="t" style="left:1693px;top:449px;font-size:9px;color:#dcdcdc">锁定:</div>
<svg style="left:1721.500px;top:447px" width="9" height="9" viewBox="0 0 9 9"><rect x="0.400" y="0.400" width="8.200" height="8.200" fill="none" stroke="#e0e0e0" stroke-width="0.800"/><rect x="0.400" y="0.400" width="2.800" height="2.800" fill="#e0e0e0"/><rect x="5.800" y="0.400" width="2.800" height="2.800" fill="#e0e0e0"/><rect x="3.100" y="3.100" width="2.800" height="2.800" fill="#e0e0e0"/><rect x="0.400" y="5.800" width="2.800" height="2.800" fill="#e0e0e0"/><rect x="5.800" y="5.800" width="2.800" height="2.800" fill="#e0e0e0"/></svg>
<svg style="left:1738px;top:447px" width="10" height="10" viewBox="0 0 10 10"><path d="M9.500 0.500L4 6.500" stroke="#e0e0e0" stroke-width="1.800" stroke-linecap="round"/><path d="M0.500 9.800C1 7 2.500 6 3.800 6.300 4.800 7.500 3.500 9.500 0.500 9.800z" fill="#e0e0e0"/></svg>
<svg style="left:1754px;top:446.500px" width="11" height="11" viewBox="0 0 11 11" fill="#e0e0e0" stroke="#e0e0e0" stroke-width="1"><path d="M5.500 1.500v8M1.500 5.500h8" fill="none"/><path d="M5.500 0L7 2H4zM5.500 11L7 9H4zM0 5.500L2 4v3zM11 5.500L9 4v3z" stroke="none"/></svg>
<svg style="left:1771px;top:447px" width="11" height="10" viewBox="0 0 11 10" fill="none" stroke="#e0e0e0" stroke-width="1.100"><path d="M2.500 0v7.500H11M0 2.500h7.500V10"/><path d="M7.500 2.500l2-2" stroke-width="0.800"/></svg>
<svg style="left:1788.500px;top:446.500px" width="9" height="10" viewBox="0 0 9 10"><path d="M2.300 4.500V3a2.200 2.200 0 0 1 4.400 0v1.500" fill="none" stroke="#e0e0e0" stroke-width="1.200"/><rect x="0.500" y="4.500" width="8" height="5.500" rx="0.800" fill="#e0e0e0"/><rect x="4" y="6.300" width="1" height="2" fill="#535353"/></svg>
<div class="t" style="left:1802px;top:449px;font-size:9px;color:#dcdcdc">填充:</div>
<div class="a" style="left:1827px;top:445px;width:28px;height:15px;background:#4b4b4b"></div>
<div class="t" style="left:1830px;top:448.500px;font-size:8.500px;color:#e6e6e6">100%</div>
<div class="a" style="left:1857px;top:445px;width:11px;height:15px;background:#4b4b4b"></div>
<svg style="left:1859.500px;top:451px" width="6" height="4" viewBox="0 0 6 4" fill="none" stroke="#b0b0b0" stroke-width="1"><path d="M0.500 0.500l2.500 2.500L5.500 0.500"/></svg>
<svg width="0" height="0" style="left:0;top:0"><defs><pattern id="chk" width="4" height="4" patternUnits="userSpaceOnUse"><rect width="4" height="4" fill="#fff"/><rect width="2" height="2" fill="#cfcfcf"/><rect x="2" y="2" width="2" height="2" fill="#cfcfcf"/></pattern></defs></svg>
<div class="a" style="left:1689px;top:497.9px;width:176px;height:1px;background:#4a4a4a"></div>
<div class="a" style="left:1697px;top:476.5px;width:7px;height:9px;border-right:1px solid #5f5f5f;border-bottom:1px solid #5f5f5f"></div>
<svg style="left:1715px;top:468.7px" width="59" height="25.500" viewBox="0 0 59 25.500"><rect width="59" height="25.500" fill="url(#chk)" stroke="#333" stroke-width="1"/></svg>
<div class="a" style="left:1719px;top:473.7px;width:22px;height:10px;background:radial-gradient(ellipse,rgba(150,150,150,.4),rgba(150,150,150,0) 70%)"></div>
<div class="t" style="left:1781.500px;top:478.0px;font-size:9px;color:#e6e6e6;word-spacing:1px">图层 1</div>
<div class="a" style="left:1689px;top:531.7px;width:176px;height:1px;background:#4a4a4a"></div>
<div class="a" style="left:1697px;top:510.3px;width:7px;height:9px;border-right:1px solid #5f5f5f;border-bottom:1px solid #5f5f5f"></div>
<svg style="left:1715px;top:502.5px" width="59" height="25.500" viewBox="0 0 59 25.500"><rect width="59" height="25.500" fill="url(#chk)" stroke="#333" stroke-width="1"/></svg>
<div class="t" style="left:1781.500px;top:511.8px;font-size:9px;color:#e6e6e6;word-spacing:1px">图层 4</div>
<div class="a" style="left:1689px;top:565.5px;width:176px;height:1px;background:#4a4a4a"></div>
<div class="a" style="left:1697px;top:544.1px;width:7px;height:9px;border-right:1px solid #5f5f5f;border-bottom:1px solid #5f5f5f"></div>
<svg style="left:1715px;top:536.3px" width="59" height="25.500" viewBox="0 0 59 25.500"><rect width="59" height="25.500" fill="url(#chk)" stroke="#333" stroke-width="1"/></svg>
<div class="t" style="left:1781.500px;top:545.6px;font-size:9px;color:#e6e6e6;word-spacing:1px">图层 9</div>
<div class="a" style="left:1689px;top:599.3px;width:176px;height:1px;background:#4a4a4a"></div>
<div class="a" style="left:1697px;top:577.9px;width:7px;height:9px;border-right:1px solid #5f5f5f;border-bottom:1px solid #5f5f5f"></div>
<svg style="left:1715px;top:570.1px" width="59" height="25.500" viewBox="0 0 59 25.500"><rect width="59" height="25.500" fill="url(#chk)" stroke="#333" stroke-width="1"/></svg>
<div class="a" style="left:1734px;top:578.1px;width:3px;height:3px;background:#777"></div>
<div class="t" style="left:1781.500px;top:579.4px;font-size:9px;color:#e6e6e6;word-spacing:1px">图层 7</div>
<div class="a" style="left:1689px;top:633.1px;width:176px;height:1px;background:#4a4a4a"></div>
<div class="a" style="left:1697px;top:611.7px;width:7px;height:9px;border-right:1px solid #5f5f5f;border-bottom:1px solid #5f5f5f"></div>
<svg style="left:1715px;top:603.9px" width="59" height="25.500" viewBox="0 0 59 25.500"><rect width="59" height="25.500" fill="url(#chk)" stroke="#333" stroke-width="1"/></svg>
<div class="a" style="left:1720px;top:608.9px;width:22px;height:14px;background:#8a9398;opacity:.85"></div>
<div class="t" style="left:1781.500px;top:613.2px;font-size:9px;color:#e6e6e6;word-spacing:1px">图层 6</div>
<div class="a" style="left:1689px;top:666.9px;width:176px;height:1px;background:#4a4a4a"></div>
<div class="a" style="left:1697px;top:645.5px;width:7px;height:9px;border-right:1px solid #5f5f5f;border-bottom:1px solid #5f5f5f"></div>
<svg style="left:1715px;top:637.7px" width="59" height="25.500" viewBox="0 0 59 25.500"><rect width="59" height="25.500" fill="url(#chk)" stroke="#333" stroke-width="1"/></svg>
<div class="a" style="left:1729px;top:647.7px;width:9px;height:8px;background:#6d767a;opacity:.9"></div><div class="a" style="left:1743px;top:651.7px;width:6px;height:3px;background:#666;transform:rotate(-25deg)"></div>
<div class="t" style="left:1781.500px;top:647.0px;font-size:9px;color:#e6e6e6;word-spacing:1px">图层 3</div>
<div class="a" style="left:1689px;top:700.7px;width:176px;height:1px;background:#4a4a4a"></div>
<div class="a" style="left:1697px;top:679.3px;width:7px;height:9px;border-right:1px solid #5f5f5f;border-bottom:1px solid #5f5f5f"></div>
<svg style="left:1715px;top:671.5px" width="59" height="25.500" viewBox="0 0 59 25.500"><rect width="59" height="25.500" fill="url(#chk)" stroke="#333" stroke-width="1"/></svg>
<div class="t" style="left:1781.500px;top:680.8px;font-size:9px;color:#e6e6e6;word-spacing:1px">图层 10</div>
<div class="a" style="left:1689px;top:734.5px;width:176px;height:1px;background:#4a4a4a"></div>
<div class="a" style="left:1697px;top:713.1px;width:7px;height:9px;border-right:1px solid #5f5f5f;border-bottom:1px solid #5f5f5f"></div>
<svg style="left:1715px;top:705.3px" width="59" height="25.500" viewBox="0 0 59 25.500"><rect width="59" height="25.500" fill="url(#chk)" stroke="#333" stroke-width="1"/></svg>
<div class="a" style="left:1743px;top:719.3px;width:10px;height:5px;background:#3a3a3a;border-radius:50%;transform:rotate(-12deg)"></div>
<div class="t" style="left:1781.500px;top:714.6px;font-size:9px;color:#e6e6e6;word-spacing:1px">图层 5</div>
<div class="a" style="left:1689px;top:735.6px;width:176px;height:32.500px;background:#6b6b6b"></div>
<div class="a" style="left:1689px;top:768.3px;width:176px;height:1px;background:#4a4a4a"></div>
<svg style="left:1695px;top:748.4px" width="10" height="7" viewBox="0 0 10 7"><path d="M0.300 3.500C2.500 0 7.500 0 9.700 3.500 7.500 7 2.500 7 0.300 3.500z" fill="#ececec"/><circle cx="5" cy="3.500" r="1.700" fill="#535353"/></svg>
<svg style="left:1715px;top:739.1px" width="59" height="25.500" viewBox="0 0 59 25.500"><rect width="59" height="25.500" fill="url(#chk)" stroke="#333" stroke-width="1"/></svg>
<div class="a" style="left:1713px;top:737.1px;width:63px;height:29.500px;border:1px solid #e8e8e8;box-sizing:border-box"></div>
<div class="a" style="left:1742px;top:745.1px;width:26px;height:16px;background:radial-gradient(ellipse,rgba(120,120,120,.45),rgba(120,120,120,0) 70%)"></div>
<div class="t" style="left:1781.500px;top:748.4px;font-size:9px;color:#e6e6e6;word-spacing:1px">图层 12</div>
<div class="a" style="left:1689px;top:802.1px;width:176px;height:1px;background:#4a4a4a"></div>
<svg style="left:1695px;top:782.2px" width="10" height="7" viewBox="0 0 10 7"><path d="M0.300 3.500C2.500 0 7.500 0 9.700 3.500 7.500 7 2.500 7 0.300 3.500z" fill="#ececec"/><circle cx="5" cy="3.500" r="1.700" fill="#535353"/></svg>
<svg style="left:1715px;top:772.9px" width="59" height="25.500" viewBox="0 0 59 25.500"><rect width="59" height="25.500" fill="url(#chk)" stroke="#333" stroke-width="1"/></svg>
<div class="a" style="left:1716px;top:782.4px;width:20px;height:11px;background:#0b0b0c"></div><div class="a" style="left:1721px;top:784.9px;width:9px;height:6px;background:#8fa3a8"></div>
<div class="t" style="left:1781.500px;top:782.2px;font-size:9px;color:#e6e6e6;word-spacing:1px">图层 11</div>
<div class="a" style="left:1689px;top:835.9px;width:176px;height:1px;background:#4a4a4a"></div>
<svg style="left:1695px;top:816.0px" width="10" height="7" viewBox="0 0 10 7"><path d="M0.300 3.500C2.500 0 7.500 0 9.700 3.500 7.500 7 2.500 7 0.300 3.500z" fill="#ececec"/><circle cx="5" cy="3.500" r="1.700" fill="#535353"/></svg>
<div class="a" style="left:1715px;top:806.7px;width:59px;height:25.500px;background:#9a9a9a;border:1px solid #6e6e6e;box-sizing:border-box"></div>
<div class="t" style="left:1781.500px;top:816.0px;font-size:9px;color:#e6e6e6;word-spacing:1px">背景</div>
<svg style="left:1845px;top:814.5px" width="9" height="10" viewBox="0 0 9 10"><path d="M2.300 4.500V3a2.200 2.200 0 0 1 4.400 0v1.500" fill="none" stroke="#d8d8d8" stroke-width="1.100"/><rect x="0.800" y="4.500" width="7.400" height="5" rx="0.800" fill="none" stroke="#d8d8d8" stroke-width="1.100"/></svg>
<div class="a" style="left:1688px;top:962px;width:189px;height:5px;background:#484848"></div>
<svg style="left:1726px;top:949px" width="11" height="6" viewBox="0 0 11 6" fill="none" stroke="#6e6e6e" stroke-width="1.200"><rect x="0.600" y="0.600" width="5" height="4.500" rx="2.200"/><rect x="5.400" y="0.600" width="5" height="4.500" rx="2.200"/></svg>
<div class="t" style="left:1746px;top:947px;font-size:10px;color:#dcdcdc;font-style:italic;font-family:'Liberation Serif',serif">fx</div>
<svg style="left:1766px;top:947.5px" width="10" height="8" viewBox="0 0 10 8"><rect width="10" height="8" rx="0.800" fill="#dcdcdc"/><circle cx="5" cy="4" r="2.200" fill="#535353"/></svg>
<svg style="left:1787px;top:947.5px" width="10" height="10" viewBox="0 0 10 10"><circle cx="5" cy="5" r="4" fill="none" stroke="#dcdcdc" stroke-width="1.100"/><path d="M5 1A4 4 0 0 0 2 8L8 2A4 4 0 0 0 5 1z" fill="#dcdcdc"/></svg>
<svg style="left:1807px;top:947.5px" width="10" height="8" viewBox="0 0 10 8"><path d="M0 1h3.500l1 1H10v6H0z" fill="#dcdcdc"/></svg>
<svg style="left:1828px;top:947.5px" width="9" height="9" viewBox="0 0 9 9" fill="none" stroke="#dcdcdc" stroke-width="1"><rect x="0.500" y="0.500" width="8" height="8" rx="0.800"/><path d="M4.500 2.500v4M2.500 4.500h4"/></svg>
<svg style="left:1847px;top:947px" width="9" height="10" viewBox="0 0 9 10" fill="none" stroke="#dcdcdc" stroke-width="1"><path d="M0.500 2.500h8M3 2.500V1h3v1.500M1.500 2.500v7h6v-7"/><path d="M3.500 4.500v3M5.500 4.500v3" stroke-width="0.800"/></svg>
<div class="a" style="left:44px;top:1036px;width:1861px;height:13px;background:#424242"></div>
<div class="t" style="left:40px;top:1038.500px;font-size:8px;color:#9c9c9c">50%</div>
<div class="t" style="left:70px;top:1038.500px;font-size:8px;color:#9c9c9c">4000 像素 x 1700 像素 (300 ppi)</div>
<svg style="left:196px;top:1039px" width="4" height="7" viewBox="0 0 4 7" fill="none" stroke="#8a8a8a" stroke-width="1"><path d="M0.500 0.500l3 3-3 3"/></svg>
<div class="a" style="left:0;top:870px;width:1920px;height:179px;background:linear-gradient(to bottom,rgba(0,0,0,0) 0.0%,rgba(0,0,0,0.03) 4.3%,rgba(0,0,0,0.1) 12.4%,rgba(0,0,0,0.18) 20.4%,rgba(0,0,0,0.26) 33.9%,rgba(0,0,0,0.33) 47.3%,rgba(0,0,0,0.4) 60.8%,rgba(0,0,0,0.46) 74.2%,rgba(0,0,0,0.5) 87.6%,rgba(0,0,0,0.53) 100.0%)"></div>
<div class="a" style="left:0;top:0;width:48px;height:32px;background:rgba(0,0,0,.32)"></div>
<svg style="left:17px;top:8px" width="15" height="13" viewBox="0 0 15 13" fill="none" stroke="#fff" stroke-width="1.400" stroke-linecap="square"><path d="M14 6.500H1.500M6.500 1L1 6.500 6.500 12"/></svg>
<div class="a" style="left:1138px;top:969px;width:758px;height:2px;background:#4e4e4e"></div>
<div class="a" style="left:24px;top:967.800px;width:1096px;height:4.400px;background:#459ce3"></div>
<div class="a" style="left:1118px;top:960px;width:20px;height:20px;border-radius:50%;border:2px solid #7db7ea;background:#222;box-sizing:border-box"></div>
<div class="t" style="left:1680px;top:967.500px;font-size:15.500px;color:rgba(255,255,255,.16)">激活 Windows</div>
<div class="t" style="left:1680px;top:987px;font-size:11.500px;color:rgba(255,255,255,.16)">转到"设置"以激活 Windows。</div>
<div class="t" style="left:24px;top:984.500px;font-size:12px;letter-spacing:-0.500px;color:#fff;-webkit-text-stroke:0.300px #fff">1:06:01</div>
<div class="t" style="right:24px;top:984.500px;font-size:12px;letter-spacing:-0.500px;color:#fff;-webkit-text-stroke:0.300px #fff">0:45:48</div>
<svg style="left:38px;top:1016px" width="22" height="18" viewBox="0 0 22 18" fill="none" stroke="#fff" stroke-width="1.400"><path d="M1 6.200h3.200L8.500 2v14L4.200 11.800H1z" stroke-linejoin="miter"/><path d="M11.500 6a4.500 4.500 0 0 1 0 6M14.300 3.500a8 8 0 0 1 0 11M17.200 1.200a11.500 11.500 0 0 1 0 15.600"/></svg>
<svg style="left:89px;top:1016px" width="21" height="18" viewBox="0 0 21 18" fill="none" stroke="#fff" stroke-width="1.500"><path d="M1 1h19v11.500H7L2.800 16.500V12.500H1z"/><path d="M1 7.800h19M1 10.300h19" stroke-width="1.300"/></svg>
<svg style="left:899px;top:1015px" width="22" height="22" viewBox="0 0 22 22" fill="none" stroke="#fff" stroke-width="1.500"><path d="M2.800 8.500A9 9 0 0 1 20 9.500"/><path d="M1.500 3v6h6" stroke-linejoin="miter"/></svg>
<div class="t" style="left:903px;top:1024.500px;font-size:11.500px;letter-spacing:-0.700px;color:#fff;-webkit-text-stroke:0.300px #fff">10</div>
<div class="a" style="left:955.500px;top:1017px;width:2px;height:16px;background:#fff"></div><div class="a" style="left:962.500px;top:1017px;width:2px;height:16px;background:#fff"></div>
<svg style="left:999px;top:1015px" width="22" height="22" viewBox="0 0 22 22" fill="none" stroke="#fff" stroke-width="1.500"><path d="M19.200 8.500A9 9 0 0 0 2 9.500"/><path d="M20.500 3v6h-6" stroke-linejoin="miter"/></svg>
<div class="t" style="left:1003px;top:1024.500px;font-size:11.500px;letter-spacing:-0.700px;color:#fff;-webkit-text-stroke:0.300px #fff">30</div>
<svg style="left:1710px;top:1014px" width="22" height="22" viewBox="0 0 22 22" fill="none" stroke="#fff" stroke-width="1.500" stroke-linejoin="round"><path d="M2 20l1.500-5.500L15.500 2.500a2 2 0 0 1 2.800 0l1.200 1.200a2 2 0 0 1 0 2.800L7.500 18.500z"/><path d="M13.500 4.500l4 4"/></svg>
<svg style="left:1760.500px;top:1018px" width="21" height="14" viewBox="0 0 21 14" fill="none" stroke="#fff" stroke-width="1.500"><rect x="0.800" y="0.800" width="19.400" height="12.400"/><rect x="9" y="4.500" width="8.500" height="5.500" stroke-width="1.300"/><path d="M11 7h3.500" stroke-width="1"/></svg>
<svg style="left:1811px;top:1015px" width="20" height="20" viewBox="0 0 20 20" fill="none" stroke="#fff" stroke-width="1.500"><path d="M19.500 0.500L12 8M12 2.500V8h5.500M0.500 19.500L8 12M8 17.500V12H2.500"/></svg>
<div class="a" style="left:1861px;top:1023.500px;width:3px;height:3px;border-radius:50%;background:#fff"></div>
<div class="a" style="left:1869.5px;top:1023.500px;width:3px;height:3px;border-radius:50%;background:#fff"></div>
<div class="a" style="left:1878px;top:1023.500px;width:3px;height:3px;border-radius:50%;background:#fff"></div>
<div class="a" style="left:0;top:1049px;width:1920px;height:31px;background:#111313"></div>
<div class="a" style="left:221px;top:1049px;width:119px;height:31px;background:#1f2122"></div>
<div class="a" style="left:221px;top:1078.500px;width:119px;height:1.500px;background:#41586b"></div>
<div class="a" style="left:0;top:0;width:1920px;height:1080px;opacity:.66">
<svg style="left:12px;top:1059px" width="13" height="13" viewBox="0 0 13 13" fill="#9a9a9a"><path d="M0 1.800L5.500 1v5H0zM6.500 0.900L13 0v6H6.500zM0 7h5.500v5L0 11.200zM6.500 7H13v6l-6.500-0.900z"/></svg>
<div class="a" style="left:48px;top:1059px;width:12px;height:12px;border-radius:50%;border:1.600px solid #a8a8a8;box-sizing:border-box"></div>
<svg style="left:83px;top:1059px" width="14" height="12" viewBox="0 0 14 12" fill="none" stroke="#9a9a9a" stroke-width="1.200"><rect x="3" y="2.500" width="7" height="7"/><path d="M0.600 2v8M12.500 2v2.500M12.500 6.500v3.500M3 0.600h7"/></svg>
<div class="t" style="left:121px;top:1055px;font-size:19px;color:#3f8fd0;font-weight:bold;font-style:italic">e</div>
<div class="t" style="left:159px;top:1057px;font-size:15px;color:#b08c2c;font-weight:bold">G</div>
<div class="a" style="left:195px;top:1058px;width:15px;height:15px;border-radius:50%;background:conic-gradient(#b8392f 0 120deg,#b9962a 120deg 240deg,#3b8a4a 240deg 360deg)"></div><div class="a" style="left:199.500px;top:1062.500px;width:6px;height:6px;border-radius:50%;background:#3f78c2;border:1px solid #ccc;box-sizing:border-box"></div>
<div class="a" style="left:229px;top:1057px;width:15px;height:15px;background:#0b1e35;border-radius:2px"></div><div class="t" style="left:231.500px;top:1060.500px;font-size:9px;color:#2f86c9;font-weight:bold">Ps</div>
<div class="t" style="left:249px;top:1059.500px;font-size:9.500px;color:#8a8a8a">未标题-1 @ 50% (...</div>
<svg style="left:352px;top:1058px" width="15" height="15" viewBox="-7.500 -7.500 15 15" fill="#8e9a96"><circle r="3"/><circle cx="0" cy="-4" r="3"/><circle cx="3.800" cy="-1.300" r="3"/><circle cx="2.400" cy="3.300" r="3"/><circle cx="-2.400" cy="3.300" r="3"/><circle cx="-3.800" cy="-1.300" r="3"/></svg>
<div class="a" style="left:387px;top:1058px;width:15px;height:15px;border-radius:50%;background:#2e6fae"></div><div class="a" style="left:391px;top:1063px;width:11px;height:8px;border-radius:50%;background:#111313"></div><div class="a" style="left:393px;top:1066px;width:10px;height:6px;border-radius:40%;background:#8fb3cf"></div>
<svg style="left:424px;top:1058px" width="15" height="15" viewBox="0 0 15 15"><path d="M1 9L6 11.500 9.500 6.500" stroke="#8b98a6" stroke-width="2.200" fill="none"/><circle cx="10.500" cy="5" r="3.300" fill="none" stroke="#8b98a6" stroke-width="1.600"/><circle cx="5" cy="11" r="2.300" fill="#8b98a6"/></svg>
<svg style="left:463px;top:1057px" width="11" height="15" viewBox="0 0 11 15"><path d="M0 0h7.500L11 3.500V15H0z" fill="#8a8a8a"/></svg>
<div class="a" style="left:496px;top:1057px;width:16px;height:16px;border-radius:50%;background:#a8a8a8"></div><div class="a" style="left:500px;top:1061px;width:8px;height:8px;border-radius:50%;border:1px solid #444;box-sizing:border-box"></div>
<div class="t" style="left:517px;top:1059.500px;font-size:9.500px;color:#8a8a8a">Wacom 桌面中心</div>
<svg style="left:617px;top:1057px" width="12" height="15" viewBox="0 0 12 15"><path d="M1 0h10v15l-5-2-5 2z" fill="#a58a36"/><rect x="3" y="2" width="6" height="8" fill="#c9ad4c"/></svg>
<div class="t" style="left:636px;top:1059.500px;font-size:9.500px;color:#8a8a8a">D:\Desktop\参考...</div>
<svg style="left:737px;top:1056px" width="17" height="18" viewBox="0 0 17 18" fill="none" stroke="#9a9a9a" stroke-width="1.500"><circle cx="9" cy="7" r="5.500"/><circle cx="9" cy="7" r="2.300"/><path d="M4.500 10.500L1.500 16.500h5M12 11l3.500 5"/></svg>
<div class="t" style="left:758px;top:1059.500px;font-size:9.500px;color:#8a8a8a">PureRef - NewSc...</div>
<div class="a" style="left:858px;top:1058px;width:12px;height:10px;border-radius:50%;background:#3f9a56"></div><div class="a" style="left:865px;top:1063px;width:11px;height:9px;border-radius:50%;background:#55b06a"></div>
<div class="t" style="left:878px;top:1059.500px;font-size:9.500px;color:#8a8a8a">微信</div>
<div class="a" style="left:980px;top:1057px;width:14px;height:15px;border-radius:4px;background:#1f3f9a"></div><div class="a" style="left:984px;top:1063px;width:7px;height:6px;border-radius:0 0 4px 4px;background:#c8d4ee"></div>
<div class="t" style="left:999px;top:1059.500px;font-size:9.500px;color:#8a8a8a">Live-小鹅通助手</div>
<div class="a" style="left:1100px;top:1058px;width:15px;height:15px;border-radius:50%;background:#2e6fae"></div><div class="a" style="left:1104px;top:1063px;width:11px;height:8px;border-radius:50%;background:#111313"></div><div class="a" style="left:1106px;top:1066px;width:10px;height:6px;border-radius:40%;background:#8fb3cf"></div>
<div class="t" style="left:1120px;top:1059.500px;font-size:9.500px;color:#8a8a8a">Sci-Fi Design，ar...</div>
<div class="a" style="left:482px;top:1078px;width:124px;height:2px;background:#3f5f7a"></div>
<div class="a" style="left:609px;top:1078px;width:116px;height:2px;background:#3f5f7a"></div>
<div class="a" style="left:733px;top:1078px;width:112px;height:2px;background:#3f5f7a"></div>
<div class="a" style="left:853px;top:1078px;width:115px;height:2px;background:#3f5f7a"></div>
<div class="a" style="left:975px;top:1078px;width:113px;height:2px;background:#3f5f7a"></div>
<div class="a" style="left:1095px;top:1078px;width:115px;height:2px;background:#3f5f7a"></div>
<svg style="left:1562px;top:1058px" width="12" height="12" viewBox="0 0 12 12" fill="#8a8a8a"><rect x="1" y="1" width="2" height="2"/><rect x="5" y="1" width="2" height="2"/><rect x="9" y="1" width="2" height="2"/><rect x="1" y="5" width="2" height="2"/><rect x="5" y="5" width="2" height="2"/><rect x="9" y="5" width="2" height="2"/><rect x="4" y="9" width="4" height="2"/></svg>
<div class="a" style="left:1581px;top:1059px;width:9px;height:8px;border-radius:50%;background:#3f9a56"></div><div class="a" style="left:1586px;top:1063px;width:8px;height:7px;border-radius:50%;background:#55b06a"></div>
<div class="a" style="left:1600px;top:1059px;width:11px;height:11px;border-radius:50%;background:#b04a5a"></div><div class="a" style="left:1604.500px;top:1059px;width:2px;height:11px;background:#e8d8da"></div><div class="a" style="left:1600px;top:1063.500px;width:11px;height:2px;background:#e8d8da"></div>
<div class="a" style="left:1619px;top:1058px;width:6px;height:6px;border-radius:50%;background:#c8a070"></div><div class="a" style="left:1616px;top:1064px;width:12px;height:6px;border-radius:5px 5px 0 0;background:#c07a3a"></div>
<div class="a" style="left:1636px;top:1059px;width:11px;height:11px;background:#b39a3a"></div><div class="a" style="left:1636px;top:1059px;width:11px;height:3px;background:#cdb458"></div>
<svg style="left:1654px;top:1058px" width="10" height="12" viewBox="0 0 10 12"><path d="M5 0L10 2V6.500C10 9.500 7.500 11.300 5 12 2.500 11.300 0 9.500 0 6.500V2z" fill="#b89a48"/><path d="M5 0V12C2.500 11.300 0 9.500 0 6.500V2z" fill="#cdb060"/></svg>
<svg style="left:1671px;top:1058px" width="12" height="12" viewBox="0 0 12 12"><path d="M6 0L12 2V6.500C12 9.500 9 11.300 6 12 3 11.300 0 9.500 0 6.500V2z" fill="#3f8a80"/><path d="M3 6l2.200 2.200L9 4.200" stroke="#d8eee8" stroke-width="1.300" fill="none"/></svg>
<svg style="left:1691px;top:1060px" width="10" height="10" viewBox="0 0 10 10" fill="none" stroke="#8e8e8e" stroke-width="1.100"><circle cx="3.500" cy="3.500" r="2.500"/><circle cx="7" cy="7" r="2.300"/></svg>
<div class="a" style="left:1709.500px;top:1057px;width:5px;height:9px;border-radius:2.500px;background:#9a9a9a"></div><div class="a" style="left:1711.500px;top:1066px;width:1px;height:4px;background:#9a9a9a"></div><div class="a" style="left:1709px;top:1070px;width:6px;height:1px;background:#9a9a9a"></div>
<svg style="left:1725px;top:1059px" width="12" height="11" viewBox="0 0 12 11" fill="none" stroke="#9a9a9a" stroke-width="1.100"><rect x="2.500" y="0.600" width="9" height="6.500"/><path d="M7 7.100v2.400M4.500 9.800h5M0.600 3v5.500h2"/></svg>
<svg style="left:1742px;top:1059px" width="12" height="11" viewBox="0 0 12 11" fill="none" stroke="#9a9a9a" stroke-width="1"><path d="M0.600 3.800h2L5.500 1v9L2.600 7.200h-2z"/><path d="M7.300 3.500a3 3 0 0 1 0 4M9 2a5.500 5.500 0 0 1 0 7"/></svg>
<svg style="left:1764px;top:1058px" width="13" height="13" viewBox="0 0 13 13" fill="none" stroke="#9a9a9a" stroke-width="1.200"><path d="M1 12L4 5.500 9.500 1.500 11.500 3.500 7.500 9z"/><circle cx="3" cy="10" r="1.700"/></svg>
<div class="t" style="left:1785px;top:1060px;font-size:10px;color:#9a9a9a">英</div>
<div class="a" style="left:1805px;top:1058px;width:12px;height:12px;background:#b8452f;border-radius:2px"></div><div class="t" style="left:1807.500px;top:1059.500px;font-size:9px;color:#eee;font-weight:bold">S</div>
<div class="t" style="left:1832px;top:1053.500px;width:40px;text-align:center;font-size:9px;color:#8a8a8a">21:09</div>
<div class="t" style="left:1827px;top:1067.500px;width:50px;text-align:center;font-size:9px;color:#8a8a8a">2023/3/18</div>
<svg style="left:1888px;top:1059px" width="13" height="12" viewBox="0 0 13 12" fill="none" stroke="#a0a0a0" stroke-width="1.100"><path d="M0.600 0.600h11.800v8H7L4.500 11V8.600H0.600z"/></svg>
</div>
</div>
</body>
</html>
